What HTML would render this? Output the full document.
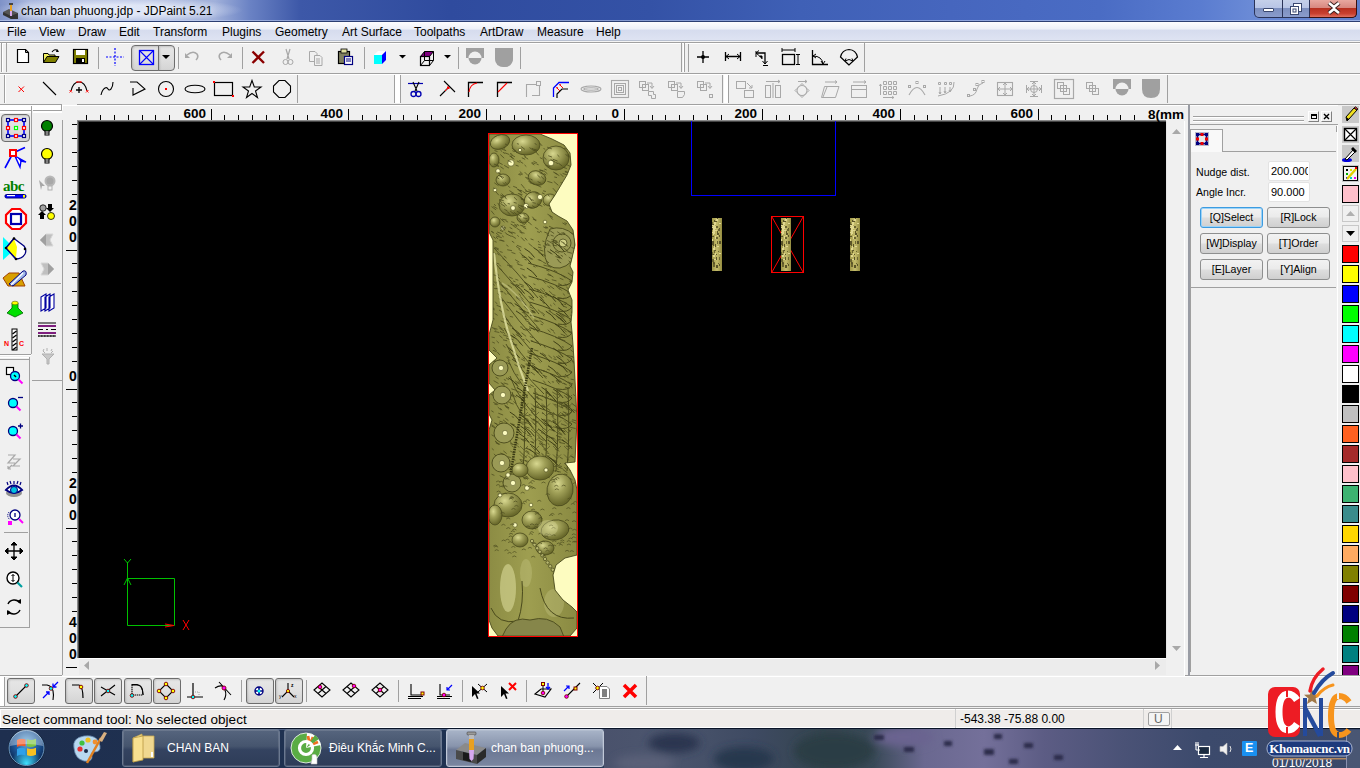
<!DOCTYPE html><html><head><meta charset="utf-8"><style>
*{margin:0;padding:0;box-sizing:border-box}
html,body{width:1360px;height:768px;overflow:hidden;background:#f0f0f0;font-family:"Liberation Sans",sans-serif;font-size:12px;color:#000;position:relative}
.a{position:absolute}
.t{white-space:nowrap;line-height:1}
svg{overflow:visible}
.pb{border:1px solid #8e8f8f;border-radius:3px;background:linear-gradient(#f2f2f2 0%,#ebebeb 45%,#dddddd 55%,#cfcfcf 100%)}
.pr{border:1px solid #6d6d6d;border-radius:3px;background:linear-gradient(#e6e6e6,#e0e0e0 50%,#d4d4d4 100%);box-shadow:inset 1px 1px 2px rgba(0,0,0,.15)}
</style></head><body>
<div class="a" style="left:0px;top:0px;width:1360px;height:21px;background:linear-gradient(90deg,#7f92c8 0px,#aab8de 30px,#b4c0e2 150px,#a0b0da 215px,#6a82c4 250px,#3d58a8 300px,#2f4b9e 450px,#3452a6 650px,#3f60b6 800px,#4666be 950px,#4a6cc4 1100px,#5a7cd0 1200px,#6a8ad6 1250px,#5e7ecc 1360px)"></div>
<div class="a" style="left:0px;top:0px;width:270px;height:20px;background:radial-gradient(ellipse 125px 13px at 118px 10px,rgba(230,236,250,.85) 40%,rgba(225,232,248,0) 100%)"></div>
<div class="a" style="left:0px;top:20px;width:1360px;height:1px;background:rgba(200,215,245,.55)"></div>
<div class="a" style="left:0px;top:21px;width:1360px;height:1px;background:#2c3f72"></div>
<svg class="a" style="left:1px;top:2px" width="18" height="18" viewBox="0 0 18 18"><path d="M2 10 L8 7 L17 11 L17 17 L10 17 Z" fill="#555"/><path d="M2 10 L10 14 L17 11 L17 17 L10 17 L2 13Z" fill="#333"/><rect x="8" y="1" width="4" height="2" fill="#444"/><rect x="9" y="3" width="2" height="6" fill="#e8a020"/><rect x="9" y="9" width="2" height="5" fill="#d8a8e8"/></svg>
<div class="a t" style="left:21px;top:5px;font-size:12px;color:#000;text-shadow:0 0 6px #fff">chan ban phuong.jdp - JDPaint 5.21</div>
<div class="a" style="left:1254px;top:0px;width:103px;height:18px;border:1px solid #2a3358;border-top:none;border-radius:0 0 5px 5px;background:linear-gradient(#c5d0ea 0%,#b8c5e6 45%,#7d90c0 50%,#8a9ccc 100%)"></div>
<div class="a" style="left:1309px;top:0px;width:48px;height:18px;border:1px solid #3a1010;border-top:none;border-radius:0 0 5px 0;background:linear-gradient(#e8a8a0 0%,#d88880 45%,#b83020 50%,#c84030 80%,#e07060 100%)"></div>
<div class="a" style="left:1282px;top:0px;width:1px;height:17px;background:#2a3358"></div>
<div class="a" style="left:1309px;top:0px;width:1px;height:17px;background:#2a3358"></div>
<div class="a" style="left:1263px;top:8px;width:11px;height:4px;background:#fff;border:1px solid #3a4870;border-radius:1px"></div>
<svg class="a" style="left:1289px;top:2px" width="14" height="13" viewBox="0 0 14 13"><rect x="4.5" y="1.5" width="8" height="8" fill="#fff" stroke="#3a4870"/><rect x="1.5" y="4.5" width="8" height="8" fill="#fff" stroke="#3a4870"/><rect x="4" y="7" width="3" height="3" fill="#fff" stroke="#3a4870" stroke-width="1"/></svg>
<svg class="a" style="left:1327px;top:2px" width="14" height="12" viewBox="0 0 14 12"><path d="M2 1 L7 5 L12 1 M2 11 L7 7 L12 11" stroke="#3a2020" stroke-width="4.5" fill="none"/><path d="M2 1 L7 5 L12 1 M2 11 L7 7 L12 11" stroke="#fff" stroke-width="2.6" fill="none"/></svg>
<div class="a" style="left:0px;top:22px;width:1360px;height:19px;background:linear-gradient(#fdfdfe 0%,#eef1f8 35%,#d6dcee 45%,#dfe4f3 100%)"></div>
<div class="a" style="left:0px;top:40px;width:1360px;height:1px;background:#b8c0d0"></div>
<div class="a" style="left:0px;top:41px;width:1360px;height:1px;background:#f4f4f4"></div>
<div class="a" style="left:0px;top:42px;width:1360px;height:1px;background:#a0a0a0"></div>
<div class="a" style="left:0px;top:43px;width:1360px;height:1px;background:#fff"></div>
<div class="a t" style="left:7px;top:26px;font-size:12px">File</div>
<div class="a t" style="left:39px;top:26px;font-size:12px">View</div>
<div class="a t" style="left:78px;top:26px;font-size:12px">Draw</div>
<div class="a t" style="left:119px;top:26px;font-size:12px">Edit</div>
<div class="a t" style="left:153px;top:26px;font-size:12px">Transform</div>
<div class="a t" style="left:222px;top:26px;font-size:12px">Plugins</div>
<div class="a t" style="left:275px;top:26px;font-size:12px">Geometry</div>
<div class="a t" style="left:342px;top:26px;font-size:12px">Art Surface</div>
<div class="a t" style="left:414px;top:26px;font-size:12px">Toolpaths</div>
<div class="a t" style="left:480px;top:26px;font-size:12px">ArtDraw</div>
<div class="a t" style="left:537px;top:26px;font-size:12px">Measure</div>
<div class="a t" style="left:596px;top:26px;font-size:12px">Help</div>
<div class="a" style="left:0px;top:73px;width:1360px;height:1px;background:#a0a0a0"></div>
<div class="a" style="left:0px;top:74px;width:1360px;height:1px;background:#fff"></div>
<div class="a" style="left:1px;top:43px;width:1px;height:29px;background:#a0a0a0"></div>
<div class="a" style="left:2px;top:43px;width:1px;height:29px;background:#fff"></div>
<div class="a" style="left:6px;top:43px;width:1px;height:29px;background:#a0a0a0"></div>
<div class="a" style="left:681px;top:43px;width:1px;height:29px;background:#a0a0a0"></div>
<div class="a" style="left:683px;top:43px;width:1px;height:29px;background:#fff"></div>
<div class="a" style="left:684px;top:43px;width:1px;height:29px;background:#a0a0a0"></div>
<div class="a" style="left:688px;top:44px;width:1px;height:28px;background:#a0a0a0"></div>
<div class="a" style="left:864px;top:43px;width:1px;height:29px;background:#a0a0a0"></div>
<div class="a" style="left:98px;top:47px;width:1px;height:22px;background:#a0a0a0"></div>
<div class="a" style="left:178px;top:47px;width:1px;height:22px;background:#a0a0a0"></div>
<div class="a" style="left:242px;top:47px;width:1px;height:22px;background:#a0a0a0"></div>
<div class="a" style="left:364px;top:47px;width:1px;height:22px;background:#a0a0a0"></div>
<div class="a" style="left:458px;top:47px;width:1px;height:22px;background:#a0a0a0"></div>
<div class="a" style="left:520px;top:47px;width:1px;height:22px;background:#a0a0a0"></div>
<div class="a" style="left:0px;top:104px;width:1360px;height:1px;background:#a0a0a0"></div>
<div class="a" style="left:0px;top:105px;width:1360px;height:1px;background:#fff"></div>
<div class="a" style="left:4px;top:75px;width:1px;height:28px;background:#a0a0a0"></div>
<div class="a" style="left:5px;top:75px;width:1px;height:28px;background:#fff"></div>
<div class="a" style="left:297px;top:75px;width:1px;height:28px;background:#a0a0a0"></div>
<div class="a" style="left:394px;top:75px;width:1px;height:28px;background:#a0a0a0"></div>
<div class="a" style="left:395px;top:75px;width:5px;height:28px;background:#fff"></div>
<div class="a" style="left:400px;top:75px;width:1px;height:28px;background:#a0a0a0"></div>
<div class="a" style="left:722px;top:75px;width:1px;height:28px;background:#a0a0a0"></div>
<div class="a" style="left:724px;top:75px;width:4px;height:28px;background:#fff"></div>
<div class="a" style="left:728px;top:75px;width:1px;height:28px;background:#a0a0a0"></div>
<div class="a" style="left:1167px;top:75px;width:1px;height:28px;background:#a0a0a0"></div>
<div class="a" style="left:77px;top:120px;width:1089px;height:538px;background:#000;border-left:2px solid;border-top:2px solid;border-color:#8a8a8a #000 #000 #8a8a8a"></div>
<div class="a" style="left:78px;top:121px;width:1088px;height:1px;background:#444"></div>
<div class="a" style="left:78px;top:121px;width:1px;height:537px;background:#444"></div>
<div class="a" style="left:0px;top:706px;width:1360px;height:1px;background:#a0a0a0"></div>
<div class="a" style="left:0px;top:708px;width:1360px;height:1px;background:#a0a0a0"></div>
<div class="a" style="left:0px;top:709px;width:1360px;height:18px;background:#fff"></div>
<div class="a" style="left:1px;top:710px;width:1359px;height:17px;background:#efecea"></div>
<div class="a" style="left:0px;top:728px;width:1360px;height:40px;background:linear-gradient(90deg,#1e2f4f 0px,#203352 560px,#2a3c5a 620px,#3a4a64 700px,#44506c 800px,#5a5c84 880px,#6c6a94 960px,#6a6a90 1040px,#54587e 1120px,#3c4868 1200px,#344262 1360px)"></div>
<div class="a" style="left:0px;top:727px;width:1360px;height:1px;background:#fff"></div>
<div class="a" style="left:0px;top:728px;width:1360px;height:1px;background:#0a1428"></div>
<div class="a" style="left:0px;top:729px;width:1360px;height:1px;background:rgba(140,160,200,.45)"></div>
<div class="a" style="left:62px;top:120px;width:1px;height:555px;background:#a0a0a0"></div>
<div class="a" style="left:62px;top:104px;width:15px;height:1px;background:#f0f0f0"></div>
<svg class="a" style="left:0;top:0" width="1360" height="125" viewBox="0 0 1360 125"><g fill="#000"><rect x="86" y="115" width="1" height="5"/><rect x="100" y="115" width="1" height="5"/><rect x="114" y="115" width="1" height="5"/><rect x="128" y="115" width="1" height="5"/><rect x="142" y="115" width="1" height="5"/><rect x="155" y="115" width="1" height="5"/><rect x="169" y="115" width="1" height="5"/><rect x="211" y="109" width="1" height="11"/><rect x="224" y="115" width="1" height="5"/><rect x="238" y="115" width="1" height="5"/><rect x="252" y="115" width="1" height="5"/><rect x="266" y="115" width="1" height="5"/><rect x="279" y="115" width="1" height="5"/><rect x="293" y="115" width="1" height="5"/><rect x="307" y="115" width="1" height="5"/><rect x="348" y="109" width="1" height="11"/><rect x="362" y="115" width="1" height="5"/><rect x="376" y="115" width="1" height="5"/><rect x="390" y="115" width="1" height="5"/><rect x="403" y="115" width="1" height="5"/><rect x="417" y="115" width="1" height="5"/><rect x="431" y="115" width="1" height="5"/><rect x="445" y="115" width="1" height="5"/><rect x="486" y="109" width="1" height="11"/><rect x="500" y="115" width="1" height="5"/><rect x="514" y="115" width="1" height="5"/><rect x="528" y="115" width="1" height="5"/><rect x="541" y="115" width="1" height="5"/><rect x="555" y="115" width="1" height="5"/><rect x="569" y="115" width="1" height="5"/><rect x="583" y="115" width="1" height="5"/><rect x="596" y="115" width="1" height="5"/><rect x="624" y="109" width="1" height="11"/><rect x="638" y="115" width="1" height="5"/><rect x="652" y="115" width="1" height="5"/><rect x="665" y="115" width="1" height="5"/><rect x="679" y="115" width="1" height="5"/><rect x="693" y="115" width="1" height="5"/><rect x="707" y="115" width="1" height="5"/><rect x="721" y="115" width="1" height="5"/><rect x="762" y="109" width="1" height="11"/><rect x="776" y="115" width="1" height="5"/><rect x="789" y="115" width="1" height="5"/><rect x="803" y="115" width="1" height="5"/><rect x="817" y="115" width="1" height="5"/><rect x="831" y="115" width="1" height="5"/><rect x="845" y="115" width="1" height="5"/><rect x="858" y="115" width="1" height="5"/><rect x="900" y="109" width="1" height="11"/><rect x="914" y="115" width="1" height="5"/><rect x="927" y="115" width="1" height="5"/><rect x="941" y="115" width="1" height="5"/><rect x="955" y="115" width="1" height="5"/><rect x="969" y="115" width="1" height="5"/><rect x="982" y="115" width="1" height="5"/><rect x="996" y="115" width="1" height="5"/><rect x="1038" y="109" width="1" height="11"/><rect x="1051" y="115" width="1" height="5"/><rect x="1065" y="115" width="1" height="5"/><rect x="1079" y="115" width="1" height="5"/><rect x="1093" y="115" width="1" height="5"/><rect x="1107" y="115" width="1" height="5"/><rect x="1120" y="115" width="1" height="5"/><rect x="1134" y="115" width="1" height="5"/></g></svg>
<div class="a t" style="left:150px;top:107px;width:56px;text-align:right;font-size:13.5px;font-weight:bold">600</div>
<div class="a t" style="left:287px;top:107px;width:56px;text-align:right;font-size:13.5px;font-weight:bold">400</div>
<div class="a t" style="left:425px;top:107px;width:56px;text-align:right;font-size:13.5px;font-weight:bold">200</div>
<div class="a t" style="left:563px;top:107px;width:56px;text-align:right;font-size:13.5px;font-weight:bold">0</div>
<div class="a t" style="left:701px;top:107px;width:56px;text-align:right;font-size:13.5px;font-weight:bold">200</div>
<div class="a t" style="left:839px;top:107px;width:56px;text-align:right;font-size:13.5px;font-weight:bold">400</div>
<div class="a t" style="left:977px;top:107px;width:56px;text-align:right;font-size:13.5px;font-weight:bold">600</div>
<div class="a t" style="left:1148px;top:108px;font-size:13.5px;font-weight:bold;letter-spacing:0px">8(mm</div>
<svg class="a" style="left:0;top:0" width="80" height="680" viewBox="0 0 80 680"><g fill="#000"><rect x="72" y="124" width="5" height="1"/><rect x="72" y="138" width="5" height="1"/><rect x="72" y="152" width="5" height="1"/><rect x="72" y="166" width="5" height="1"/><rect x="72" y="180" width="5" height="1"/><rect x="72" y="194" width="5" height="1"/><rect x="66" y="250" width="11" height="1"/><rect x="72" y="263" width="5" height="1"/><rect x="72" y="277" width="5" height="1"/><rect x="72" y="291" width="5" height="1"/><rect x="72" y="305" width="5" height="1"/><rect x="72" y="319" width="5" height="1"/><rect x="72" y="333" width="5" height="1"/><rect x="72" y="347" width="5" height="1"/><rect x="72" y="361" width="5" height="1"/><rect x="66" y="389" width="11" height="1"/><rect x="72" y="402" width="5" height="1"/><rect x="72" y="416" width="5" height="1"/><rect x="72" y="430" width="5" height="1"/><rect x="72" y="444" width="5" height="1"/><rect x="72" y="458" width="5" height="1"/><rect x="72" y="472" width="5" height="1"/><rect x="66" y="528" width="11" height="1"/><rect x="72" y="541" width="5" height="1"/><rect x="72" y="555" width="5" height="1"/><rect x="72" y="569" width="5" height="1"/><rect x="72" y="583" width="5" height="1"/><rect x="72" y="597" width="5" height="1"/><rect x="72" y="611" width="5" height="1"/><rect x="66" y="667" width="11" height="1"/></g></svg>
<div class="a t" style="left:69px;top:230px;font-size:14px;font-weight:bold">0</div>
<div class="a t" style="left:69px;top:214px;font-size:14px;font-weight:bold">0</div>
<div class="a t" style="left:69px;top:198px;font-size:14px;font-weight:bold">2</div>
<div class="a t" style="left:69px;top:369px;font-size:14px;font-weight:bold">0</div>
<div class="a t" style="left:69px;top:508px;font-size:14px;font-weight:bold">0</div>
<div class="a t" style="left:69px;top:492px;font-size:14px;font-weight:bold">0</div>
<div class="a t" style="left:69px;top:476px;font-size:14px;font-weight:bold">2</div>
<div class="a t" style="left:69px;top:647px;font-size:14px;font-weight:bold">0</div>
<div class="a t" style="left:69px;top:631px;font-size:14px;font-weight:bold">0</div>
<div class="a t" style="left:69px;top:615px;font-size:14px;font-weight:bold">4</div>
<div class="a" style="left:1166px;top:121px;width:20px;height:537px;background:#f0f0f0"></div>
<div class="a" style="left:1166px;top:121px;width:1px;height:537px;background:#e6e6e6"></div>
<svg class="a" style="left:1172px;top:129px" width="9" height="5" viewBox="0 0 9 5"><path d="M0 5 L4.5 0 L9 5Z" fill="#a8a8a8"/></svg>
<svg class="a" style="left:1172px;top:646px" width="9" height="5" viewBox="0 0 9 5"><path d="M0 0 L4.5 5 L9 0Z" fill="#a8a8a8"/></svg>
<div class="a" style="left:79px;top:658px;width:1087px;height:17px;background:#ececec;border-top:1px solid #fff"></div>
<svg class="a" style="left:84px;top:661px" width="5" height="9" viewBox="0 0 5 9"><path d="M5 0 L0 4.5 L5 9Z" fill="#a8a8a8"/></svg>
<svg class="a" style="left:1155px;top:661px" width="5" height="9" viewBox="0 0 5 9"><path d="M0 0 L5 4.5 L0 9Z" fill="#a8a8a8"/></svg>
<div class="a" style="left:1166px;top:658px;width:20px;height:17px;background:#f0f0f0"></div>
<div class="a" style="left:0px;top:675px;width:62px;height:1px;background:#a0a0a0"></div>
<div class="a" style="left:1185px;top:675px;width:175px;height:1px;background:#a0a0a0"></div>
<div class="a" style="left:0px;top:676px;width:1360px;height:1px;background:#fff"></div>
<div class="a" style="left:0px;top:105px;width:63px;height:5px;background:#fff"></div>
<div class="a" style="left:0px;top:110px;width:31px;height:1px;background:#a0a0a0"></div>
<div class="a" style="left:31px;top:106px;width:1px;height:248px;background:#a0a0a0"></div>
<div class="a" style="left:0px;top:111px;width:31px;height:2px;background:#fff"></div>
<div class="a" style="left:33px;top:110px;width:29px;height:1px;background:#a0a0a0"></div>
<div class="a" style="left:33px;top:111px;width:29px;height:2px;background:#fff"></div>
<div class="a" style="left:61px;top:105px;width:1px;height:6px;background:#a0a0a0"></div>
<div class="a" style="left:0px;top:354px;width:31px;height:1px;background:#a0a0a0"></div>
<div class="a" style="left:0px;top:355px;width:31px;height:1px;background:#fff"></div>
<div class="a" style="left:0px;top:357px;width:29px;height:1px;background:#fff"></div>
<div class="a" style="left:0px;top:359px;width:29px;height:1px;background:#a0a0a0"></div>
<div class="a" style="left:29px;top:357px;width:1px;height:271px;background:#a0a0a0"></div>
<div class="a" style="left:32px;top:380px;width:31px;height:1px;background:#a0a0a0"></div>
<div class="a" style="left:0px;top:627px;width:30px;height:1px;background:#a0a0a0"></div>
<div class="a" style="left:36px;top:283px;width:25px;height:1px;background:#a0a0a0"></div>
<div class="a" style="left:4px;top:532px;width:24px;height:1px;background:#a0a0a0"></div>
<div class="a" style="left:1184px;top:121px;width:1px;height:555px;background:#fff"></div>
<div class="a" style="left:1188px;top:105px;width:2px;height:571px;background:#999ca4"></div>
<div class="a" style="left:1193px;top:116px;width:111px;height:1px;background:#a0a0a0"></div>
<div class="a" style="left:1193px;top:117px;width:111px;height:1px;background:#fff"></div>
<div class="a" style="left:1193px;top:120px;width:111px;height:1px;background:#a0a0a0"></div>
<div class="a" style="left:1193px;top:121px;width:111px;height:1px;background:#fff"></div>
<div class="a" style="left:1308px;top:111px;width:11px;height:11px;border:1px solid;border-color:#fff #808080 #808080 #fff"></div>
<div class="a" style="left:1311px;top:114px;width:6px;height:5px;border:1px solid #000;border-top-width:2px"></div>
<div class="a" style="left:1321px;top:111px;width:11px;height:11px;border:1px solid;border-color:#fff #808080 #808080 #fff"></div>
<svg class="a" style="left:1323px;top:113px" width="7" height="7" viewBox="0 0 7 7"><path d="M1 1 L6 6 M6 1 L1 6" stroke="#000" stroke-width="1.4"/></svg>
<div class="a" style="left:1190px;top:124px;width:148px;height:1px;background:#a0a0a0"></div>
<div class="a" style="left:1337px;top:125px;width:1px;height:550px;background:#fff"></div>
<div class="a" style="left:1336px;top:126px;width:1px;height:6px;background:#a0a0a0"></div>
<div class="a" style="left:1190px;top:129px;width:33px;height:23px;background:#f9f9f9;border:1px solid #a0a0a0;border-bottom:none"></div>
<div class="a" style="left:1223px;top:151px;width:113px;height:1px;background:#a0a0a0"></div>
<div class="a" style="left:1190px;top:152px;width:1px;height:520px;background:#a0a0a0"></div>
<svg class="a" style="left:1195px;top:132px" width="14" height="14" viewBox="0 0 14 14"><rect x="0" y="0" width="14" height="14" fill="#b8b8c8"/><rect x="2.5" y="2.5" width="9" height="9" fill="#e8e8e8" stroke="#000080" stroke-width="1.6"/><rect x="1" y="1" width="3" height="3" fill="#000080"/><rect x="10" y="1" width="3" height="3" fill="#000080"/><rect x="1" y="10" width="3" height="3" fill="#000080"/><rect x="10" y="10" width="3" height="3" fill="#000080"/><rect x="5.5" y="1" width="3" height="3" fill="#e00"/><rect x="5.5" y="10" width="3" height="3" fill="#e00"/><rect x="1" y="5.5" width="3" height="3" fill="#e00"/><rect x="10" y="5.5" width="3" height="3" fill="#e00"/></svg>
<div class="a t" style="left:1196px;top:167px;font-size:10.6px">Nudge dist.</div>
<div class="a t" style="left:1196px;top:187px;font-size:10.6px">Angle Incr.</div>
<div class="a" style="left:1268px;top:161px;width:42px;height:20px;background:#fff;border:1px solid #e3e3e3;border-radius:2px"></div>
<div class="a" style="left:1268px;top:182px;width:42px;height:20px;background:#fff;border:1px solid #e3e3e3;border-radius:2px"></div>
<div class="a t" style="left:1271px;top:166px;width:37px;overflow:hidden;font-size:11px">200.000</div>
<div class="a t" style="left:1271px;top:187px;font-size:11px">90.000</div>
<div class="a pb" style="left:1200px;top:207px;width:63px;height:21px;border-color:#3c9be0;box-shadow:inset 0 0 0 1px #9bd3f8"></div>
<div class="a t" style="left:1200px;top:212px;width:63px;text-align:center;font-size:10.6px">[Q]Select</div>
<div class="a pb" style="left:1267px;top:207px;width:63px;height:21px;"></div>
<div class="a t" style="left:1267px;top:212px;width:63px;text-align:center;font-size:10.6px">[R]Lock</div>
<div class="a pb" style="left:1200px;top:233px;width:63px;height:21px;"></div>
<div class="a t" style="left:1200px;top:238px;width:63px;text-align:center;font-size:10.6px">[W]Display</div>
<div class="a pb" style="left:1267px;top:233px;width:63px;height:21px;"></div>
<div class="a t" style="left:1267px;top:238px;width:63px;text-align:center;font-size:10.6px">[T]Order</div>
<div class="a pb" style="left:1200px;top:259px;width:63px;height:21px;"></div>
<div class="a t" style="left:1200px;top:264px;width:63px;text-align:center;font-size:10.6px">[E]Layer</div>
<div class="a pb" style="left:1267px;top:259px;width:63px;height:21px;"></div>
<div class="a t" style="left:1267px;top:264px;width:63px;text-align:center;font-size:10.6px">[Y]Align</div>
<div class="a" style="left:1191px;top:287px;width:145px;height:1px;background:#a0a0a0"></div>
<div class="a" style="left:1338px;top:105px;width:22px;height:570px;background:#f0f0f0"></div>
<div class="a" style="left:1342px;top:106px;width:17px;height:17px;background:#c8c8c8"></div>
<svg class="a" style="left:1343px;top:106px" width="16" height="16" viewBox="0 0 16 16"><path d="M4 15 L3 11 L11 2 L14 4 L6 13Z" fill="#f0e020" stroke="#000" stroke-width="1"/><path d="M11 2 L12.5 0.8 L15 3 L14 4Z" fill="#e04040" stroke="#000" stroke-width=".8"/><path d="M3 11 L4 15 L6 13" fill="#000"/></svg>
<div class="a" style="left:1342px;top:126px;width:17px;height:17px;background:#c8c8c8"></div>
<svg class="a" style="left:1343px;top:127px" width="15" height="15" viewBox="0 0 15 15"><rect x="1.5" y="1.5" width="12" height="12" fill="#fff" stroke="#000" stroke-width="1.4"/><path d="M1.5 1.5 L13.5 13.5 M13.5 1.5 L1.5 13.5" stroke="#000" stroke-width="1.2"/></svg>
<div class="a" style="left:1342px;top:145px;width:17px;height:17px;background:#c8c8c8"></div>
<svg class="a" style="left:1342px;top:145px" width="17" height="17" viewBox="0 0 17 17"><ellipse cx="5" cy="15" rx="5" ry="2" fill="#0000e0"/><path d="M3 14 L11 5 L13 7 L5 15Z" fill="#fff" stroke="#000" stroke-width="1"/><path d="M11 2 L15 6 L13 8 L9 4Z" fill="#000"/></svg>
<div class="a" style="left:1342px;top:165px;width:17px;height:17px;background:#c8c8c8"></div>
<svg class="a" style="left:1343px;top:166px" width="15" height="15" viewBox="0 0 15 15"><rect x="0.5" y="0.5" width="14" height="14" fill="#f4f4f4" stroke="#000"/><rect x="3" y="3" width="2" height="2" fill="#000"/><rect x="7" y="3" width="2" height="2" fill="#e0e000"/><rect x="3" y="7" width="2" height="2" fill="#0a0"/><rect x="3" y="11" width="2" height="2" fill="#00e"/><rect x="7" y="11" width="2" height="2" fill="#0cc"/><rect x="11" y="11" width="2" height="2" fill="#e0e"/><path d="M4 13 L13 3" stroke="#e0d000" stroke-width="2.4"/><rect x="12" y="1" width="2" height="2" fill="#e00"/></svg>
<div class="a" style="left:1342px;top:185px;width:17px;height:18px;background:#ffc0cb;border:1px solid #000"></div>
<div class="a" style="left:1342px;top:205px;width:17px;height:17px;background:#f0f0f0;border:1px solid #c8c8c8"></div>
<svg class="a" style="left:1346px;top:211px" width="9" height="5" viewBox="0 0 9 5"><path d="M0 5 L4.5 0 L9 5Z" fill="#b0b0b0"/></svg>
<div class="a" style="left:1342px;top:225px;width:17px;height:17px;background:#f0f0f0;border:1px solid #c8c8c8"></div>
<svg class="a" style="left:1346px;top:231px" width="9" height="5" viewBox="0 0 9 5"><path d="M0 0 L4.5 5 L9 0Z" fill="#000"/></svg>
<div class="a" style="left:1342px;top:245px;width:17px;height:18px;background:#ff0000;border:1px solid #000;"></div>
<div class="a" style="left:1342px;top:265px;width:17px;height:18px;background:#ffff00;border:1px solid #000;"></div>
<div class="a" style="left:1342px;top:285px;width:17px;height:18px;background:#0000ff;border:1px solid #000;"></div>
<div class="a" style="left:1342px;top:305px;width:17px;height:18px;background:#00ff00;border:1px solid #000;"></div>
<div class="a" style="left:1342px;top:325px;width:17px;height:18px;background:#00ffff;border:1px solid #000;"></div>
<div class="a" style="left:1342px;top:345px;width:17px;height:18px;background:#ff00ff;border:1px solid #000;"></div>
<div class="a" style="left:1342px;top:365px;width:17px;height:18px;background:#ffffff;border:1px solid #000;"></div>
<div class="a" style="left:1342px;top:385px;width:17px;height:18px;background:#000000;border:1px solid #000;"></div>
<div class="a" style="left:1342px;top:405px;width:17px;height:18px;background:#c0c0c0;border:1px solid #000;"></div>
<div class="a" style="left:1342px;top:425px;width:17px;height:18px;background:#ff6020;border:1px solid #000;"></div>
<div class="a" style="left:1342px;top:445px;width:17px;height:18px;background:#a52a2a;border:1px solid #000;"></div>
<div class="a" style="left:1342px;top:465px;width:17px;height:18px;background:#ffc0cb;border:1px solid #000;"></div>
<div class="a" style="left:1342px;top:485px;width:17px;height:18px;background:#3cb371;border:1px solid #000;"></div>
<div class="a" style="left:1342px;top:505px;width:17px;height:18px;background:#3a8c8c;border:1px solid #000;"></div>
<div class="a" style="left:1342px;top:525px;width:17px;height:18px;background:#ffd700;border:1px solid #000;"></div>
<div class="a" style="left:1342px;top:545px;width:17px;height:18px;background:#ffaa60;border:1px solid #000;"></div>
<div class="a" style="left:1342px;top:565px;width:17px;height:18px;background:#808000;border:1px solid #000;"></div>
<div class="a" style="left:1342px;top:585px;width:17px;height:18px;background:#800000;border:1px solid #000;"></div>
<div class="a" style="left:1342px;top:605px;width:17px;height:18px;background:#000080;border:1px solid #000;"></div>
<div class="a" style="left:1342px;top:625px;width:17px;height:18px;background:#008000;border:1px solid #000;"></div>
<div class="a" style="left:1342px;top:645px;width:17px;height:18px;background:#008080;border:1px solid #000;"></div>
<div class="a" style="left:1342px;top:665px;width:17px;height:10px;background:#800080;border:1px solid #000;border-bottom:none"></div>
<div class="a" style="left:0px;top:677px;width:4px;height:29px;background:#fff"></div>
<div class="a" style="left:4px;top:677px;width:1px;height:29px;background:#a0a0a0"></div>
<div class="a" style="left:241px;top:680px;width:1px;height:22px;background:#a0a0a0"></div>
<div class="a" style="left:306px;top:680px;width:1px;height:22px;background:#a0a0a0"></div>
<div class="a" style="left:398px;top:680px;width:1px;height:22px;background:#a0a0a0"></div>
<div class="a" style="left:462px;top:680px;width:1px;height:22px;background:#a0a0a0"></div>
<div class="a" style="left:526px;top:680px;width:1px;height:22px;background:#a0a0a0"></div>
<div class="a" style="left:646px;top:676px;width:1px;height:29px;background:#a0a0a0"></div>
<div class="a pr" style="left:7px;top:678px;width:28px;height:26px"></div>
<div class="a pr" style="left:65px;top:678px;width:28px;height:26px"></div>
<div class="a pr" style="left:94px;top:678px;width:28px;height:26px"></div>
<div class="a pr" style="left:124px;top:678px;width:28px;height:26px"></div>
<div class="a pr" style="left:153px;top:678px;width:28px;height:26px"></div>
<div class="a pr" style="left:246px;top:678px;width:28px;height:26px"></div>
<div class="a pr" style="left:275px;top:678px;width:28px;height:26px"></div>
<div class="a t" style="left:2px;top:713px;font-size:13.5px">Select command tool: No selected object</div>
<div class="a" style="left:955px;top:709px;width:1px;height:19px;background:#d0d0d0"></div>
<div class="a t" style="left:960px;top:713px;font-size:12px">-543.38 -75.88 0.00</div>
<div class="a" style="left:1143px;top:709px;width:1px;height:19px;background:#d0d0d0"></div>
<div class="a" style="left:1171px;top:709px;width:1px;height:19px;background:#d0d0d0"></div>
<div class="a" style="left:1148px;top:712px;width:22px;height:14px;border:1px solid #a0a0a0;border-radius:2px;background:#f4f4f4"></div>
<div class="a t" style="left:1154px;top:713px;font-size:12px;color:#666">U</div>
<svg class="a" style="left:13px;top:47px" width="20" height="20" viewBox="0 0 20 20"><path d="M4.5 2.5 H12.5 L15.5 5.5 V15.5 H4.5Z" fill="#fff" stroke="#000" stroke-width="1.2"/><path d="M12.5 2.5 V5.5 H15.5" fill="none" stroke="#000"/></svg>
<svg class="a" style="left:42px;top:47px" width="20" height="20" viewBox="0 0 20 20"><path d="M1.5 6.5 H6 L7 8 H13 V15.5 H1.5Z" fill="#f0f060" stroke="#000"/><path d="M1.5 15.5 L5 9.5 H17 L13.5 15.5Z" fill="#808000" stroke="#000"/><path d="M10 5 Q13 1 16 4" fill="none" stroke="#000" stroke-width="1.1"/><path d="M15 2 L17 5 L14 5Z" fill="#000"/></svg>
<svg class="a" style="left:71px;top:47px" width="20" height="20" viewBox="0 0 20 20"><rect x="2.5" y="2.5" width="14" height="14" fill="#808000" stroke="#000" stroke-width="1.2"/><rect x="5" y="3" width="9" height="5" fill="#fff"/><rect x="5" y="11" width="9" height="5" fill="#000"/><rect x="11" y="12" width="2" height="3" fill="#fff"/></svg>
<svg class="a" style="left:105px;top:47px" width="20" height="20" viewBox="0 0 20 20"><path d="M10 1 V19 M1 10 H19" stroke="#0000ff" stroke-width="1.2" stroke-dasharray="2 1.5"/></svg>
<div class="a pr" style="left:131px;top:45px;width:28px;height:26px;border-radius:4px 0 0 4px"></div>
<div class="a pr" style="left:158px;top:45px;width:17px;height:26px;border-radius:0 4px 4px 0"></div>
<svg class="a" style="left:137px;top:48px" width="20" height="20" viewBox="0 0 20 20"><rect x="2.5" y="2.5" width="14" height="14" fill="none" stroke="#0000ff" stroke-width="1.3"/><path d="M2.5 2.5 L16.5 16.5 M16.5 2.5 L2.5 16.5" stroke="#0000ff" stroke-width="1.1"/></svg>
<svg class="a" style="left:157px;top:47px" width="20" height="20" viewBox="0 0 20 20"><path d="M5 8 H13 L9 12Z" fill="#000"/></svg>
<svg class="a" style="left:183px;top:47px" width="20" height="20" viewBox="0 0 20 20"><path d="M4 8 Q10 3 14 7 Q16 10 13 13" fill="none" stroke="#a8a8a8" stroke-width="1.6"/><path d="M2 6 L7 11 L2 11Z" fill="#a8a8a8"/></svg>
<svg class="a" style="left:214px;top:47px" width="20" height="20" viewBox="0 0 20 20"><path d="M16 8 Q10 3 6 7 Q4 10 7 13" fill="none" stroke="#a8a8a8" stroke-width="1.6"/><path d="M18 6 L13 11 L18 11Z" fill="#a8a8a8"/></svg>
<svg class="a" style="left:249px;top:48px" width="20" height="20" viewBox="0 0 20 20"><path d="M3.5 3.5 L15 15 M15 3.5 L3.5 15" stroke="#8b0000" stroke-width="2.4"/></svg>
<svg class="a" style="left:278px;top:47px" width="20" height="20" viewBox="0 0 20 20"><path d="M8 2 L11 12 M12 2 L9 12" stroke="#a8a8a8" stroke-width="1.2"/><circle cx="7.5" cy="15" r="2.5" fill="none" stroke="#a8a8a8"/><circle cx="12.5" cy="15" r="2.5" fill="none" stroke="#a8a8a8"/></svg>
<svg class="a" style="left:306px;top:48px" width="20" height="20" viewBox="0 0 20 20"><path d="M3.5 3.5 H9 L11 5.5 V13.5 H3.5Z" fill="#f0f0f0" stroke="#a8a8a8"/><path d="M8.5 7.5 H14 L16 9.5 V17.5 H8.5Z" fill="#f0f0f0" stroke="#a8a8a8"/><path d="M10 11 H14 M10 13 H14 M10 15 H14" stroke="#a8a8a8"/></svg>
<svg class="a" style="left:336px;top:47px" width="20" height="20" viewBox="0 0 20 20"><rect x="2.5" y="4.5" width="11" height="12" fill="#808060" stroke="#000" stroke-width="1.2"/><rect x="5" y="2" width="6" height="4" fill="#e0e0a0" stroke="#000" stroke-width=".8"/><rect x="8.5" y="9.5" width="8" height="8" fill="#fff" stroke="#000080" stroke-width="1.2"/><path d="M10 12 H15 M10 14 H15" stroke="#000080"/></svg>
<svg class="a" style="left:371px;top:48px" width="20" height="20" viewBox="0 0 20 20"><path d="M3 7 L7 3 H15 L11 7Z" fill="#fff"/><rect x="3" y="7" width="8" height="9" fill="#00ffff"/><path d="M11 7 L15 3 V12 L11 16Z" fill="#0000ff"/></svg>
<svg class="a" style="left:393px;top:47px" width="20" height="20" viewBox="0 0 20 20"><path d="M6 8 H13 L9.5 11.5Z" fill="#000"/></svg>
<svg class="a" style="left:417px;top:48px" width="20" height="20" viewBox="0 0 20 20"><path d="M3.5 8.5 L7.5 3.5 H16.5 L12.5 8.5Z" fill="#800080" stroke="#000"/><rect x="3.5" y="8.5" width="9" height="9" fill="none" stroke="#000" stroke-width="1.2"/><path d="M12.5 17.5 L16.5 12.5 V3.5 M3.5 17.5 L7.5 12.5 H16.5 M7.5 3.5 V12.5" fill="none" stroke="#000"/></svg>
<svg class="a" style="left:438px;top:47px" width="20" height="20" viewBox="0 0 20 20"><path d="M6 8 H13 L9.5 11.5Z" fill="#000"/></svg>
<svg class="a" style="left:465px;top:47px" width="20" height="22" viewBox="0 0 20 22"><path d="M1 1 H19 V11 H1Z M1 11" fill="#a0a0a0"/><circle cx="10" cy="11" r="6.5" fill="#a0a0a0"/><path d="M3.5 11 A6.5 6.5 0 0 1 16.5 11Z" fill="#f0f0f0"/></svg>
<svg class="a" style="left:494px;top:47px" width="20" height="22" viewBox="0 0 20 22"><path d="M1 1 H19 V11 A9 9 0 0 1 1 11Z" fill="#a0a0a0"/><path d="M1 1 H19 V11 Q19 20 10 20 Q1 20 1 11Z" fill="#a0a0a0"/></svg>
<svg class="a" style="left:693px;top:47px" width="20" height="20" viewBox="0 0 20 20"><path d="M10 4 V16 M4 10 H16" stroke="#000" stroke-width="1.3"/><circle cx="10" cy="10" r="2" fill="#000"/></svg>
<svg class="a" style="left:723px;top:47px" width="20" height="20" viewBox="0 0 20 20"><path d="M2.5 5 V14 M17.5 5 V14 M3 9.5 H17" stroke="#000" stroke-width="1.3"/><path d="M3 9.5 L6 7 M3 9.5 L6 12 M17 9.5 L14 7 M17 9.5 L14 12" stroke="#000"/></svg>
<svg class="a" style="left:753px;top:49px" width="20" height="20" viewBox="0 0 20 20"><path d="M3 4 H12 V15" fill="none" stroke="#000" stroke-width="1.3"/><path d="M3 4 L6 1.5 M3 4 L6 6.5 M12 15 L9.5 12 M12 15 L14.5 12" stroke="#000"/><path d="M3 2 V8 M6 7 H9 V10 M10 16.5 H15" stroke="#000"/></svg>
<svg class="a" style="left:780px;top:48px" width="22" height="20" viewBox="0 0 22 20"><rect x="2.5" y="6.5" width="12" height="10" fill="none" stroke="#000" stroke-width="1.3"/><path d="M2 2 H15 M2 0 V4 M15 0 V4 M18 6.5 V16.5 M16 6.5 H20 M16 16.5 H20" stroke="#000"/></svg>
<svg class="a" style="left:809px;top:48px" width="22" height="20" viewBox="0 0 22 20"><path d="M3.5 2 V16.5 H19" fill="none" stroke="#000" stroke-width="1.3"/><path d="M4 8 Q13 8 14 16" fill="none" stroke="#000"/><path d="M14 16 L12 13 M14 16 L16 13 M4 8 L7 6 M4 8 L7 10" stroke="#000"/></svg>
<svg class="a" style="left:839px;top:48px" width="20" height="20" viewBox="0 0 20 20"><path d="M10 17 L1.5 9 Q3 2 10 1.5 Q17 2 18.5 9Z" fill="none" stroke="#000" stroke-width="1.2"/><path d="M6 13 Q10 10 14 13 M6 13 L7 10.5 M14 13 L13 10.5" fill="none" stroke="#000"/></svg>
<svg class="a" style="left:11px;top:79px" width="20" height="20" viewBox="0 0 20 20"><path d="M7.5 7.5 L13 13 M13 7.5 L7.5 13" stroke="#ff0000" stroke-width="1"/></svg>
<svg class="a" style="left:40px;top:79px" width="20" height="20" viewBox="0 0 20 20"><path d="M3 3 L16 16" stroke="#000" stroke-width="1.1"/></svg>
<svg class="a" style="left:69px;top:79px" width="20" height="20" viewBox="0 0 20 20"><path d="M2 12 Q4 3 10 3 Q16 3 18 12" fill="none" stroke="#000" stroke-width="1.1"/><path d="M10 8 V14 M7 11 H13" stroke="#000" stroke-width="1.3"/><path d="M0.5 11 L3 13.5 M3 11 L0.5 13.5 M17 11 L19.5 13.5 M19.5 11 L17 13.5 M7.5 2 L9.5 4 M9.5 2 L7.5 4 M10.5 2 L12.5 4 M12.5 2 L10.5 4" stroke="#ff0000" stroke-width=".9"/></svg>
<svg class="a" style="left:97px;top:79px" width="20" height="20" viewBox="0 0 20 20"><path d="M4 16 Q5 11 8 9 Q10 8 11 10 Q12 12 14 10 Q16 7 16 3" fill="none" stroke="#000" stroke-width="1.1"/></svg>
<svg class="a" style="left:127px;top:79px" width="20" height="20" viewBox="0 0 20 20"><path d="M3 3 H10 L18 10 L6 16 V9" fill="none" stroke="#000" stroke-width="1.1"/></svg>
<svg class="a" style="left:156px;top:79px" width="20" height="20" viewBox="0 0 20 20"><circle cx="10" cy="10" r="7.5" fill="none" stroke="#000" stroke-width="1.1"/><path d="M9 9 L11 11 M11 9 L9 11" stroke="#ff0000"/></svg>
<svg class="a" style="left:184px;top:79px" width="22" height="20" viewBox="0 0 22 20"><ellipse cx="11" cy="10" rx="10" ry="3.8" fill="none" stroke="#000" stroke-width="1.1"/></svg>
<svg class="a" style="left:213px;top:79px" width="22" height="20" viewBox="0 0 22 20"><rect x="1.5" y="3.5" width="18" height="13" fill="none" stroke="#000" stroke-width="1.2"/><path d="M0 2 L2 4 M2 2 L0 4 M19 16 L21 18 M21 16 L19 18" stroke="#ff0000"/></svg>
<svg class="a" style="left:242px;top:79px" width="20" height="20" viewBox="0 0 20 20"><path d="M10 1.5 L12.3 8 L19 8 L13.5 12 L15.5 18.5 L10 14.5 L4.5 18.5 L6.5 12 L1 8 L7.7 8Z" fill="none" stroke="#000" stroke-width="1.1"/></svg>
<svg class="a" style="left:272px;top:79px" width="20" height="20" viewBox="0 0 20 20"><path d="M7 1.5 H13 L18.5 7 V13 L13 18.5 H7 L1.5 13 V7Z" fill="none" stroke="#000" stroke-width="1.1"/></svg>
<svg class="a" style="left:406px;top:79px" width="20" height="20" viewBox="0 0 20 20"><path d="M2 4.5 H17" stroke="#0000b0" stroke-width="1.2"/><path d="M7 3 L11 12 M13 3 L9 12" stroke="#000" stroke-width="1.1"/><circle cx="7.5" cy="15" r="2.5" fill="none" stroke="#0000b0" stroke-width="1.3"/><circle cx="12.5" cy="15" r="2.5" fill="none" stroke="#0000b0" stroke-width="1.3"/></svg>
<svg class="a" style="left:437px;top:79px" width="20" height="20" viewBox="0 0 20 20"><path d="M3 17 L12 8" stroke="#000" stroke-width="1.1"/><path d="M7 2 L18 13" stroke="#000" stroke-width="1.1"/><path d="M12 8 L10 8 L12 10Z M11.5 8.5 L8 12" stroke="#ff0000" fill="#ff0000"/></svg>
<svg class="a" style="left:465px;top:79px" width="20" height="20" viewBox="0 0 20 20"><path d="M3.5 18 V3.5 H18" fill="none" stroke="#000" stroke-width="1.3"/><path d="M4 13 Q5 5 12 4" fill="none" stroke="#ff0000" stroke-width="1.1"/></svg>
<svg class="a" style="left:494px;top:79px" width="20" height="20" viewBox="0 0 20 20"><path d="M3.5 18 V3.5 H18" fill="none" stroke="#000" stroke-width="1.3"/><path d="M4 13 L13 4" stroke="#ff0000" stroke-width="1.1"/></svg>
<svg class="a" style="left:523px;top:79px" width="20" height="20" viewBox="0 0 20 20"><path d="M3.5 18 V5.5 H14 M9 16.5 H16.5 V7" fill="none" stroke="#a8a8a8" stroke-width="1.1"/><rect x="13.5" y="2.5" width="4" height="4" fill="none" stroke="#a8a8a8"/></svg>
<svg class="a" style="left:551px;top:79px" width="20" height="20" viewBox="0 0 20 20"><path d="M2.5 18 V9 L8 3.5 H18" fill="none" stroke="#0000ff" stroke-width="1.3"/><path d="M6 19 V15 L11 10 H17" fill="none" stroke="#000" stroke-width="1.2"/><path d="M6 9 L9 12 M9 6 L12 9" stroke="#ff0000"/><path d="M5 8 L7 8 L6 10Z M8 5 L10 5 L9 7Z" fill="#ff0000"/></svg>
<svg class="a" style="left:580px;top:79px" width="22" height="20" viewBox="0 0 22 20"><ellipse cx="11" cy="10" rx="10" ry="3" fill="none" stroke="#a8a8a8" stroke-width="1.1"/><ellipse cx="11" cy="10" rx="7.5" ry="1.2" fill="none" stroke="#a8a8a8"/></svg>
<svg class="a" style="left:610px;top:79px" width="20" height="20" viewBox="0 0 20 20"><rect x="1.5" y="1.5" width="17" height="17" fill="none" stroke="#a8a8a8" stroke-width="1.1"/><rect x="4.5" y="4.5" width="11" height="11" fill="none" stroke="#a8a8a8"/><rect x="6.5" y="6.5" width="7" height="7" fill="none" stroke="#a8a8a8"/><rect x="8.5" y="8.5" width="3" height="3" fill="none" stroke="#a8a8a8"/></svg>
<svg class="a" style="left:638px;top:79px" width="20" height="20" viewBox="0 0 20 20"><rect x="1.5" y="2.5" width="6" height="6" fill="none" stroke="#a8a8a8"/><rect x="4.5" y="5.5" width="6" height="6" fill="none" stroke="#a8a8a8"/><path d="M9 4 H14 V9 M12 7 L14 9.5 L16 7" fill="none" stroke="#a8a8a8"/><path d="M10.5 12.5 H15.5 V15.5 H17.5 V19.5 H13.5 V16.5 H10.5Z" fill="none" stroke="#a8a8a8"/></svg>
<svg class="a" style="left:667px;top:79px" width="20" height="20" viewBox="0 0 20 20"><rect x="1.5" y="2.5" width="6" height="6" fill="none" stroke="#a8a8a8"/><rect x="4.5" y="5.5" width="6" height="6" fill="none" stroke="#a8a8a8"/><path d="M9 4 H14 V9 M12 7 L14 9.5 L16 7" fill="none" stroke="#a8a8a8"/><path d="M10.5 12.5 H17.5 V15.5 L15.5 18.5 H10.5Z" fill="none" stroke="#a8a8a8"/></svg>
<svg class="a" style="left:696px;top:79px" width="20" height="20" viewBox="0 0 20 20"><rect x="1.5" y="2.5" width="6" height="6" fill="none" stroke="#a8a8a8"/><rect x="4.5" y="5.5" width="6" height="6" fill="none" stroke="#a8a8a8"/><path d="M9 4 H14 V9 M12 7 L14 9.5 L16 7" fill="none" stroke="#a8a8a8"/><rect x="13.5" y="15.5" width="3" height="3" fill="none" stroke="#a8a8a8"/></svg>
<svg class="a" style="left:735px;top:79px" width="20" height="20" viewBox="0 0 20 20"><rect x="1.5" y="2.5" width="9" height="7" stroke="#a8a8a8" fill="none"/><rect x="9.5" y="11.5" width="9" height="7" stroke="#a8a8a8" fill="none"/><path d="M12 4 L17 9 M17 6 V9 H14" stroke="#a8a8a8" fill="none"/></svg>
<svg class="a" style="left:763px;top:79px" width="20" height="20" viewBox="0 0 20 20"><rect x="2.5" y="6.5" width="5" height="12" stroke="#a8a8a8" fill="none"/><rect x="12.5" y="6.5" width="5" height="12" stroke="#a8a8a8" fill="none"/><path d="M10 4 V19 M3 2.5 H17 M15 1 L17 2.5 L15 4" stroke="#a8a8a8" fill="none"/></svg>
<svg class="a" style="left:792px;top:79px" width="20" height="20" viewBox="0 0 20 20"><path d="M6 2.5 H15 M13 1 L15 2.5 L13 4" stroke="#a8a8a8" fill="none"/><circle cx="10" cy="11.5" r="5" stroke="#a8a8a8" fill="none" stroke-width="1.1"/><path d="M8 6.5 L10 4.5 L12 6.5 M8 16.5 L10 18.5 L12 16.5 M5 9.5 L3 11.5 L5 13.5 M15 9.5 L17 11.5 L15 13.5" stroke="#a8a8a8" fill="none"/></svg>
<svg class="a" style="left:820px;top:79px" width="20" height="20" viewBox="0 0 20 20"><path d="M4.5 7.5 H19 L15.5 18.5 H1.5Z M7 8 L3 18" stroke="#a8a8a8" fill="none"/><path d="M5 3 H17 M15 1.5 L17 3 L15 4.5" stroke="#a8a8a8" fill="none"/></svg>
<svg class="a" style="left:849px;top:79px" width="20" height="20" viewBox="0 0 20 20"><rect x="2.5" y="6.5" width="15" height="12" stroke="#a8a8a8" fill="none"/><path d="M2.5 10.5 H17.5 M4 3 H17 M15 1.5 L17 3 L15 4.5" stroke="#a8a8a8" fill="none"/></svg>
<svg class="a" style="left:878px;top:79px" width="20" height="20" viewBox="0 0 20 20"><path d="M5.5 2.5 h3 v3 h-3z M10.5 2.5 h3 v3 h-3z M15.5 2.5 h3 v3 h-3z M5.5 7.5 h3 v3 h-3z M10.5 7.5 h3 v3 h-3z M15.5 7.5 h3 v3 h-3z M5.5 12.5 h3 v3 h-3z M10.5 12.5 h3 v3 h-3z M15.5 12.5 h3 v3 h-3z M2.5 5 V16 M1.5 7 L2.5 5 L3.5 7 M5 18.5 H16 M14 17.5 L16 18.5 L14 19.5" stroke="#a8a8a8" fill="none"/></svg>
<svg class="a" style="left:907px;top:79px" width="20" height="20" viewBox="0 0 20 20"><path d="M2 16 Q10 1 18 16" stroke="#a8a8a8" fill="none" stroke-width="1.1"/><rect x="1.5" y="6.5" width="2" height="2" stroke="#a8a8a8" fill="none"/><rect x="9" y="2.5" width="2" height="2" stroke="#a8a8a8" fill="none"/><rect x="16.5" y="6.5" width="2" height="2" stroke="#a8a8a8" fill="none"/></svg>
<svg class="a" style="left:936px;top:79px" width="20" height="20" viewBox="0 0 20 20"><path d="M2.5 3.5 h2 v2 h-2z M8.5 3.5 h2 v2 h-2z M13.5 3.5 h2 v2 h-2z M4 8 V15 M3 13 L4 15 L5 13 M9 8 V14 M8 12 L9 14 L10 12 M14 8 V13 M13 11 L14 13 L15 11 M18 3 Q19 14 2 17" stroke="#a8a8a8" fill="none"/></svg>
<svg class="a" style="left:966px;top:79px" width="20" height="20" viewBox="0 0 20 20"><path d="M4 17 Q10 16 11 10 Q12 5 17 4" stroke="#a8a8a8" fill="none"/><rect x="1.5" y="15.5" width="2" height="2" stroke="#a8a8a8" fill="none"/><rect x="7.5" y="9.5" width="2" height="2" stroke="#a8a8a8" fill="none"/><rect x="10" y="4.5" width="2" height="2" stroke="#a8a8a8" fill="none"/><rect x="16" y="1.5" width="2" height="2" stroke="#a8a8a8" fill="none"/></svg>
<svg class="a" style="left:995px;top:79px" width="20" height="20" viewBox="0 0 20 20"><rect x="2.5" y="3.5" width="15" height="13" stroke="#a8a8a8" fill="none" stroke-width="1.1"/><path d="M10 4 V16 M3 10 H17 M8 6 L10 4 L12 6 M8 14 L10 16 L12 14 M5 8 L3 10 L5 12 M15 8 L17 10 L15 12" stroke="#a8a8a8" fill="none"/></svg>
<svg class="a" style="left:1024px;top:79px" width="20" height="20" viewBox="0 0 20 20"><path d="M10 2 V18 M2 10 H18 M6 2.5 H14 M6 17.5 H14 M2.5 6 V14 M17.5 6 V14 M8 5 L10 3 L12 5 M8 15 L10 17 L12 15 M5 8 L3 10 L5 12 M15 8 L17 10 L15 12" stroke="#a8a8a8" fill="none"/><circle cx="10" cy="10" r="3.5" stroke="#a8a8a8" fill="none"/></svg>
<svg class="a" style="left:1054px;top:79px" width="20" height="20" viewBox="0 0 20 20"><rect x="0.5" y="0.5" width="19" height="19" stroke="#a8a8a8" fill="none" stroke-width="1.2"/><rect x="3.5" y="3.5" width="6" height="6" stroke="#a8a8a8" fill="none"/><rect x="6.5" y="6.5" width="6" height="6" stroke="#a8a8a8" fill="none"/><rect x="9.5" y="9.5" width="6" height="6" stroke="#a8a8a8" fill="none"/></svg>
<svg class="a" style="left:1083px;top:79px" width="20" height="20" viewBox="0 0 20 20"><rect x="3.5" y="3.5" width="6" height="6" stroke="#a8a8a8" fill="none"/><rect x="6.5" y="6.5" width="6" height="6" stroke="#a8a8a8" fill="none"/><rect x="9.5" y="9.5" width="6" height="6" stroke="#a8a8a8" fill="none"/></svg>
<svg class="a" style="left:1112px;top:78px" width="20" height="22" viewBox="0 0 20 22"><path d="M1 1 H19 V11 H1Z" fill="#a0a0a0"/><circle cx="10" cy="11" r="6.5" fill="#a0a0a0"/><path d="M3.5 11 A6.5 6.5 0 0 1 16.5 11Z" fill="#f0f0f0"/></svg>
<svg class="a" style="left:1141px;top:78px" width="20" height="22" viewBox="0 0 20 22"><path d="M1 1 H19 V11 Q19 20 10 20 Q1 20 1 11Z" fill="#a0a0a0"/></svg>
<div class="a pr" style="left:1px;top:114px;width:29px;height:28px;border-radius:4px"></div>
<svg class="a" style="left:5px;top:117px" width="22" height="22" viewBox="0 0 22 22"><rect x="3" y="3" width="16" height="16" fill="none" stroke="#0000ff" stroke-width="1.6"/><g fill="#fff" stroke-width="1.2"><rect x="1.5" y="1.5" width="3" height="3" stroke="#000080"/><rect x="17.5" y="1.5" width="3" height="3" stroke="#000080"/><rect x="1.5" y="17.5" width="3" height="3" stroke="#000080"/><rect x="17.5" y="17.5" width="3" height="3" stroke="#000080"/><rect x="9.5" y="1.5" width="3" height="3" stroke="#ff0000"/><rect x="9.5" y="17.5" width="3" height="3" stroke="#ff0000"/><rect x="1.5" y="9.5" width="3" height="3" stroke="#ff0000"/><rect x="17.5" y="9.5" width="3" height="3" stroke="#ff0000"/><rect x="9.5" y="9.5" width="3" height="3" stroke="#00ff00"/></g></svg>
<svg class="a" style="left:3px;top:146px" width="24" height="24" viewBox="0 0 24 24"><path d="M10 7 L22 1.5 M10 7 L2 22" stroke="#0000ff" stroke-width="1.6"/><path d="M12 10 L23 16 L18 15 L17 21Z" fill="#fff" stroke="#0000ff" stroke-width="1.4"/><path d="M14 11 L23 16 L18 16Z" fill="#0000ff"/><rect x="7" y="4" width="6" height="6" fill="#fff" stroke="#ff0000" stroke-width="2"/></svg>
<div class="a t" style="left:3px;top:179px;font-size:15px;font-weight:bold;font-family:'Liberation Serif',serif;color:#008000;letter-spacing:-0.5px">abc</div>
<svg class="a" style="left:4px;top:193px" width="23" height="6" viewBox="0 0 23 6"><rect x="1" y="1.5" width="21" height="3.5" rx="1.5" fill="#0000ff" stroke="#000080"/><rect x="3" y="2" width="8" height="1.2" fill="#fff"/><rect x="19" y="2" width="2" height="2.5" fill="#ff0"/></svg>
<svg class="a" style="left:4px;top:207px" width="24" height="24" viewBox="0 0 24 24"><path d="M8 2 H16 L22 8 V16 L16 22 H8 L2 16 V8Z" fill="#fff" stroke="#ff0000" stroke-width="2.2"/><rect x="7" y="7" width="10" height="10" fill="#fff" stroke="#0000b0" stroke-width="2.2"/></svg>
<svg class="a" style="left:3px;top:237px" width="24" height="24" viewBox="0 0 24 24"><path d="M0 0 L12 12 L0 23Z" fill="#00ffff"/><path d="M11 1.5 L21 9 Q24 13 22 17 Q19 22 13 22 L3 11Z" fill="#fff" stroke="#000080" stroke-width="1.3"/><path d="M11 2 L3 11 L13 21 L14 10Z" fill="#ffff00"/><path d="M11 1.5 L3 11 L13 22" fill="none" stroke="#000080" stroke-width="1.3"/><circle cx="11" cy="1.5" r="1.3" fill="#000"/><circle cx="3" cy="11" r="1.3" fill="#000"/><circle cx="13" cy="22" r="1.3" fill="#000"/><circle cx="22" cy="12" r="1.3" fill="#000"/></svg>
<svg class="a" style="left:3px;top:268px" width="24" height="20" viewBox="0 0 24 20"><path d="M0 10 L6 5 H16 L22 18 H5Z" fill="#d8a000" stroke="#a04000"/><path d="M6 16 L20 3 Q24 2 23 7 L10 18Z" fill="#a0b8e8" stroke="#000080"/><path d="M8 17 L20 5" stroke="#fff" stroke-width="1.2"/></svg>
<svg class="a" style="left:6px;top:300px" width="18" height="18" viewBox="0 0 18 18"><path d="M1 13 L6 8 V3 H12 V8 L17 13 L9 17Z" fill="#00e000" stroke="#006000" stroke-width=".8"/><ellipse cx="9" cy="3" rx="3.2" ry="1.8" fill="#ffff00" stroke="#606000" stroke-width=".6"/></svg>
<svg class="a" style="left:3px;top:328px" width="22" height="24" viewBox="0 0 22 24"><rect x="9" y="1" width="5" height="21" fill="#fff" stroke="#000"/><path d="M9.5 6 L13.5 3 M9.5 10 L13.5 7 M9.5 14 L13.5 11 M9.5 18 L13.5 15 M9.5 22 L13.5 19" stroke="#000" stroke-width="1.4"/><text x="1" y="18" font-size="7" font-weight="bold" fill="#ff0000" font-family="Liberation Sans">N</text><text x="16" y="18" font-size="7" font-weight="bold" fill="#ff0000" font-family="Liberation Sans">C</text></svg>
<svg class="a" style="left:4px;top:366px" width="22" height="20" viewBox="0 0 22 20"><rect x="2.5" y="1.5" width="7" height="7" fill="#fff" stroke="#000" stroke-width="1.2"/><circle cx="11" cy="10" r="4.5" fill="#00ffff" stroke="#000080" stroke-width="1.3"/><path d="M14.5 13.5 L18.5 17.5" stroke="#ff00ff" stroke-width="2"/><path d="M10 9 L12 11" stroke="#000" stroke-width="1.5"/></svg>
<svg class="a" style="left:4px;top:394px" width="22" height="20" viewBox="0 0 22 20"><circle cx="9" cy="9" r="4.5" fill="#00ffff" stroke="#000080" stroke-width="1.3"/><path d="M12.5 12.5 L16.5 16.5" stroke="#ff00ff" stroke-width="2"/><path d="M14 3.5 H19" stroke="#000080" stroke-width="1.3"/></svg>
<svg class="a" style="left:4px;top:422px" width="22" height="20" viewBox="0 0 22 20"><circle cx="9" cy="9" r="4.5" fill="#00ffff" stroke="#000080" stroke-width="1.3"/><path d="M12.5 12.5 L16.5 16.5" stroke="#ff00ff" stroke-width="2"/><path d="M14 4 H19 M16.5 1.5 V6.5" stroke="#000080" stroke-width="1.3"/></svg>
<svg class="a" style="left:4px;top:451px" width="22" height="20" viewBox="0 0 22 20"><path d="M4 4 H11 L4 12 H11 M9 8 H16 L9 15 H16 M4 18 L8 14 M4 18 V15 M4 18 H7" fill="none" stroke="#a8a8a8" stroke-width="1.2"/></svg>
<svg class="a" style="left:4px;top:479px" width="22" height="20" viewBox="0 0 22 20"><ellipse cx="10" cy="14" rx="8" ry="4" fill="#909090"/><path d="M2 11 Q10 2 18 11 Q10 17 2 11Z" fill="#fff" stroke="#000080" stroke-width="2"/><circle cx="10" cy="11" r="3.5" fill="#00c0e0" stroke="#000080"/><path d="M4 6 L3 3 M7 5 L6 2 M10 5 V2 M13 5 L14 2 M16 6 L17 3" stroke="#000080" stroke-width="1.2"/></svg>
<svg class="a" style="left:4px;top:507px" width="22" height="20" viewBox="0 0 22 20"><circle cx="11" cy="8" r="5" fill="#fff" stroke="#000080" stroke-width="1.3"/><path d="M11 6 V10" stroke="#000080" stroke-width="1.3"/><path d="M15 12 L19 16" stroke="#ff00ff" stroke-width="2"/><rect x="4" y="14" width="4" height="4" fill="#ff00ff"/><path d="M5 5 Q2 9 6 13" fill="none" stroke="#000080" stroke-dasharray="1.2 1"/></svg>
<svg class="a" style="left:4px;top:541px" width="22" height="20" viewBox="0 0 22 20"><path d="M10 1 V19 M1 10 H19" stroke="#000" stroke-width="1.3"/><path d="M7 4 L10 1 L13 4Z M7 16 L10 19 L13 16Z M4 7 L1 10 L4 13Z M16 7 L19 10 L16 13Z" fill="#000" stroke="#000"/></svg>
<svg class="a" style="left:4px;top:569px" width="22" height="20" viewBox="0 0 22 20"><circle cx="9" cy="9" r="6" fill="#fff" stroke="#000" stroke-width="1.4"/><path d="M9 5.5 V12.5 M7.5 7 L9 5.5 L10.5 7 M7.5 11 L9 12.5 L10.5 11" fill="none" stroke="#000"/><path d="M13.5 13.5 L18 18" stroke="#00a0a0" stroke-width="2.2"/></svg>
<svg class="a" style="left:4px;top:597px" width="22" height="20" viewBox="0 0 22 20"><path d="M4 7 A7 7 0 0 1 16 6 M16 13 A7 7 0 0 1 4 14" fill="none" stroke="#000" stroke-width="1.5"/><path d="M13 4 L17 7 L17 2Z M7 16 L3 13 L3 18Z" fill="#000"/></svg>
<svg class="a" style="left:39px;top:119px" width="16" height="17" viewBox="0 0 16 17"><circle cx="8" cy="7" r="5.5" fill="#008000" stroke="#000" stroke-width="1.2"/><rect x="6" y="12" width="4" height="4" fill="#fff" stroke="#000"/><path d="M6 14 H10" stroke="#000"/></svg>
<svg class="a" style="left:39px;top:147px" width="16" height="17" viewBox="0 0 16 17"><circle cx="8" cy="7" r="5.5" fill="#ffff00" stroke="#000" stroke-width="1.2"/><rect x="6" y="12" width="4" height="4" fill="#fff" stroke="#000"/><path d="M6 14 H10" stroke="#000"/></svg>
<svg class="a" style="left:38px;top:175px" width="20" height="17" viewBox="0 0 20 17"><circle cx="12" cy="6" r="4.5" fill="#a8a8a8" stroke="#b8b8b8" stroke-width="2"/><rect x="10" y="11" width="4" height="4" fill="#f0f0f0" stroke="#b0b0b0"/><path d="M1 5 L7 11 L4 11 L3 15Z" fill="#a8a8a8"/></svg>
<svg class="a" style="left:38px;top:203px" width="18" height="18" viewBox="0 0 18 18"><circle cx="5" cy="5" r="3.2" fill="#a0a0a0" stroke="#000" stroke-width=".8"/><path d="M10 1 H14 V5 H16 L12 9 L8 5 H10Z" fill="#000"/><path d="M2 16 V12 H0 L4 8 L8 12 H6 V16Z" fill="#000"/><circle cx="13" cy="13" r="3.5" fill="#ffff00" stroke="#000" stroke-width=".8"/></svg>
<svg class="a" style="left:39px;top:233px" width="16" height="14" viewBox="0 0 16 14"><path d="M1 7 L7 1 H14 L11 7 L14 13 H7Z" fill="#c0c0c0" stroke="#d8d8d8"/><path d="M1 7 L7 1 V13Z" fill="#a0a0a0"/></svg>
<svg class="a" style="left:39px;top:262px" width="16" height="14" viewBox="0 0 16 14"><path d="M15 7 L9 1 H2 L5 7 L2 13 H9Z" fill="#c0c0c0" stroke="#d8d8d8"/><path d="M15 7 L9 1 V13Z" fill="#a0a0a0"/></svg>
<svg class="a" style="left:39px;top:293px" width="18" height="20" viewBox="0 0 18 20"><path d="M2 4 L7 1 V15 L2 18Z M6 4 L11 1 V15 L6 18Z M10 4 L15 1 V15 L10 18Z" fill="#fff" stroke="#0000a0" stroke-width="1.1"/></svg>
<svg class="a" style="left:37px;top:322px" width="20" height="16" viewBox="0 0 20 16"><path d="M1 1 H19 M1 4 H19 M1 7.5 H6 M9 7.5 H11 M14 7.5 H19 M1 11 H19 M1 14 H19" stroke="#000" stroke-width="1.2" stroke-dasharray=""/><path d="M1 4 H19 M1 11 H19" stroke="#800080" stroke-width="1.3"/><path d="M1 14 H19" stroke="#000" stroke-dasharray="1.5 1.5"/></svg>
<svg class="a" style="left:39px;top:348px" width="18" height="17" viewBox="0 0 18 17"><path d="M3 6 H15 L10 11 V16 H8 V11Z" fill="#c8c8c8" stroke="#b0b0b0"/><path d="M4 3 L5 1 M8 3 V0 M12 3 L13 1 M6 5 L4 3 M12 5 L14 3" stroke="#b0b0b0"/></svg>
<svg class="a" style="left:11px;top:681px" width="20" height="20" viewBox="0 0 20 20"><path d="M5 15 L15 5" stroke="#000" stroke-width="1.1"/><circle cx="4.5" cy="15.5" r="1.8" fill="#00ffff" stroke="#800000" stroke-width=".9"/><circle cx="15.5" cy="4.5" r="1.8" fill="#00ffff" stroke="#800000" stroke-width=".9"/></svg>
<svg class="a" style="left:40px;top:681px" width="20" height="20" viewBox="0 0 20 20"><path d="M2 4 H7 Q12 5 13 10 Q14 14 13 19" fill="none" stroke="#000" stroke-width="1.1"/><path d="M3 17 L9 11 M6 11 H9 V14" fill="none" stroke="#0000ff" stroke-width="1.3"/><path d="M18 1 L13 6 M13 2.5 V6 H16.5" fill="none" stroke="#0000ff" stroke-width="1.3"/><circle cx="11" cy="7.5" r="1.8" fill="#00ffff" stroke="#800000" stroke-width=".9"/></svg>
<svg class="a" style="left:69px;top:681px" width="20" height="20" viewBox="0 0 20 20"><path d="M3 4 H10 Q14 6 14 17" fill="none" stroke="#000" stroke-width="1.2"/><circle cx="12" cy="6" r="1.8" fill="#ffff00" stroke="#800000" stroke-width=".9"/></svg>
<svg class="a" style="left:98px;top:681px" width="20" height="20" viewBox="0 0 20 20"><path d="M3 15 L17 4 M3 6 L17 14" stroke="#000" stroke-width="1.1"/><circle cx="10" cy="10" r="1.8" fill="#00ffff" stroke="#800000" stroke-width=".9"/></svg>
<svg class="a" style="left:127px;top:681px" width="20" height="20" viewBox="0 0 20 20"><path d="M5 14 V3.5 H10 Q16 4 16 14 M5 14 H16" fill="none" stroke="#000" stroke-width="1.1"/><path d="M5 14 H16 M5 5 V14" stroke="#fff" stroke-dasharray="1 1"/><path d="M5 4 H10 Q16 4 16 14" fill="none" stroke="#000" stroke-width="1.1"/><circle cx="5" cy="14.5" r="1.8" fill="#00ffff" stroke="#800000" stroke-width=".9"/></svg>
<svg class="a" style="left:156px;top:681px" width="20" height="20" viewBox="0 0 20 20"><path d="M10 3 L17 10 L10 17 L3 10Z" fill="none" stroke="#000" stroke-width="1.1"/><circle cx="10" cy="3" r="1.8" fill="#ffff00" stroke="#800000" stroke-width=".9"/><circle cx="17" cy="10" r="1.8" fill="#ffff00" stroke="#800000" stroke-width=".9"/><circle cx="10" cy="17" r="1.8" fill="#ffff00" stroke="#800000" stroke-width=".9"/><circle cx="3" cy="10" r="1.8" fill="#ffff00" stroke="#800000" stroke-width=".9"/></svg>
<svg class="a" style="left:184px;top:681px" width="20" height="20" viewBox="0 0 20 20"><path d="M9 2 V16 M3 16 H19" stroke="#000" stroke-width="1.2"/><path d="M11 11 H15 V15" fill="none" stroke="#a0a0a0" stroke-dasharray="1 1"/><circle cx="9" cy="16" r="1.8" fill="#00ffff" stroke="#800000" stroke-width=".9"/></svg>
<svg class="a" style="left:213px;top:681px" width="20" height="20" viewBox="0 0 20 20"><path d="M2 7 Q10 2 12 9 Q14 14 11 19 M6 1 L18 14" fill="none" stroke="#000" stroke-width="1.1"/><circle cx="11" cy="7" r="2" fill="#ff00ff" stroke="#800000" stroke-width=".9"/></svg>
<svg class="a" style="left:249px;top:681px" width="20" height="20" viewBox="0 0 20 20"><circle cx="10" cy="10" r="4" fill="#fff" stroke="#000080" stroke-width="1.4"/><path d="M6 10 H14 M10 6 V14" stroke="#000080" stroke-width="1.6"/><circle cx="10" cy="10" r="1.5" fill="#00ffff"/></svg>
<svg class="a" style="left:278px;top:681px" width="20" height="20" viewBox="0 0 20 20"><path d="M10 2 V10 L4 16 M10 10 L16 16" fill="none" stroke="#000" stroke-width="1.1"/><circle cx="10" cy="10" r="1.6" fill="#ffff00" stroke="#800000" stroke-width=".9"/><text x="13" y="6" font-size="5" font-family="Liberation Sans" font-weight="bold">z</text><text x="1" y="17" font-size="5" font-family="Liberation Sans">y</text><text x="16" y="17" font-size="5" font-family="Liberation Sans">x</text></svg>
<svg class="a" style="left:312px;top:681px" width="20" height="20" viewBox="0 0 20 20"><path d="M2 9 L10 2 L18 9 L10 16Z M6 5.5 L14 12.5 M14 5.5 L6 12.5" fill="none" stroke="#000" stroke-width="1.1"/><circle cx="8" cy="6" r="1.8" fill="#ff00ff" stroke="#800000" stroke-width=".9"/></svg>
<svg class="a" style="left:341px;top:681px" width="20" height="20" viewBox="0 0 20 20"><path d="M2 9 L10 2 L18 9 L10 16Z M6 5.5 L14 12.5 M14 5.5 L6 12.5" fill="none" stroke="#000" stroke-width="1.1"/><circle cx="13" cy="5" r="1.8" fill="#ff00ff" stroke="#800000" stroke-width=".9"/></svg>
<svg class="a" style="left:370px;top:681px" width="20" height="20" viewBox="0 0 20 20"><path d="M2 9 L10 2 L18 9 L10 16Z M6 5.5 L14 12.5 M14 5.5 L6 12.5" fill="none" stroke="#000" stroke-width="1.1"/><circle cx="10" cy="9" r="1.8" fill="#ff00ff" stroke="#800000" stroke-width=".9"/></svg>
<svg class="a" style="left:406px;top:681px" width="20" height="20" viewBox="0 0 20 20"><path d="M5 3 V14 H16 M2 15.5 H17 M2 17.5 H15" fill="none" stroke="#000" stroke-width="1.1"/><rect x="15" y="11" width="3" height="3" fill="#ffff00" stroke="#800000"/></svg>
<svg class="a" style="left:435px;top:681px" width="20" height="20" viewBox="0 0 20 20"><path d="M5 3 V14 H15 M2 15.5 H17 M2 17.5 H15" fill="none" stroke="#000" stroke-width="1.1"/><path d="M17 4 L12 9 M12 6 V9 H15" fill="none" stroke="#0000ff" stroke-width="1.2"/><circle cx="9" cy="14" r="1.8" fill="#ff00ff" stroke="#800000" stroke-width=".9"/></svg>
<svg class="a" style="left:469px;top:681px" width="20" height="20" viewBox="0 0 20 20"><path d="M3 5 L3 16 L6 13 L8 18 L9.5 17.5 L7.5 12.5 L11 12.5Z" fill="#000"/><path d="M9 3 L18 11 M18 3 L9 11" stroke="#000" stroke-width="1"/><circle cx="13.5" cy="7" r="1.8" fill="#ffff00" stroke="#800000" stroke-width=".9"/></svg>
<svg class="a" style="left:498px;top:681px" width="20" height="20" viewBox="0 0 20 20"><path d="M3 5 L3 16 L6 13 L8 18 L9.5 17.5 L7.5 12.5 L11 12.5Z" fill="#000"/><path d="M11 2 L18 9 M18 2 L11 9" stroke="#ff0000" stroke-width="2"/></svg>
<svg class="a" style="left:533px;top:681px" width="20" height="20" viewBox="0 0 20 20"><path d="M2 13 L8 8 H18 L12 16Z" fill="none" stroke="#000" stroke-width="1.1"/><path d="M10 3 V12" stroke="#000"/><path d="M15 2 V8 M13 6 L15 8 L17 6" fill="none" stroke="#0000ff" stroke-width="1.3"/><rect x="8.5" y="1.5" width="3" height="3" fill="#ffff00" stroke="#800000"/><circle cx="10" cy="12" r="1.8" fill="#ff00ff" stroke="#800000" stroke-width=".9"/></svg>
<svg class="a" style="left:562px;top:681px" width="20" height="20" viewBox="0 0 20 20"><path d="M4 16 L18 2" stroke="#000" stroke-width="1.1"/><path d="M2 10 L7 5 M4 5 H7 V8" fill="none" stroke="#0000ff" stroke-width="1.2"/><circle cx="4.5" cy="15.5" r="1.8" fill="#ff00ff" stroke="#800000" stroke-width=".9"/><rect x="12" y="6" width="3" height="3" fill="#ffff00" stroke="#800000"/></svg>
<svg class="a" style="left:591px;top:681px" width="20" height="20" viewBox="0 0 20 20"><path d="M2 2 L12 12 M12 2 L2 12" stroke="#000" stroke-width="1"/><path d="M8.5 5.5 H16 L18.5 8 V17.5 H8.5Z" fill="#fff" stroke="#808080"/><path d="M11 9 H16 M11 11 H16 M11 13 H16 M11 15 H16" stroke="#000"/><circle cx="6.5" cy="7" r="1.8" fill="#ffff00" stroke="#800000" stroke-width=".9"/></svg>
<svg class="a" style="left:620px;top:681px" width="20" height="20" viewBox="0 0 20 20"><path d="M4 4 L16 16 M16 4 L4 16" stroke="#ff0000" stroke-width="3.5"/></svg>
<div class="a" style="left:604px;top:729px;width:756px;height:39px;background:linear-gradient(90deg,#4a526c 0px,#4c566e 60px,#3e4a62 150px,#34444e 220px,#3a4a58 270px,#6a6890 320px,#74709a 380px,#5c5c84 440px,#4a5276 520px,#3c4a6c 600px,#3a4868 756px)"></div>
<svg class="a" style="left:604px;top:729px;overflow:hidden" width="756" height="39" viewBox="0 0 756 39"><defs><filter id="bl" x="-20%" y="-50%" width="140%" height="200%"><feGaussianBlur stdDeviation="4"/></filter><filter id="bl2"><feGaussianBlur stdDeviation="1.5"/></filter></defs><g filter="url(#bl)"><ellipse cx="70" cy="14" rx="26" ry="10" fill="#2a3650"/><ellipse cx="140" cy="30" rx="30" ry="12" fill="#28384e"/><ellipse cx="230" cy="22" rx="40" ry="18" fill="#2a3c44"/><ellipse cx="300" cy="8" rx="30" ry="10" fill="#6a6490"/><ellipse cx="40" cy="34" rx="30" ry="8" fill="#5a6078"/></g><g fill="#2c2c48" filter="url(#bl2)"><rect x="270" y="6" width="10" height="5"/><rect x="300" y="18" width="10" height="5"/><rect x="340" y="12" width="8" height="5"/><rect x="380" y="20" width="10" height="6"/><rect x="390" y="5" width="8" height="5"/><rect x="420" y="14" width="9" height="5"/><rect x="450" y="26" width="9" height="5"/><rect x="405" y="30" width="9" height="5"/></g></svg>
<svg class="a" style="left:7px;top:729px" width="40" height="40" viewBox="0 0 40 40"><defs><radialGradient id="orb" cx="50%" cy="35%" r="60%"><stop offset="0" stop-color="#6ab0e0"/><stop offset=".55" stop-color="#1e5a9c"/><stop offset="1" stop-color="#0c2a58"/></radialGradient><radialGradient id="orb2" cx="50%" cy="95%" r="45%"><stop offset="0" stop-color="#40e0ff"/><stop offset="1" stop-color="#40e0ff" stop-opacity="0"/></radialGradient></defs><circle cx="19.5" cy="19" r="18.5" fill="#0a1a30"/><circle cx="19.5" cy="19" r="17.5" fill="url(#orb)" stroke="#8ab8e0" stroke-width=".8"/><circle cx="19.5" cy="19" r="17" fill="url(#orb2)"/><g transform="translate(10,9) skewY(-4)"><path d="M0 2 Q4 0 8.5 2 V9 Q4 7 0 9Z" fill="#f05a28"/><path d="M10 2 Q14 4 19 2 V9 Q14 11 10 9Z" fill="#7cc440"/><path d="M0 11 Q4 9 8.5 11 V18 Q4 16 0 18Z" fill="#30a0e8"/><path d="M10 11 Q14 13 19 11 V18 Q14 20 10 18Z" fill="#f8c020"/></g><path d="M3 17 A16.5 16.5 0 0 1 36 17 Q19.5 13 3 17Z" fill="#fff" opacity=".35"/></svg>
<svg class="a" style="left:70px;top:730px" width="38" height="36" viewBox="0 0 38 36"><path d="M4 18 Q2 8 14 6 Q28 4 30 16 Q31 22 24 22 Q20 22 22 27 Q22 32 14 31 Q5 29 4 18Z" fill="#b8d8f0" stroke="#6a8ab0" stroke-width=".8"/><circle cx="10" cy="19" r="2.6" fill="#e83030"/><circle cx="12" cy="13" r="2.6" fill="#40c040"/><circle cx="18" cy="10" r="2.6" fill="#f0c020"/><circle cx="25" cy="12" r="2.4" fill="#f09030"/><circle cx="16" cy="21" r="2" fill="#1a2a48"/><path d="M17 33 L31 8" stroke="#e08020" stroke-width="2.5"/><path d="M29 10 L34 2 L37 3 L32 12Z" fill="#d8b080"/></svg>
<div class="a" style="left:122px;top:729px;width:158px;height:38px;border:1px solid #6a7890;border-radius:3px;background:linear-gradient(#56657e 0%,#46556e 45%,#344360 55%,#2e3c58 100%);box-shadow:inset 0 0 0 1px rgba(255,255,255,.12)"></div>
<div class="a" style="left:284px;top:729px;width:158px;height:38px;border:1px solid #6a7890;border-radius:3px;background:linear-gradient(#56657e 0%,#46556e 45%,#344360 55%,#2e3c58 100%);box-shadow:inset 0 0 0 1px rgba(255,255,255,.12)"></div>
<div class="a" style="left:446px;top:729px;width:158px;height:38px;border:1px solid #c0c8d8;border-radius:3px;background:linear-gradient(#a8b4c8 0%,#8894ac 45%,#6c7894 55%,#7a86a0 100%);box-shadow:inset 0 0 0 1px rgba(255,255,255,.12)"></div>
<svg class="a" style="left:130px;top:732px" width="28" height="32" viewBox="0 0 28 32"><path d="M3 6 L12 2 V26 L3 30Z" fill="#f8e8a0" stroke="#c8a850" stroke-width=".8"/><path d="M10 4 H24 V26 H10Z" fill="#f0d890" stroke="#c8a850" stroke-width=".8"/><path d="M3 6 L13 4 V28 L3 30Z" fill="#f8e090" stroke="#b89840" stroke-width=".8"/><rect x="21" y="20" width="2" height="5" fill="#fff"/></svg>
<div class="a t" style="left:167px;top:742px;font-size:12px;color:#fff">CHAN BAN</div>
<svg class="a" style="left:291px;top:731px" width="34" height="34" viewBox="0 0 34 34"><circle cx="15" cy="17" r="15" fill="#5aac44" stroke="#fff" stroke-width=".8"/><path d="M15 17 L16 2 Q27 3 30 14Z" fill="#fff"/><path d="M17 5 L18 10 M22 6 L20 11 M27 11 L22 13" stroke="#f07020" stroke-width="2.8"/><path d="M15 17 L24 4 L28 8Z" fill="#5aac44"/><circle cx="15" cy="17" r="6.5" fill="none" stroke="#fff" stroke-width="3.2"/><path d="M21 24 Q25 22 26 26 L26 33 H20 L21 28Z" fill="#fff" stroke="#c0c0c0" stroke-width=".6"/></svg>
<div class="a t" style="left:329px;top:742px;font-size:12px;color:#fff">Điêu Khắc Minh C...</div>
<svg class="a" style="left:455px;top:731px" width="32" height="34" viewBox="0 0 32 34"><path d="M1 19 L10 12 L31 17 L22 24Z" fill="#8a8a8a"/><path d="M1 19 L22 24 V33 L1 28Z" fill="#4a4a4a"/><path d="M22 24 L31 17 V26 L22 33Z" fill="#2a2a2a"/><path d="M8 21 L16 23 V31 L8 29Z" fill="#1a1a1a"/><rect x="12" y="1" width="9" height="3" rx="1" fill="#9a9a9a" stroke="#444" stroke-width=".6"/><rect x="14" y="4" width="5" height="4" fill="#bbb"/><rect x="14" y="8" width="5" height="11" fill="#e8a020"/><path d="M14 19 H19 L18.5 28 L16.5 30 L14.5 28Z" fill="#d8a8f0"/></svg>
<div class="a t" style="left:491px;top:742px;font-size:12px;color:#fff">chan ban phuong...</div>
<svg class="a" style="left:1173px;top:744px" width="9" height="6" viewBox="0 0 9 6"><path d="M0 6 L4.5 1 L9 6Z" fill="#fff"/></svg>
<svg class="a" style="left:1194px;top:741px" width="17" height="17" viewBox="0 0 17 17"><rect x="4.5" y="5.5" width="11" height="8" fill="#1a2a40" stroke="#fff" stroke-width="1.2"/><path d="M10 14 V16 M6 16.5 H14" stroke="#fff" stroke-width="1.2"/><path d="M2 1 V9 M4 1 V5 M1 4 H5 M2 9 H6" stroke="#fff" stroke-width="1.1"/></svg>
<svg class="a" style="left:1219px;top:741px" width="16" height="16" viewBox="0 0 16 16"><path d="M1 5.5 H4 L8 2 V14 L4 10.5 H1Z" fill="#f0f0f0" stroke="#c0c0c0" stroke-width=".6"/><path d="M11 5 Q13 8 11 11" fill="none" stroke="#e0e0e0"/></svg>
<div class="a" style="left:1242px;top:741px;width:15px;height:15px;background:#1a90f0;border-radius:1px"></div>
<div class="a t" style="left:1245px;top:742px;font-size:12.5px;font-weight:bold;color:#fff">E</div>
<div class="a t" style="left:1272px;top:744px;font-size:12px;color:#fff">7:30 CH</div>
<div class="a t" style="left:1272px;top:757px;font-size:12px;color:#fff">01/10/2018</div>
<div class="a" style="left:1346px;top:730px;width:14px;height:38px;border-left:1px solid #8a90b0;background:rgba(255,255,255,.08)"></div>
<svg class="a" style="left:488px;top:133px" width="90" height="504" viewBox="0 0 90 504"><defs><linearGradient id="rg" x1="0" y1="0" x2="1" y2="0"><stop offset="0" stop-color="#8c8c44"/><stop offset=".45" stop-color="#9e9e50"/><stop offset="1" stop-color="#8a8a42"/></linearGradient><radialGradient id="hl" cx="38%" cy="32%" r="65%"><stop offset="0" stop-color="#d8d890"/><stop offset=".45" stop-color="#a0a058"/><stop offset="1" stop-color="#6a6a2c"/></radialGradient></defs><rect x="0" y="0" width="90" height="504" fill="#fdfcc0"/><clipPath id="silc"><path d="M1,1 L52,1 L64,6 L76,12 L82,20 L83,32 L79,42 L73,52 L67,62 L61,71 L64,79 L70,83 L79,88 L85,97 L87,112 L84,125 L82,133 L85,139 L84,149 L80,157 L84,167 L84,179 L83,189 L84,199 L85,212 L86,227 L87,247 L88,267 L89,287 L88,307 L87,329 L77,330 L82,337 L87,347 L89,357 L89,422 L77,425 L68,432 L65,442 L67,457 L75,467 L84,474 L89,479 L89,495 L82,503 L10,503 L4,495 L1,487 L1,387 L1,337 L1,297 L4,287 L1,281 L1,262 L7,257 L1,250 L1,232 L9,225 L1,217 L1,202 L5,187 L5,107 L1,99 L1,1Z"/></clipPath><path d="M1,1 L52,1 L64,6 L76,12 L82,20 L83,32 L79,42 L73,52 L67,62 L61,71 L64,79 L70,83 L79,88 L85,97 L87,112 L84,125 L82,133 L85,139 L84,149 L80,157 L84,167 L84,179 L83,189 L84,199 L85,212 L86,227 L87,247 L88,267 L89,287 L88,307 L87,329 L77,330 L82,337 L87,347 L89,357 L89,422 L77,425 L68,432 L65,442 L67,457 L75,467 L84,474 L89,479 L89,495 L82,503 L10,503 L4,495 L1,487 L1,387 L1,337 L1,297 L4,287 L1,281 L1,262 L7,257 L1,250 L1,232 L9,225 L1,217 L1,202 L5,187 L5,107 L1,99 L1,1Z" fill="url(#rg)"/><g clip-path="url(#silc)"><ellipse cx="38" cy="12" rx="14" ry="10" transform="rotate(0 38 12)" fill="url(#hl)" stroke="#4a4a1c" stroke-width=".8" opacity="1"/><ellipse cx="68" cy="25" rx="13" ry="12" transform="rotate(0 68 25)" fill="url(#hl)" stroke="#4a4a1c" stroke-width=".8" opacity="1"/><ellipse cx="12" cy="9" rx="10" ry="7" transform="rotate(-20 12 9)" fill="url(#hl)" stroke="#4a4a1c" stroke-width=".8" opacity="1"/><ellipse cx="49" cy="45" rx="9" ry="7" transform="rotate(20 49 45)" fill="url(#hl)" stroke="#4a4a1c" stroke-width=".8" opacity="1"/><ellipse cx="24" cy="72" rx="13" ry="11" transform="rotate(0 24 72)" fill="url(#hl)" stroke="#4a4a1c" stroke-width=".8" opacity="1"/><ellipse cx="45" cy="67" rx="9" ry="8" transform="rotate(-30 45 67)" fill="url(#hl)" stroke="#4a4a1c" stroke-width=".8" opacity="1"/><ellipse cx="15" cy="47" rx="7" ry="6" transform="rotate(0 15 47)" fill="url(#hl)" stroke="#4a4a1c" stroke-width=".8" opacity="1"/><ellipse cx="7" cy="89" rx="5" ry="5" transform="rotate(0 7 89)" fill="url(#hl)" stroke="#4a4a1c" stroke-width=".8" opacity="1"/><ellipse cx="62" cy="67" rx="7" ry="6" transform="rotate(0 62 67)" fill="url(#hl)" stroke="#4a4a1c" stroke-width=".8" opacity="1"/><ellipse cx="35" cy="85" rx="6" ry="5" transform="rotate(10 35 85)" fill="url(#hl)" stroke="#4a4a1c" stroke-width=".8" opacity="1"/><ellipse cx="6" cy="27" rx="5" ry="7" transform="rotate(0 6 27)" fill="url(#hl)" stroke="#4a4a1c" stroke-width=".8" opacity="1"/><circle cx="23" cy="30" r="3.2" fill="#fdfcc0" stroke="#4a4a1c" stroke-width=".6"/><circle cx="63" cy="30" r="2.8" fill="#fdfcc0" stroke="#4a4a1c" stroke-width=".6"/><circle cx="52" cy="64" r="2.6" fill="#fdfcc0" stroke="#4a4a1c" stroke-width=".6"/><circle cx="38" cy="73" r="2.6" fill="#fdfcc0" stroke="#4a4a1c" stroke-width=".6"/><circle cx="25" cy="75" r="2.4" fill="#fdfcc0" stroke="#4a4a1c" stroke-width=".6"/><circle cx="10" cy="38" r="2.2" fill="#fdfcc0" stroke="#4a4a1c" stroke-width=".6"/><circle cx="32" cy="17" r="1.6" fill="#fdfcc0" stroke="#4a4a1c" stroke-width=".6"/><circle cx="57" cy="89" r="1.8" fill="#fdfcc0" stroke="#4a4a1c" stroke-width=".6"/><circle cx="15" cy="95" r="2" fill="#fdfcc0" stroke="#4a4a1c" stroke-width=".6"/><circle cx="7" cy="57" r="1.8" fill="#fdfcc0" stroke="#4a4a1c" stroke-width=".6"/><path d="M62,96 Q75,92 86,102 Q89,115 84,128 Q72,140 60,132 Q52,118 62,96Z" fill="#9a9a56" stroke="#4a4a1c" stroke-width=".9"/><circle cx="74" cy="110" r="9" fill="none" stroke="#4a4a1c" stroke-width=".9"/><circle cx="75" cy="110" r="4" fill="#d0d088" stroke="#4a4a1c" stroke-width=".8"/><path d="M40.0,130 Q70,138 84,148 Q80,154 70,152" fill="none" stroke="#4a4a1c" stroke-width="1"/><path d="M40.5,143 Q70,151 84,161 Q80,167 70,165" fill="none" stroke="#4a4a1c" stroke-width="1"/><path d="M41.0,156 Q70,164 84,174 Q80,180 70,178" fill="none" stroke="#4a4a1c" stroke-width="1"/><path d="M41.5,169 Q70,177 84,187 Q80,193 70,191" fill="none" stroke="#4a4a1c" stroke-width="1"/><path d="M42.0,182 Q70,190 84,200 Q80,206 70,204" fill="none" stroke="#4a4a1c" stroke-width="1"/><path d="M42.5,195 Q70,203 84,213 Q80,219 70,217" fill="none" stroke="#4a4a1c" stroke-width="1"/><path d="M43.0,208 Q70,216 84,226 Q80,232 70,230" fill="none" stroke="#4a4a1c" stroke-width="1"/><path d="M43.5,221 Q70,229 84,239 Q80,245 70,243" fill="none" stroke="#4a4a1c" stroke-width="1"/><path d="M44.0,234 Q70,242 84,252 Q80,258 70,256" fill="none" stroke="#4a4a1c" stroke-width="1"/><path d="M44.5,247 Q70,255 84,265 Q80,271 70,269" fill="none" stroke="#4a4a1c" stroke-width="1"/><path d="M45.0,260 Q70,268 84,278 Q80,284 70,282" fill="none" stroke="#4a4a1c" stroke-width="1"/><path d="M45.5,273 Q70,281 84,291 Q80,297 70,295" fill="none" stroke="#4a4a1c" stroke-width="1"/><path d="M6,115 Q30,140 50,165" fill="none" stroke="#4a4a1c" stroke-width=".9"/><path d="M8,131 Q30,156 51,181" fill="none" stroke="#4a4a1c" stroke-width=".9"/><path d="M10,147 Q30,172 52,197" fill="none" stroke="#4a4a1c" stroke-width=".9"/><path d="M12,163 Q30,188 53,213" fill="none" stroke="#4a4a1c" stroke-width=".9"/><path d="M14,179 Q30,204 54,229" fill="none" stroke="#4a4a1c" stroke-width=".9"/><path d="M16,195 Q30,220 55,245" fill="none" stroke="#4a4a1c" stroke-width=".9"/><path d="M18,211 Q30,236 56,261" fill="none" stroke="#4a4a1c" stroke-width=".9"/><path d="M20,227 Q30,252 57,277" fill="none" stroke="#4a4a1c" stroke-width=".9"/><path d="M22,243 Q30,268 58,293" fill="none" stroke="#4a4a1c" stroke-width=".9"/><path d="M24,259 Q30,284 59,309" fill="none" stroke="#4a4a1c" stroke-width=".9"/><path d="M29.9,60.5 l4.5,1.1" stroke="#4e4e20" stroke-width=".8"/><path d="M47.5,132.5 l1.9,1.2" stroke="#4e4e20" stroke-width=".8"/><path d="M6.1,155.3 l2.2,0.6" stroke="#4e4e20" stroke-width=".8"/><path d="M38.2,287.0 l2.3,0.9" stroke="#4e4e20" stroke-width=".8"/><path d="M55.1,327.5 l3.8,2.0" stroke="#4e4e20" stroke-width=".8"/><path d="M84.0,25.6 l5.0,2.1" stroke="#4e4e20" stroke-width=".8"/><path d="M15.0,49.5 l2.3,2.3" stroke="#4e4e20" stroke-width=".8"/><path d="M18.0,204.8 l4.1,2.0" stroke="#4e4e20" stroke-width=".8"/><path d="M48.5,31.0 l2.1,0.8" stroke="#4e4e20" stroke-width=".8"/><path d="M59.5,153.2 l2.7,1.9" stroke="#4e4e20" stroke-width=".8"/><path d="M40.6,110.4 l4.0,3.3" stroke="#4e4e20" stroke-width=".8"/><path d="M23.3,202.4 l2.8,3.0" stroke="#4e4e20" stroke-width=".8"/><path d="M63.5,106.5 l5.7,1.7" stroke="#4e4e20" stroke-width=".8"/><path d="M37.7,263.6 l2.2,1.3" stroke="#4e4e20" stroke-width=".8"/><path d="M6.3,233.9 l4.2,2.9" stroke="#4e4e20" stroke-width=".8"/><path d="M75.7,115.1 l3.9,2.8" stroke="#4e4e20" stroke-width=".8"/><path d="M51.1,162.8 l3.5,4.1" stroke="#4e4e20" stroke-width=".8"/><path d="M42.4,232.5 l1.7,1.4" stroke="#4e4e20" stroke-width=".8"/><path d="M56.7,342.7 l4.9,2.1" stroke="#4e4e20" stroke-width=".8"/><path d="M35.0,234.0 l1.8,1.0" stroke="#4e4e20" stroke-width=".8"/><path d="M16.9,49.2 l1.7,1.5" stroke="#4e4e20" stroke-width=".8"/><path d="M13.7,93.0 l2.5,2.6" stroke="#4e4e20" stroke-width=".8"/><path d="M9.7,160.5 l2.9,3.1" stroke="#4e4e20" stroke-width=".8"/><path d="M71.0,299.4 l2.7,1.5" stroke="#4e4e20" stroke-width=".8"/><path d="M32.8,306.2 l5.6,1.8" stroke="#4e4e20" stroke-width=".8"/><path d="M17.6,87.7 l2.5,1.5" stroke="#4e4e20" stroke-width=".8"/><path d="M51.9,98.0 l1.8,1.0" stroke="#4e4e20" stroke-width=".8"/><path d="M33.6,199.7 l4.5,3.7" stroke="#4e4e20" stroke-width=".8"/><path d="M45.8,216.9 l4.6,1.1" stroke="#4e4e20" stroke-width=".8"/><path d="M77.7,271.3 l4.0,3.8" stroke="#4e4e20" stroke-width=".8"/><path d="M35.6,143.7 l1.9,1.4" stroke="#4e4e20" stroke-width=".8"/><path d="M8.2,32.6 l2.7,0.9" stroke="#4e4e20" stroke-width=".8"/><path d="M31.2,27.6 l1.9,0.6" stroke="#4e4e20" stroke-width=".8"/><path d="M11.4,131.8 l1.4,1.5" stroke="#4e4e20" stroke-width=".8"/><path d="M54.0,59.8 l2.7,1.3" stroke="#4e4e20" stroke-width=".8"/><path d="M33.2,51.2 l3.4,4.2" stroke="#4e4e20" stroke-width=".8"/><path d="M41.7,172.1 l2.3,0.6" stroke="#4e4e20" stroke-width=".8"/><path d="M31.4,98.7 l5.1,1.6" stroke="#4e4e20" stroke-width=".8"/><path d="M4.9,328.6 l3.9,1.2" stroke="#4e4e20" stroke-width=".8"/><path d="M48.1,19.1 l2.6,3.2" stroke="#4e4e20" stroke-width=".8"/><path d="M74.7,243.2 l2.7,1.3" stroke="#4e4e20" stroke-width=".8"/><path d="M16.9,268.6 l3.0,2.8" stroke="#4e4e20" stroke-width=".8"/><path d="M30.4,84.7 l3.3,4.1" stroke="#4e4e20" stroke-width=".8"/><path d="M73.8,280.0 l4.0,3.5" stroke="#4e4e20" stroke-width=".8"/><path d="M21.8,183.4 l3.3,0.7" stroke="#4e4e20" stroke-width=".8"/><path d="M5.3,103.6 l2.4,1.9" stroke="#4e4e20" stroke-width=".8"/><path d="M82.4,159.8 l3.6,4.5" stroke="#4e4e20" stroke-width=".8"/><path d="M82.3,132.2 l2.7,1.0" stroke="#4e4e20" stroke-width=".8"/><path d="M19.3,78.5 l3.0,3.3" stroke="#4e4e20" stroke-width=".8"/><path d="M72.8,170.6 l3.3,3.2" stroke="#4e4e20" stroke-width=".8"/><path d="M10.0,231.3 l4.1,3.8" stroke="#4e4e20" stroke-width=".8"/><path d="M65.3,170.1 l2.0,1.9" stroke="#4e4e20" stroke-width=".8"/><path d="M30.6,278.3 l5.2,2.7" stroke="#4e4e20" stroke-width=".8"/><path d="M36.3,327.2 l4.7,1.5" stroke="#4e4e20" stroke-width=".8"/><path d="M13.5,60.6 l4.1,3.9" stroke="#4e4e20" stroke-width=".8"/><path d="M15.1,286.9 l4.7,3.6" stroke="#4e4e20" stroke-width=".8"/><path d="M32.1,193.8 l2.5,0.5" stroke="#4e4e20" stroke-width=".8"/><path d="M83.6,227.6 l2.7,3.1" stroke="#4e4e20" stroke-width=".8"/><path d="M39.0,302.0 l5.0,1.8" stroke="#4e4e20" stroke-width=".8"/><path d="M23.9,108.1 l2.4,1.7" stroke="#4e4e20" stroke-width=".8"/><path d="M24.5,150.4 l1.7,1.9" stroke="#4e4e20" stroke-width=".8"/><path d="M32.4,163.5 l2.9,3.2" stroke="#4e4e20" stroke-width=".8"/><path d="M37.9,317.4 l3.4,2.2" stroke="#4e4e20" stroke-width=".8"/><path d="M46.5,16.3 l3.6,1.2" stroke="#4e4e20" stroke-width=".8"/><path d="M3.3,277.7 l2.3,1.4" stroke="#4e4e20" stroke-width=".8"/><path d="M63.2,196.4 l2.8,1.8" stroke="#4e4e20" stroke-width=".8"/><path d="M49.1,272.7 l2.0,1.4" stroke="#4e4e20" stroke-width=".8"/><path d="M23.6,102.8 l4.3,2.7" stroke="#4e4e20" stroke-width=".8"/><path d="M49.6,264.6 l4.9,2.8" stroke="#4e4e20" stroke-width=".8"/><path d="M53.8,179.4 l3.1,2.6" stroke="#4e4e20" stroke-width=".8"/><path d="M40.5,188.7 l2.6,3.0" stroke="#4e4e20" stroke-width=".8"/><path d="M61.0,303.6 l5.4,2.1" stroke="#4e4e20" stroke-width=".8"/><path d="M49.4,326.0 l5.1,1.6" stroke="#4e4e20" stroke-width=".8"/><path d="M13.1,158.1 l2.1,0.8" stroke="#4e4e20" stroke-width=".8"/><path d="M9.1,234.3 l3.5,3.8" stroke="#4e4e20" stroke-width=".8"/><path d="M15.8,249.9 l4.4,1.4" stroke="#4e4e20" stroke-width=".8"/><path d="M76.3,334.1 l1.9,2.2" stroke="#4e4e20" stroke-width=".8"/><path d="M36.1,173.2 l4.2,4.2" stroke="#4e4e20" stroke-width=".8"/><path d="M16.4,154.6 l3.7,1.7" stroke="#4e4e20" stroke-width=".8"/><path d="M19.2,116.7 l4.8,1.0" stroke="#4e4e20" stroke-width=".8"/><path d="M49.0,157.6 l1.9,0.9" stroke="#4e4e20" stroke-width=".8"/><path d="M54.8,181.6 l1.4,1.8" stroke="#4e4e20" stroke-width=".8"/><path d="M68.4,335.5 l2.2,0.9" stroke="#4e4e20" stroke-width=".8"/><path d="M6.3,271.0 l3.0,0.9" stroke="#4e4e20" stroke-width=".8"/><path d="M38.0,315.3 l4.9,2.0" stroke="#4e4e20" stroke-width=".8"/><path d="M15.4,317.9 l3.3,2.7" stroke="#4e4e20" stroke-width=".8"/><path d="M10.4,29.3 l4.2,2.3" stroke="#4e4e20" stroke-width=".8"/><path d="M9.0,324.3 l3.3,3.1" stroke="#4e4e20" stroke-width=".8"/><path d="M10.0,296.8 l1.6,1.6" stroke="#4e4e20" stroke-width=".8"/><path d="M40.7,123.6 l2.8,3.2" stroke="#4e4e20" stroke-width=".8"/><path d="M25.2,53.3 l3.8,1.5" stroke="#4e4e20" stroke-width=".8"/><path d="M12.1,64.1 l2.1,0.7" stroke="#4e4e20" stroke-width=".8"/><path d="M28.9,112.2 l4.6,2.0" stroke="#4e4e20" stroke-width=".8"/><path d="M44.5,69.6 l3.3,0.7" stroke="#4e4e20" stroke-width=".8"/><path d="M23.8,15.1 l4.1,2.7" stroke="#4e4e20" stroke-width=".8"/><path d="M18.7,169.0 l5.5,1.6" stroke="#4e4e20" stroke-width=".8"/><path d="M71.0,154.8 l2.8,2.8" stroke="#4e4e20" stroke-width=".8"/><path d="M35.6,179.7 l3.0,3.7" stroke="#4e4e20" stroke-width=".8"/><path d="M31.4,288.8 l3.9,2.9" stroke="#4e4e20" stroke-width=".8"/><path d="M36.6,126.4 l2.1,0.6" stroke="#4e4e20" stroke-width=".8"/><path d="M8.9,258.2 l2.9,0.9" stroke="#4e4e20" stroke-width=".8"/><path d="M10.0,291.8 l4.3,3.4" stroke="#4e4e20" stroke-width=".8"/><path d="M26.4,91.1 l2.8,1.6" stroke="#4e4e20" stroke-width=".8"/><path d="M16.1,159.4 l2.0,2.3" stroke="#4e4e20" stroke-width=".8"/><path d="M83.7,193.3 l1.9,2.3" stroke="#4e4e20" stroke-width=".8"/><path d="M28.7,129.5 l1.8,0.9" stroke="#4e4e20" stroke-width=".8"/><path d="M42.4,178.4 l2.4,1.5" stroke="#4e4e20" stroke-width=".8"/><path d="M3.4,98.5 l2.1,1.1" stroke="#4e4e20" stroke-width=".8"/><path d="M6.5,17.5 l3.0,1.1" stroke="#4e4e20" stroke-width=".8"/><path d="M51.6,187.3 l4.0,3.1" stroke="#4e4e20" stroke-width=".8"/><path d="M62.4,304.5 l3.2,1.5" stroke="#4e4e20" stroke-width=".8"/><path d="M84.7,60.1 l3.9,3.0" stroke="#4e4e20" stroke-width=".8"/><path d="M6.6,289.8 l4.5,3.3" stroke="#4e4e20" stroke-width=".8"/><path d="M63.9,282.1 l2.2,1.4" stroke="#4e4e20" stroke-width=".8"/><path d="M44.9,289.7 l3.7,3.7" stroke="#4e4e20" stroke-width=".8"/><path d="M51.5,309.1 l3.7,3.0" stroke="#4e4e20" stroke-width=".8"/><path d="M22.1,20.4 l2.3,1.1" stroke="#4e4e20" stroke-width=".8"/><path d="M11.7,290.0 l3.4,2.5" stroke="#4e4e20" stroke-width=".8"/><path d="M55.0,238.0 l3.9,0.8" stroke="#4e4e20" stroke-width=".8"/><path d="M69.2,260.7 l3.4,2.2" stroke="#4e4e20" stroke-width=".8"/><path d="M57.7,32.1 l4.6,1.8" stroke="#4e4e20" stroke-width=".8"/><path d="M9.2,99.0 l4.6,1.7" stroke="#4e4e20" stroke-width=".8"/><path d="M64.4,336.9 l3.5,1.8" stroke="#4e4e20" stroke-width=".8"/><path d="M42.8,239.0 l4.1,3.0" stroke="#4e4e20" stroke-width=".8"/><path d="M56.3,36.0 l2.4,1.0" stroke="#4e4e20" stroke-width=".8"/><path d="M64.7,112.0 l4.2,0.9" stroke="#4e4e20" stroke-width=".8"/><path d="M8.0,100.0 l3.6,3.0" stroke="#4e4e20" stroke-width=".8"/><path d="M59.1,107.4 l3.5,2.0" stroke="#4e4e20" stroke-width=".8"/><path d="M41.7,49.7 l5.3,1.9" stroke="#4e4e20" stroke-width=".8"/><path d="M84.2,323.6 l1.8,1.0" stroke="#4e4e20" stroke-width=".8"/><path d="M71.1,334.3 l3.5,1.4" stroke="#4e4e20" stroke-width=".8"/><path d="M20.4,326.8 l2.3,1.6" stroke="#4e4e20" stroke-width=".8"/><path d="M14.8,185.6 l5.6,1.7" stroke="#4e4e20" stroke-width=".8"/><path d="M71.1,180.4 l4.3,3.5" stroke="#4e4e20" stroke-width=".8"/><path d="M22.2,310.7 l3.9,0.9" stroke="#4e4e20" stroke-width=".8"/><path d="M3.3,174.7 l3.5,1.5" stroke="#4e4e20" stroke-width=".8"/><path d="M14.7,125.2 l2.3,2.3" stroke="#4e4e20" stroke-width=".8"/><path d="M3.1,261.5 l5.1,1.5" stroke="#4e4e20" stroke-width=".8"/><path d="M79.9,248.9 l5.2,2.2" stroke="#4e4e20" stroke-width=".8"/><path d="M33.9,141.6 l4.9,3.4" stroke="#4e4e20" stroke-width=".8"/><path d="M32.9,153.4 l3.0,0.7" stroke="#4e4e20" stroke-width=".8"/><path d="M11.4,289.6 l2.1,2.4" stroke="#4e4e20" stroke-width=".8"/><path d="M23.7,99.0 l3.8,1.3" stroke="#4e4e20" stroke-width=".8"/><path d="M34.0,330.3 l4.0,3.8" stroke="#4e4e20" stroke-width=".8"/><path d="M55.4,316.0 l4.8,3.2" stroke="#4e4e20" stroke-width=".8"/><path d="M62.7,26.6 l4.3,2.4" stroke="#4e4e20" stroke-width=".8"/><path d="M65.5,225.9 l3.1,0.7" stroke="#4e4e20" stroke-width=".8"/><path d="M79.9,52.6 l3.5,1.7" stroke="#4e4e20" stroke-width=".8"/><path d="M27.7,257.6 l5.5,2.2" stroke="#4e4e20" stroke-width=".8"/><path d="M57.4,110.8 l3.8,1.9" stroke="#4e4e20" stroke-width=".8"/><path d="M16.9,64.2 l1.9,2.1" stroke="#4e4e20" stroke-width=".8"/><path d="M44.3,83.7 l3.5,4.4" stroke="#4e4e20" stroke-width=".8"/><path d="M40.3,56.8 l2.7,0.7" stroke="#4e4e20" stroke-width=".8"/><path d="M31.4,40.5 l2.7,1.1" stroke="#4e4e20" stroke-width=".8"/><path d="M50.3,307.2 l4.4,2.3" stroke="#4e4e20" stroke-width=".8"/><path d="M37.4,185.6 l3.2,1.5" stroke="#4e4e20" stroke-width=".8"/><path d="M8.2,103.0 l5.6,1.7" stroke="#4e4e20" stroke-width=".8"/><path d="M44.8,220.9 l5.1,1.9" stroke="#4e4e20" stroke-width=".8"/><path d="M25.5,93.2 l3.1,1.8" stroke="#4e4e20" stroke-width=".8"/><path d="M82.2,294.3 l5.4,1.2" stroke="#4e4e20" stroke-width=".8"/><path d="M5.7,247.7 l4.8,2.8" stroke="#4e4e20" stroke-width=".8"/><path d="M51.7,10.1 l2.4,2.7" stroke="#4e4e20" stroke-width=".8"/><path d="M71.5,296.6 l5.5,2.2" stroke="#4e4e20" stroke-width=".8"/><path d="M12.1,61.7 l3.2,2.6" stroke="#4e4e20" stroke-width=".8"/><path d="M81.1,251.8 l3.4,3.1" stroke="#4e4e20" stroke-width=".8"/><path d="M41.0,194.8 l1.6,1.5" stroke="#4e4e20" stroke-width=".8"/><path d="M22.3,318.2 l4.2,1.8" stroke="#4e4e20" stroke-width=".8"/><path d="M13.6,94.4 l3.5,2.9" stroke="#4e4e20" stroke-width=".8"/><path d="M12.3,33.6 l3.4,2.3" stroke="#4e4e20" stroke-width=".8"/><path d="M35.2,84.9 l4.3,0.9" stroke="#4e4e20" stroke-width=".8"/><path d="M28.0,164.3 l4.6,3.5" stroke="#4e4e20" stroke-width=".8"/><path d="M76.4,169.2 l2.7,1.1" stroke="#4e4e20" stroke-width=".8"/><path d="M82.7,246.1 l3.2,0.7" stroke="#4e4e20" stroke-width=".8"/><path d="M44.4,235.9 l3.4,1.4" stroke="#4e4e20" stroke-width=".8"/><path d="M58.4,319.9 l2.8,0.6" stroke="#4e4e20" stroke-width=".8"/><path d="M31.1,150.9 l4.5,1.6" stroke="#4e4e20" stroke-width=".8"/><path d="M69.2,257.6 l3.8,1.4" stroke="#4e4e20" stroke-width=".8"/><path d="M83.5,114.4 l4.9,1.9" stroke="#4e4e20" stroke-width=".8"/><path d="M21.4,264.8 l2.1,2.4" stroke="#4e4e20" stroke-width=".8"/><path d="M44.1,72.7 l2.6,1.4" stroke="#4e4e20" stroke-width=".8"/><path d="M58.2,327.8 l2.3,1.2" stroke="#4e4e20" stroke-width=".8"/><path d="M20.7,336.3 l2.5,0.6" stroke="#4e4e20" stroke-width=".8"/><path d="M8.0,141.8 l3.8,4.1" stroke="#4e4e20" stroke-width=".8"/><path d="M63.8,344.2 l5.2,2.4" stroke="#4e4e20" stroke-width=".8"/><path d="M18.4,323.5 l4.9,1.1" stroke="#4e4e20" stroke-width=".8"/><path d="M58.1,136.8 l3.2,1.5" stroke="#4e4e20" stroke-width=".8"/><path d="M17.0,11.0 l2.8,1.3" stroke="#4e4e20" stroke-width=".8"/><path d="M82.3,51.4 l5.5,2.0" stroke="#4e4e20" stroke-width=".8"/><path d="M32.6,285.2 l4.6,2.5" stroke="#4e4e20" stroke-width=".8"/><path d="M7.1,168.6 l2.3,2.6" stroke="#4e4e20" stroke-width=".8"/><path d="M19.0,132.0 l5.5,1.2" stroke="#4e4e20" stroke-width=".8"/><path d="M37.1,282.0 l4.9,1.1" stroke="#4e4e20" stroke-width=".8"/><path d="M5.9,31.0 l5.3,2.1" stroke="#4e4e20" stroke-width=".8"/><path d="M65.0,311.0 l3.1,1.3" stroke="#4e4e20" stroke-width=".8"/><path d="M82.5,216.7 l2.3,2.0" stroke="#4e4e20" stroke-width=".8"/><path d="M29.3,102.3 l1.5,1.3" stroke="#4e4e20" stroke-width=".8"/><path d="M79.1,222.4 l5.6,1.2" stroke="#4e4e20" stroke-width=".8"/><path d="M22.4,169.2 l3.8,4.4" stroke="#4e4e20" stroke-width=".8"/><path d="M35.1,94.1 l3.2,1.9" stroke="#4e4e20" stroke-width=".8"/><path d="M80.0,71.3 l3.9,3.4" stroke="#4e4e20" stroke-width=".8"/><path d="M71.3,268.9 l4.0,1.8" stroke="#4e4e20" stroke-width=".8"/><path d="M29.5,131.2 l5.0,1.3" stroke="#4e4e20" stroke-width=".8"/><path d="M19.4,262.2 l2.9,0.7" stroke="#4e4e20" stroke-width=".8"/><path d="M5.8,195.1 l2.1,2.6" stroke="#4e4e20" stroke-width=".8"/><path d="M76.3,340.9 l3.0,0.8" stroke="#4e4e20" stroke-width=".8"/><path d="M11.0,177.0 l4.2,2.4" stroke="#4e4e20" stroke-width=".8"/><path d="M22.4,149.6 l3.5,2.8" stroke="#4e4e20" stroke-width=".8"/><path d="M65.1,293.7 l4.5,1.3" stroke="#4e4e20" stroke-width=".8"/><path d="M72.8,108.4 l3.8,1.9" stroke="#4e4e20" stroke-width=".8"/><path d="M64.3,76.7 l2.8,1.1" stroke="#4e4e20" stroke-width=".8"/><path d="M15.7,306.2 l3.9,1.8" stroke="#4e4e20" stroke-width=".8"/><path d="M35.9,342.5 l3.8,1.4" stroke="#4e4e20" stroke-width=".8"/><path d="M70.1,228.9 l5.7,1.6" stroke="#4e4e20" stroke-width=".8"/><path d="M42.4,284.4 l3.6,4.0" stroke="#4e4e20" stroke-width=".8"/><path d="M6.4,108.4 l2.3,0.8" stroke="#4e4e20" stroke-width=".8"/><path d="M83.8,205.4 l5.1,2.5" stroke="#4e4e20" stroke-width=".8"/><path d="M74.9,160.5 l2.2,2.1" stroke="#4e4e20" stroke-width=".8"/><path d="M81.5,45.4 l3.5,2.6" stroke="#4e4e20" stroke-width=".8"/><path d="M21.1,133.5 l2.4,0.9" stroke="#4e4e20" stroke-width=".8"/><path d="M24.2,210.8 l4.3,1.5" stroke="#4e4e20" stroke-width=".8"/><path d="M3.9,119.6 l4.5,1.5" stroke="#4e4e20" stroke-width=".8"/><path d="M28.9,78.1 l4.3,2.9" stroke="#4e4e20" stroke-width=".8"/><path d="M8.3,44.0 l3.0,2.0" stroke="#4e4e20" stroke-width=".8"/><path d="M56.1,40.5 l2.1,1.7" stroke="#4e4e20" stroke-width=".8"/><path d="M37.0,104.9 l2.1,2.5" stroke="#4e4e20" stroke-width=".8"/><path d="M28.9,199.8 l3.0,1.6" stroke="#4e4e20" stroke-width=".8"/><path d="M74.7,343.9 l3.3,1.1" stroke="#4e4e20" stroke-width=".8"/><path d="M63.4,78.2 l1.4,1.5" stroke="#4e4e20" stroke-width=".8"/><path d="M38.2,284.8 l2.5,2.6" stroke="#4e4e20" stroke-width=".8"/><path d="M41.3,64.5 l1.7,1.1" stroke="#4e4e20" stroke-width=".8"/><path d="M56.2,314.8 l1.9,1.4" stroke="#4e4e20" stroke-width=".8"/><path d="M33.8,179.0 l2.4,1.0" stroke="#4e4e20" stroke-width=".8"/><path d="M46.3,320.0 l2.1,1.3" stroke="#4e4e20" stroke-width=".8"/><path d="M69.8,333.9 l2.7,0.8" stroke="#4e4e20" stroke-width=".8"/><path d="M81.3,336.8 l3.8,0.9" stroke="#4e4e20" stroke-width=".8"/><path d="M79.9,139.9 l4.5,3.3" stroke="#4e4e20" stroke-width=".8"/><path d="M71.4,63.7 l4.8,1.8" stroke="#4e4e20" stroke-width=".8"/><path d="M36.6,293.5 l5.0,1.7" stroke="#4e4e20" stroke-width=".8"/><path d="M21.1,143.9 l3.6,1.8" stroke="#4e4e20" stroke-width=".8"/><path d="M13.2,92.8 l3.3,3.6" stroke="#4e4e20" stroke-width=".8"/><path d="M6.4,198.4 l4.9,1.1" stroke="#4e4e20" stroke-width=".8"/><path d="M72.6,49.4 l3.7,2.4" stroke="#4e4e20" stroke-width=".8"/><path d="M55.0,112.6 l3.0,2.1" stroke="#4e4e20" stroke-width=".8"/><path d="M38.3,230.7 l3.3,1.8" stroke="#4e4e20" stroke-width=".8"/><path d="M4.9,217.3 l3.7,1.4" stroke="#4e4e20" stroke-width=".8"/><path d="M66.4,271.3 l3.6,1.2" stroke="#4e4e20" stroke-width=".8"/><path d="M42.3,45.9 l2.2,1.2" stroke="#4e4e20" stroke-width=".8"/><path d="M10.6,158.1 l3.9,0.9" stroke="#4e4e20" stroke-width=".8"/><path d="M55.8,37.6 l3.6,3.3" stroke="#4e4e20" stroke-width=".8"/><path d="M45.5,28.2 l3.6,1.8" stroke="#4e4e20" stroke-width=".8"/><path d="M81.9,55.6 l3.4,4.2" stroke="#4e4e20" stroke-width=".8"/><path d="M63.8,283.0 l1.8,2.2" stroke="#4e4e20" stroke-width=".8"/><path d="M43.8,330.5 l5.4,1.8" stroke="#4e4e20" stroke-width=".8"/><path d="M68.4,321.7 l2.0,1.0" stroke="#4e4e20" stroke-width=".8"/><path d="M65.8,63.2 l5.2,2.1" stroke="#4e4e20" stroke-width=".8"/><path d="M70.7,58.1 l2.7,3.0" stroke="#4e4e20" stroke-width=".8"/><path d="M20.3,98.1 l3.7,1.7" stroke="#4e4e20" stroke-width=".8"/><path d="M6.1,71.0 l1.7,2.0" stroke="#4e4e20" stroke-width=".8"/><path d="M59.4,310.0 l2.0,1.8" stroke="#4e4e20" stroke-width=".8"/><path d="M12.6,187.8 l4.1,2.0" stroke="#4e4e20" stroke-width=".8"/><path d="M75.5,196.0 l3.0,3.2" stroke="#4e4e20" stroke-width=".8"/><path d="M11.7,342.6 l4.0,2.1" stroke="#4e4e20" stroke-width=".8"/><path d="M69.2,98.7 l4.9,3.4" stroke="#4e4e20" stroke-width=".8"/><path d="M32.9,266.2 l3.6,1.2" stroke="#4e4e20" stroke-width=".8"/><path d="M64.7,26.2 l4.9,1.9" stroke="#4e4e20" stroke-width=".8"/><path d="M56.1,339.7 l3.4,2.7" stroke="#4e4e20" stroke-width=".8"/><path d="M28.9,10.6 l2.0,0.6" stroke="#4e4e20" stroke-width=".8"/><path d="M54.1,154.8 l2.7,3.0" stroke="#4e4e20" stroke-width=".8"/><path d="M14.0,86.1 l4.5,1.0" stroke="#4e4e20" stroke-width=".8"/><path d="M3.2,128.9 l2.2,1.1" stroke="#4e4e20" stroke-width=".8"/><path d="M21.6,205.5 l4.1,1.5" stroke="#4e4e20" stroke-width=".8"/><path d="M54.8,169.1 l1.7,1.9" stroke="#4e4e20" stroke-width=".8"/><path d="M23.2,60.0 l1.9,1.4" stroke="#4e4e20" stroke-width=".8"/><path d="M75.3,272.0 l3.3,1.4" stroke="#4e4e20" stroke-width=".8"/><path d="M4.0,226.1 l3.8,1.8" stroke="#4e4e20" stroke-width=".8"/><path d="M56.6,158.7 l4.3,3.8" stroke="#4e4e20" stroke-width=".8"/><path d="M23.6,312.7 l1.8,1.2" stroke="#4e4e20" stroke-width=".8"/><path d="M36.7,89.6 l1.6,1.5" stroke="#4e4e20" stroke-width=".8"/><path d="M4.0,194.6 l5.5,1.7" stroke="#4e4e20" stroke-width=".8"/><path d="M19.6,213.7 l3.2,2.4" stroke="#4e4e20" stroke-width=".8"/><path d="M70.5,68.5 l3.0,1.3" stroke="#4e4e20" stroke-width=".8"/><path d="M7.0,307.9 l3.9,3.3" stroke="#4e4e20" stroke-width=".8"/><path d="M3.5,292.9 l4.3,2.5" stroke="#4e4e20" stroke-width=".8"/><path d="M64.6,161.6 l2.8,0.8" stroke="#4e4e20" stroke-width=".8"/><path d="M22.3,23.0 l2.5,2.2" stroke="#4e4e20" stroke-width=".8"/><path d="M60.7,293.2 l4.5,1.8" stroke="#4e4e20" stroke-width=".8"/><path d="M49.0,156.1 l4.3,2.8" stroke="#4e4e20" stroke-width=".8"/><path d="M25.0,225.1 l5.5,2.0" stroke="#4e4e20" stroke-width=".8"/><path d="M76.0,15.1 l2.8,1.1" stroke="#4e4e20" stroke-width=".8"/><path d="M64.7,326.5 l4.5,2.1" stroke="#4e4e20" stroke-width=".8"/><path d="M76.1,120.1 l2.0,2.2" stroke="#4e4e20" stroke-width=".8"/><path d="M55.3,242.1 l3.0,3.6" stroke="#4e4e20" stroke-width=".8"/><path d="M42.0,291.3 l3.3,3.4" stroke="#4e4e20" stroke-width=".8"/><path d="M39.3,252.7 l3.9,1.7" stroke="#4e4e20" stroke-width=".8"/><path d="M20.6,218.6 l1.5,1.7" stroke="#4e4e20" stroke-width=".8"/><path d="M15.0,19.0 l1.6,1.8" stroke="#4e4e20" stroke-width=".8"/><path d="M31.6,57.5 l2.1,0.5" stroke="#4e4e20" stroke-width=".8"/><path d="M60.5,222.3 l3.6,3.1" stroke="#4e4e20" stroke-width=".8"/><path d="M8.5,207.8 l2.5,2.4" stroke="#4e4e20" stroke-width=".8"/><path d="M71.0,308.6 l1.6,1.6" stroke="#4e4e20" stroke-width=".8"/><path d="M78.9,326.3 l2.3,0.8" stroke="#4e4e20" stroke-width=".8"/><path d="M12.3,21.5 l3.9,3.7" stroke="#4e4e20" stroke-width=".8"/><path d="M55.6,286.4 l4.2,1.8" stroke="#4e4e20" stroke-width=".8"/><path d="M11.3,42.8 l4.7,1.7" stroke="#4e4e20" stroke-width=".8"/><path d="M29.5,152.0 l1.9,0.8" stroke="#4e4e20" stroke-width=".8"/><path d="M26.5,249.8 l3.2,1.4" stroke="#4e4e20" stroke-width=".8"/><path d="M83.0,178.8 l4.4,3.2" stroke="#4e4e20" stroke-width=".8"/><path d="M5.6,148.3 l2.8,2.5" stroke="#4e4e20" stroke-width=".8"/><path d="M31.8,246.1 l3.9,1.4" stroke="#4e4e20" stroke-width=".8"/><path d="M74.6,40.4 l5.0,1.7" stroke="#4e4e20" stroke-width=".8"/><path d="M3.1,77.7 l3.2,3.9" stroke="#4e4e20" stroke-width=".8"/><path d="M3.4,174.4 l2.9,2.7" stroke="#4e4e20" stroke-width=".8"/><path d="M18.3,175.7 l2.4,2.4" stroke="#4e4e20" stroke-width=".8"/><path d="M24.6,326.2 l2.9,1.1" stroke="#4e4e20" stroke-width=".8"/><path d="M61.1,176.9 l1.9,1.5" stroke="#4e4e20" stroke-width=".8"/><path d="M9.7,274.0 l3.5,3.3" stroke="#4e4e20" stroke-width=".8"/><path d="M55.1,129.1 l3.2,1.7" stroke="#4e4e20" stroke-width=".8"/><path d="M76.9,38.9 l5.4,1.2" stroke="#4e4e20" stroke-width=".8"/><path d="M20.1,98.2 l4.8,2.9" stroke="#4e4e20" stroke-width=".8"/><path d="M34.5,306.1 l2.5,1.5" stroke="#4e4e20" stroke-width=".8"/><path d="M47.1,262.7 l4.0,3.0" stroke="#4e4e20" stroke-width=".8"/><path d="M31.9,119.4 l1.8,1.9" stroke="#4e4e20" stroke-width=".8"/><path d="M58.0,258.6 l2.3,1.3" stroke="#4e4e20" stroke-width=".8"/><path d="M67.2,204.0 l2.2,1.3" stroke="#4e4e20" stroke-width=".8"/><path d="M76.5,89.7 l2.5,1.1" stroke="#4e4e20" stroke-width=".8"/><path d="M61.4,292.6 l2.5,0.8" stroke="#4e4e20" stroke-width=".8"/><path d="M23.5,119.4 l3.9,1.3" stroke="#4e4e20" stroke-width=".8"/><path d="M30.2,73.4 l4.5,3.8" stroke="#4e4e20" stroke-width=".8"/><path d="M11.4,332.4 l2.1,1.1" stroke="#4e4e20" stroke-width=".8"/><path d="M84.7,276.3 l4.3,2.4" stroke="#4e4e20" stroke-width=".8"/><path d="M19.3,223.7 l2.3,0.8" stroke="#4e4e20" stroke-width=".8"/><path d="M35.2,21.4 l2.6,2.5" stroke="#4e4e20" stroke-width=".8"/><path d="M60.6,177.7 l3.9,2.3" stroke="#4e4e20" stroke-width=".8"/><path d="M14.8,212.2 l2.7,2.4" stroke="#4e4e20" stroke-width=".8"/><path d="M78.4,154.1 l3.2,2.8" stroke="#4e4e20" stroke-width=".8"/><path d="M38.0,86.6 l3.3,3.6" stroke="#4e4e20" stroke-width=".8"/><path d="M67.2,244.5 l4.2,3.4" stroke="#4e4e20" stroke-width=".8"/><path d="M56.2,162.1 l2.6,1.9" stroke="#4e4e20" stroke-width=".8"/><path d="M11.1,150.6 l3.9,3.3" stroke="#4e4e20" stroke-width=".8"/><path d="M55.3,93.8 l3.2,1.8" stroke="#4e4e20" stroke-width=".8"/><path d="M54.6,147.1 l3.1,3.5" stroke="#4e4e20" stroke-width=".8"/><path d="M18.2,229.3 l4.6,2.3" stroke="#4e4e20" stroke-width=".8"/><path d="M43.7,336.5 l1.8,1.2" stroke="#4e4e20" stroke-width=".8"/><path d="M16.3,271.9 l4.9,3.1" stroke="#4e4e20" stroke-width=".8"/><path d="M11.4,202.5 l3.2,2.7" stroke="#4e4e20" stroke-width=".8"/><path d="M45.5,224.2 l4.5,2.8" stroke="#4e4e20" stroke-width=".8"/><path d="M37.1,327.6 l2.2,1.8" stroke="#4e4e20" stroke-width=".8"/><path d="M35.6,265.5 l1.6,1.9" stroke="#4e4e20" stroke-width=".8"/><path d="M32.5,29.0 l2.7,1.4" stroke="#4e4e20" stroke-width=".8"/><path d="M4.1,150.2 l2.8,2.3" stroke="#4e4e20" stroke-width=".8"/><path d="M32.2,98.8 l2.2,1.9" stroke="#4e4e20" stroke-width=".8"/><path d="M81.0,186.6 l2.1,2.0" stroke="#4e4e20" stroke-width=".8"/><path d="M35.5,81.0 l1.9,1.7" stroke="#4e4e20" stroke-width=".8"/><path d="M70.2,222.5 l3.2,2.2" stroke="#4e4e20" stroke-width=".8"/><path d="M21.8,332.9 l2.7,2.1" stroke="#4e4e20" stroke-width=".8"/><path d="M71.0,283.4 l3.6,1.5" stroke="#4e4e20" stroke-width=".8"/><path d="M48.5,51.9 l4.8,2.3" stroke="#4e4e20" stroke-width=".8"/><path d="M73.6,99.6 l3.3,1.3" stroke="#4e4e20" stroke-width=".8"/><path d="M38.4,72.3 l1.5,1.3" stroke="#4e4e20" stroke-width=".8"/><path d="M26.3,92.1 l2.8,1.6" stroke="#4e4e20" stroke-width=".8"/><path d="M38.6,223.5 l4.2,2.0" stroke="#4e4e20" stroke-width=".8"/><path d="M80.1,296.2 l1.6,1.6" stroke="#4e4e20" stroke-width=".8"/><path d="M78.2,272.7 l1.8,1.8" stroke="#4e4e20" stroke-width=".8"/><path d="M55.6,15.0 l1.3,1.6" stroke="#4e4e20" stroke-width=".8"/><path d="M57.4,93.8 l2.3,0.7" stroke="#4e4e20" stroke-width=".8"/><path d="M22.4,270.1 l3.2,1.0" stroke="#4e4e20" stroke-width=".8"/><path d="M78.0,275.2 l1.8,2.0" stroke="#4e4e20" stroke-width=".8"/><path d="M53.5,271.7 l3.2,3.4" stroke="#4e4e20" stroke-width=".8"/><path d="M68.4,291.0 l2.2,1.8" stroke="#4e4e20" stroke-width=".8"/><path d="M47.1,258.5 l2.6,2.7" stroke="#4e4e20" stroke-width=".8"/><path d="M49.1,98.6 l2.8,0.9" stroke="#4e4e20" stroke-width=".8"/><path d="M43.9,29.6 l3.7,1.1" stroke="#4e4e20" stroke-width=".8"/><path d="M43.8,176.9 l2.9,3.0" stroke="#4e4e20" stroke-width=".8"/><path d="M3.5,291.7 l3.2,2.2" stroke="#4e4e20" stroke-width=".8"/><path d="M58.2,291.6 l3.1,1.7" stroke="#4e4e20" stroke-width=".8"/><path d="M82.7,35.3 l3.6,2.7" stroke="#4e4e20" stroke-width=".8"/><path d="M5.4,214.2 l3.1,3.6" stroke="#4e4e20" stroke-width=".8"/><path d="M30.4,338.9 l3.5,2.1" stroke="#4e4e20" stroke-width=".8"/><path d="M77.5,21.4 l3.9,2.9" stroke="#4e4e20" stroke-width=".8"/><path d="M31.1,298.7 l3.0,1.8" stroke="#4e4e20" stroke-width=".8"/><path d="M46.6,268.1 l2.5,1.4" stroke="#4e4e20" stroke-width=".8"/><path d="M38.1,195.6 l4.9,2.1" stroke="#4e4e20" stroke-width=".8"/><path d="M71.7,145.2 l3.7,1.5" stroke="#4e4e20" stroke-width=".8"/><path d="M45.0,336.6 l3.4,3.2" stroke="#4e4e20" stroke-width=".8"/><path d="M30.5,116.2 l2.6,1.8" stroke="#4e4e20" stroke-width=".8"/><path d="M55.7,272.7 l1.6,1.4" stroke="#4e4e20" stroke-width=".8"/><path d="M76.5,192.7 l2.0,0.9" stroke="#4e4e20" stroke-width=".8"/><path d="M3.5,73.6 l4.6,3.3" stroke="#4e4e20" stroke-width=".8"/><path d="M57.6,274.3 l4.6,3.3" stroke="#4e4e20" stroke-width=".8"/><path d="M54.2,220.0 l3.9,2.8" stroke="#4e4e20" stroke-width=".8"/><path d="M59.5,81.2 l4.0,2.3" stroke="#4e4e20" stroke-width=".8"/><path d="M66.3,44.0 l2.7,0.6" stroke="#4e4e20" stroke-width=".8"/><path d="M67.3,316.2 l4.1,2.0" stroke="#4e4e20" stroke-width=".8"/><path d="M71.3,273.5 l3.9,1.6" stroke="#4e4e20" stroke-width=".8"/><path d="M28.1,151.3 l2.9,1.6" stroke="#4e4e20" stroke-width=".8"/><path d="M56.3,322.8 l1.8,1.2" stroke="#4e4e20" stroke-width=".8"/><path d="M6.3,49.8 l4.3,3.0" stroke="#4e4e20" stroke-width=".8"/><path d="M79.2,159.6 l1.8,0.9" stroke="#4e4e20" stroke-width=".8"/><path d="M52.1,324.1 l5.1,3.0" stroke="#4e4e20" stroke-width=".8"/><path d="M37.2,44.2 l4.3,1.6" stroke="#4e4e20" stroke-width=".8"/><path d="M15.6,15.2 l1.6,1.3" stroke="#4e4e20" stroke-width=".8"/><path d="M13.1,333.7 l1.6,1.7" stroke="#4e4e20" stroke-width=".8"/><path d="M13.7,16.0 l4.5,1.8" stroke="#4e4e20" stroke-width=".8"/><path d="M63.9,72.8 l1.6,1.5" stroke="#4e4e20" stroke-width=".8"/><path d="M62.2,296.6 l4.8,1.3" stroke="#4e4e20" stroke-width=".8"/><path d="M55.2,247.6 l2.5,2.9" stroke="#4e4e20" stroke-width=".8"/><path d="M24.1,333.0 l4.8,1.0" stroke="#4e4e20" stroke-width=".8"/><path d="M4.2,228.0 l5.1,1.3" stroke="#4e4e20" stroke-width=".8"/><path d="M28.8,254.4 l1.9,1.9" stroke="#4e4e20" stroke-width=".8"/><path d="M43.4,30.0 l2.9,2.0" stroke="#4e4e20" stroke-width=".8"/><path d="M39.4,236.8 l1.9,1.8" stroke="#4e4e20" stroke-width=".8"/><path d="M33.2,226.0 l4.0,2.1" stroke="#4e4e20" stroke-width=".8"/><path d="M35.0,273.4 l4.2,3.9" stroke="#4e4e20" stroke-width=".8"/><path d="M50.0,108.0 l1.4,1.7" stroke="#4e4e20" stroke-width=".8"/><path d="M61.4,287.2 l2.7,1.9" stroke="#4e4e20" stroke-width=".8"/><path d="M84.1,288.5 l4.0,1.8" stroke="#4e4e20" stroke-width=".8"/><path d="M38.6,307.5 l2.7,2.2" stroke="#4e4e20" stroke-width=".8"/><path d="M52.9,310.2 l4.8,2.0" stroke="#4e4e20" stroke-width=".8"/><path d="M3.1,98.1 l3.0,2.1" stroke="#4e4e20" stroke-width=".8"/><path d="M70.7,307.3 l1.5,1.5" stroke="#4e4e20" stroke-width=".8"/><path d="M70.4,300.5 l4.0,1.6" stroke="#4e4e20" stroke-width=".8"/><path d="M73.6,280.4 l3.2,3.5" stroke="#4e4e20" stroke-width=".8"/><path d="M31.8,38.5 l3.1,2.9" stroke="#4e4e20" stroke-width=".8"/><path d="M19.6,261.3 l5.4,2.0" stroke="#4e4e20" stroke-width=".8"/><path d="M53.4,237.0 l3.6,1.3" stroke="#4e4e20" stroke-width=".8"/><path d="M24.1,261.6 l4.5,2.6" stroke="#4e4e20" stroke-width=".8"/><path d="M10.3,280.2 l4.8,1.8" stroke="#4e4e20" stroke-width=".8"/><path d="M51.1,310.5 l4.7,3.0" stroke="#4e4e20" stroke-width=".8"/><path d="M42.6,207.4 l2.6,0.9" stroke="#4e4e20" stroke-width=".8"/><path d="M18.0,244.9 l2.9,1.9" stroke="#4e4e20" stroke-width=".8"/><path d="M36.4,183.3 l2.5,0.6" stroke="#4e4e20" stroke-width=".8"/><path d="M85.8,135.3 l1.9,1.5" stroke="#4e4e20" stroke-width=".8"/><path d="M68.3,62.3 l4.0,1.9" stroke="#4e4e20" stroke-width=".8"/><path d="M46.1,16.9 l1.3,1.7" stroke="#4e4e20" stroke-width=".8"/><path d="M74.9,172.9 l4.0,1.6" stroke="#4e4e20" stroke-width=".8"/><path d="M67.7,152.7 l4.3,3.9" stroke="#4e4e20" stroke-width=".8"/><path d="M71.0,332.8 l2.9,0.7" stroke="#4e4e20" stroke-width=".8"/><path d="M19.7,70.5 l2.3,0.5" stroke="#4e4e20" stroke-width=".8"/><path d="M49.3,301.7 l2.5,2.9" stroke="#4e4e20" stroke-width=".8"/><path d="M78.5,31.5 l3.9,2.0" stroke="#4e4e20" stroke-width=".8"/><path d="M13.0,331.4 l2.5,1.7" stroke="#4e4e20" stroke-width=".8"/><path d="M56.2,330.4 l4.2,2.1" stroke="#4e4e20" stroke-width=".8"/><path d="M40.2,63.5 l3.7,4.6" stroke="#4e4e20" stroke-width=".8"/><path d="M21.4,22.9 l2.7,1.3" stroke="#4e4e20" stroke-width=".8"/><path d="M77.9,313.0 l5.2,1.2" stroke="#4e4e20" stroke-width=".8"/><path d="M68.3,247.7 l2.9,3.6" stroke="#4e4e20" stroke-width=".8"/><path d="M7.6,58.5 l3.3,3.8" stroke="#4e4e20" stroke-width=".8"/><path d="M59.2,110.1 l3.3,2.9" stroke="#4e4e20" stroke-width=".8"/><path d="M11.7,118.5 l2.9,0.9" stroke="#4e4e20" stroke-width=".8"/><path d="M42.9,66.5 l2.8,0.9" stroke="#4e4e20" stroke-width=".8"/><path d="M59.2,14.2 l4.6,1.6" stroke="#4e4e20" stroke-width=".8"/><path d="M6.0,320.8 l1.9,2.2" stroke="#4e4e20" stroke-width=".8"/><path d="M74.9,307.7 l2.2,1.3" stroke="#4e4e20" stroke-width=".8"/><path d="M11.0,321.1 l4.3,3.2" stroke="#4e4e20" stroke-width=".8"/><path d="M40.5,123.8 l4.6,2.7" stroke="#4e4e20" stroke-width=".8"/><path d="M55.1,57.8 l2.8,0.7" stroke="#4e4e20" stroke-width=".8"/><path d="M62.2,195.4 l1.8,1.9" stroke="#4e4e20" stroke-width=".8"/><path d="M25.1,147.9 l2.4,1.0" stroke="#4e4e20" stroke-width=".8"/><path d="M72.7,122.1 l2.3,1.4" stroke="#4e4e20" stroke-width=".8"/><path d="M29.4,312.6 l1.6,1.9" stroke="#4e4e20" stroke-width=".8"/><path d="M7.7,309.8 l4.4,1.6" stroke="#4e4e20" stroke-width=".8"/><path d="M42.6,105.9 l2.9,1.0" stroke="#4e4e20" stroke-width=".8"/><path d="M33.2,342.0 l4.0,4.5" stroke="#4e4e20" stroke-width=".8"/><path d="M11.1,107.0 l5.4,1.3" stroke="#4e4e20" stroke-width=".8"/><path d="M63.3,108.3 l5.8,1.2" stroke="#4e4e20" stroke-width=".8"/><path d="M70.0,124.2 l2.5,0.5" stroke="#4e4e20" stroke-width=".8"/><path d="M72.1,186.4 l2.4,1.3" stroke="#4e4e20" stroke-width=".8"/><path d="M78.7,83.1 l4.1,1.3" stroke="#4e4e20" stroke-width=".8"/><path d="M18.0,268.1 l4.6,1.6" stroke="#4e4e20" stroke-width=".8"/><path d="M9.6,39.3 l3.8,2.3" stroke="#4e4e20" stroke-width=".8"/><path d="M25.7,79.0 l3.4,2.9" stroke="#4e4e20" stroke-width=".8"/><path d="M70.4,205.3 l2.7,0.7" stroke="#4e4e20" stroke-width=".8"/><path d="M63.8,146.7 l4.7,1.2" stroke="#4e4e20" stroke-width=".8"/><path d="M70.3,122.3 l3.7,3.9" stroke="#4e4e20" stroke-width=".8"/><path d="M43.9,15.2 l4.9,2.9" stroke="#4e4e20" stroke-width=".8"/><path d="M75.4,99.2 l1.9,1.9" stroke="#4e4e20" stroke-width=".8"/><path d="M33.5,64.8 l2.8,2.0" stroke="#4e4e20" stroke-width=".8"/><path d="M3.4,184.1 l3.2,2.0" stroke="#4e4e20" stroke-width=".8"/><path d="M13.0,249.4 l3.6,3.8" stroke="#4e4e20" stroke-width=".8"/><path d="M29.6,248.2 l2.6,2.3" stroke="#4e4e20" stroke-width=".8"/><path d="M8.1,302.4 l5.0,3.0" stroke="#4e4e20" stroke-width=".8"/><path d="M45.6,187.7 l4.1,0.9" stroke="#4e4e20" stroke-width=".8"/><path d="M83.3,84.9 l2.6,0.7" stroke="#4e4e20" stroke-width=".8"/><path d="M23.8,283.7 l2.0,0.6" stroke="#4e4e20" stroke-width=".8"/><path d="M61.0,75.4 l1.7,1.2" stroke="#4e4e20" stroke-width=".8"/><path d="M50.8,185.2 l4.6,1.3" stroke="#4e4e20" stroke-width=".8"/><path d="M75.2,250.2 l2.1,0.6" stroke="#4e4e20" stroke-width=".8"/><path d="M44.0,177.8 l3.0,0.9" stroke="#4e4e20" stroke-width=".8"/><path d="M36.7,55.9 l3.0,3.1" stroke="#4e4e20" stroke-width=".8"/><path d="M15.2,201.9 l4.7,1.5" stroke="#4e4e20" stroke-width=".8"/><path d="M71.6,324.1 l3.1,1.7" stroke="#4e4e20" stroke-width=".8"/><path d="M72.7,186.1 l2.3,2.7" stroke="#4e4e20" stroke-width=".8"/><path d="M67.5,123.4 l2.7,1.2" stroke="#4e4e20" stroke-width=".8"/><path d="M39.2,338.7 l3.5,3.9" stroke="#4e4e20" stroke-width=".8"/><path d="M70.6,294.0 l1.9,1.2" stroke="#4e4e20" stroke-width=".8"/><path d="M82.5,323.0 l2.6,1.4" stroke="#4e4e20" stroke-width=".8"/><path d="M55.5,132.1 l4.0,1.0" stroke="#4e4e20" stroke-width=".8"/><path d="M38.9,179.1 l2.0,0.6" stroke="#4e4e20" stroke-width=".8"/><path d="M83.5,270.2 l4.6,3.4" stroke="#4e4e20" stroke-width=".8"/><path d="M70.2,306.3 l5.4,1.2" stroke="#4e4e20" stroke-width=".8"/><path d="M56.3,99.0 l4.4,1.8" stroke="#4e4e20" stroke-width=".8"/><path d="M48.0,319.7 l4.2,1.6" stroke="#4e4e20" stroke-width=".8"/><path d="M46.2,155.3 l5.3,2.3" stroke="#4e4e20" stroke-width=".8"/><path d="M28.3,226.9 l2.0,1.4" stroke="#4e4e20" stroke-width=".8"/><path d="M82.4,182.1 l2.7,1.5" stroke="#4e4e20" stroke-width=".8"/><path d="M47.3,59.7 l2.4,0.7" stroke="#4e4e20" stroke-width=".8"/><path d="M27.4,146.2 l2.9,1.1" stroke="#4e4e20" stroke-width=".8"/><path d="M10.3,193.0 l4.3,3.1" stroke="#4e4e20" stroke-width=".8"/><path d="M50.3,227.9 l2.2,1.8" stroke="#4e4e20" stroke-width=".8"/><path d="M41.3,193.6 l3.8,2.2" stroke="#4e4e20" stroke-width=".8"/><path d="M28.8,91.2 l2.4,1.5" stroke="#4e4e20" stroke-width=".8"/><path d="M34.8,206.2 l1.8,0.9" stroke="#4e4e20" stroke-width=".8"/><path d="M74.5,89.9 l3.6,2.2" stroke="#4e4e20" stroke-width=".8"/><path d="M26.6,340.8 l2.3,2.1" stroke="#4e4e20" stroke-width=".8"/><path d="M16.2,32.4 l4.8,2.7" stroke="#4e4e20" stroke-width=".8"/><path d="M8.1,139.9 l2.8,2.5" stroke="#4e4e20" stroke-width=".8"/><path d="M12.1,85.4 l4.4,3.8" stroke="#4e4e20" stroke-width=".8"/><path d="M15.8,122.9 l2.7,2.1" stroke="#4e4e20" stroke-width=".8"/><path d="M54.2,294.7 l4.5,2.8" stroke="#4e4e20" stroke-width=".8"/><path d="M64.3,259.0 l4.3,2.6" stroke="#4e4e20" stroke-width=".8"/><path d="M68.2,247.4 l5.4,1.6" stroke="#4e4e20" stroke-width=".8"/><path d="M75.3,11.4 l4.1,2.9" stroke="#4e4e20" stroke-width=".8"/><path d="M44.3,332.5 l3.8,2.0" stroke="#4e4e20" stroke-width=".8"/><path d="M68.0,302.4 l4.0,2.0" stroke="#4e4e20" stroke-width=".8"/><path d="M40.5,163.4 l4.5,1.9" stroke="#4e4e20" stroke-width=".8"/><path d="M35.4,196.0 l3.2,1.5" stroke="#4e4e20" stroke-width=".8"/><path d="M68.3,294.6 l3.5,2.0" stroke="#4e4e20" stroke-width=".8"/><path d="M18.3,111.9 l2.1,1.5" stroke="#4e4e20" stroke-width=".8"/><path d="M51.3,39.5 l5.2,2.4" stroke="#4e4e20" stroke-width=".8"/><path d="M73.0,290.8 l5.5,2.0" stroke="#4e4e20" stroke-width=".8"/><path d="M38.4,315.0 l2.0,0.5" stroke="#4e4e20" stroke-width=".8"/><path d="M49.9,176.6 l4.2,3.8" stroke="#4e4e20" stroke-width=".8"/><path d="M47.7,344.4 l3.4,2.2" stroke="#4e4e20" stroke-width=".8"/><path d="M59.9,140.5 l2.8,2.0" stroke="#4e4e20" stroke-width=".8"/><path d="M32.1,327.5 l4.0,2.5" stroke="#4e4e20" stroke-width=".8"/><path d="M11.2,135.4 l3.0,2.0" stroke="#4e4e20" stroke-width=".8"/><path d="M50.6,304.7 l5.0,3.0" stroke="#4e4e20" stroke-width=".8"/><path d="M39.5,219.2 l5.4,2.6" stroke="#4e4e20" stroke-width=".8"/><path d="M47.0,283.3 l2.4,1.1" stroke="#4e4e20" stroke-width=".8"/><path d="M84.2,286.7 l3.9,1.1" stroke="#4e4e20" stroke-width=".8"/><path d="M77.2,241.1 l3.3,4.1" stroke="#4e4e20" stroke-width=".8"/><path d="M76.7,151.0 l2.4,1.0" stroke="#4e4e20" stroke-width=".8"/><path d="M45.5,179.1 l2.6,0.9" stroke="#4e4e20" stroke-width=".8"/><path d="M55.3,212.0 l2.1,2.7" stroke="#4e4e20" stroke-width=".8"/><path d="M55.8,24.2 l2.7,2.5" stroke="#4e4e20" stroke-width=".8"/><path d="M28.5,241.4 l1.8,0.8" stroke="#4e4e20" stroke-width=".8"/><path d="M72.9,206.4 l4.4,1.5" stroke="#4e4e20" stroke-width=".8"/><path d="M44.3,195.3 l2.4,1.9" stroke="#4e4e20" stroke-width=".8"/><path d="M47.1,344.0 l3.8,2.0" stroke="#4e4e20" stroke-width=".8"/><path d="M13.1,62.5 l4.8,1.4" stroke="#4e4e20" stroke-width=".8"/><path d="M11.3,67.1 l2.9,2.9" stroke="#4e4e20" stroke-width=".8"/><path d="M53.9,280.2 l2.2,0.5" stroke="#4e4e20" stroke-width=".8"/><path d="M67.0,118.1 l4.4,2.1" stroke="#4e4e20" stroke-width=".8"/><path d="M17.1,99.3 l1.6,1.8" stroke="#4e4e20" stroke-width=".8"/><path d="M51.3,126.9 l3.4,1.7" stroke="#4e4e20" stroke-width=".8"/><path d="M7.5,308.3 l2.8,3.3" stroke="#4e4e20" stroke-width=".8"/><path d="M39.5,217.8 l2.9,0.7" stroke="#4e4e20" stroke-width=".8"/><path d="M80.3,296.3 l2.2,2.4" stroke="#4e4e20" stroke-width=".8"/><path d="M70.7,111.7 l2.8,3.4" stroke="#4e4e20" stroke-width=".8"/><path d="M44.1,328.2 l2.6,1.4" stroke="#4e4e20" stroke-width=".8"/><path d="M62.6,84.2 l2.2,2.4" stroke="#4e4e20" stroke-width=".8"/><path d="M43.2,275.6 l2.8,0.9" stroke="#4e4e20" stroke-width=".8"/><path d="M32.7,72.5 l5.4,2.3" stroke="#4e4e20" stroke-width=".8"/><path d="M49.6,48.5 l3.7,1.9" stroke="#4e4e20" stroke-width=".8"/><path d="M36.5,31.9 l1.8,1.7" stroke="#4e4e20" stroke-width=".8"/><path d="M32.2,92.1 l2.5,1.1" stroke="#4e4e20" stroke-width=".8"/><path d="M22.7,21.7 l4.2,2.0" stroke="#4e4e20" stroke-width=".8"/><path d="M15.9,246.5 l2.2,0.9" stroke="#4e4e20" stroke-width=".8"/><path d="M72.3,52.8 l2.7,2.7" stroke="#4e4e20" stroke-width=".8"/><path d="M69.8,63.3 l2.6,2.2" stroke="#4e4e20" stroke-width=".8"/><path d="M34.3,331.1 l1.8,2.2" stroke="#4e4e20" stroke-width=".8"/><path d="M44.9,86.1 l3.6,1.1" stroke="#4e4e20" stroke-width=".8"/><path d="M61.6,97.4 l4.6,3.2" stroke="#4e4e20" stroke-width=".8"/><path d="M33.5,92.5 l4.2,1.5" stroke="#4e4e20" stroke-width=".8"/><path d="M75.4,51.1 l3.4,2.2" stroke="#4e4e20" stroke-width=".8"/><path d="M25.4,268.5 l2.8,2.2" stroke="#4e4e20" stroke-width=".8"/><path d="M50.1,114.1 l3.4,0.9" stroke="#4e4e20" stroke-width=".8"/><path d="M17.7,295.1 l2.6,2.0" stroke="#4e4e20" stroke-width=".8"/><path d="M12.0,198.3 l2.9,1.8" stroke="#4e4e20" stroke-width=".8"/><path d="M27.6,32.1 l3.0,1.1" stroke="#4e4e20" stroke-width=".8"/><path d="M13.5,250.1 l2.8,1.5" stroke="#4e4e20" stroke-width=".8"/><path d="M78.4,269.6 l3.8,4.0" stroke="#4e4e20" stroke-width=".8"/><path d="M14.0,102.6 l1.7,1.3" stroke="#4e4e20" stroke-width=".8"/><path d="M58.1,127.7 l2.9,2.2" stroke="#4e4e20" stroke-width=".8"/><path d="M61.0,93.2 l4.9,2.3" stroke="#4e4e20" stroke-width=".8"/><path d="M55.2,70.9 l1.6,1.8" stroke="#4e4e20" stroke-width=".8"/><path d="M63.9,248.7 l2.1,0.5" stroke="#4e4e20" stroke-width=".8"/><path d="M16.4,76.4 l2.9,1.4" stroke="#4e4e20" stroke-width=".8"/><path d="M6.3,114.2 l4.3,1.5" stroke="#4e4e20" stroke-width=".8"/><path d="M72.7,201.0 l4.5,1.8" stroke="#4e4e20" stroke-width=".8"/><path d="M39.1,239.2 l3.3,0.7" stroke="#4e4e20" stroke-width=".8"/><path d="M72.2,270.1 l3.1,0.7" stroke="#4e4e20" stroke-width=".8"/><path d="M73.9,213.5 l2.0,0.8" stroke="#4e4e20" stroke-width=".8"/><path d="M12.2,275.1 l1.9,2.1" stroke="#4e4e20" stroke-width=".8"/><path d="M65.2,38.9 l4.2,2.2" stroke="#4e4e20" stroke-width=".8"/><path d="M65.0,287.6 l3.0,0.8" stroke="#4e4e20" stroke-width=".8"/><path d="M81.5,152.0 l4.4,3.6" stroke="#4e4e20" stroke-width=".8"/><path d="M64.3,288.0 l3.9,2.2" stroke="#4e4e20" stroke-width=".8"/><path d="M7.5,243.9 l3.1,2.0" stroke="#4e4e20" stroke-width=".8"/><path d="M80.0,52.8 l4.9,1.2" stroke="#4e4e20" stroke-width=".8"/><path d="M61.3,279.9 l2.5,1.7" stroke="#4e4e20" stroke-width=".8"/><path d="M83.5,223.6 l3.9,1.5" stroke="#4e4e20" stroke-width=".8"/><path d="M7.9,129.9 l3.4,1.2" stroke="#4e4e20" stroke-width=".8"/><path d="M28.8,55.7 l3.8,3.0" stroke="#4e4e20" stroke-width=".8"/><path d="M22.7,91.0 l3.5,2.0" stroke="#4e4e20" stroke-width=".8"/><path d="M80.7,127.7 l2.2,2.3" stroke="#4e4e20" stroke-width=".8"/><path d="M14.8,198.7 l2.4,2.3" stroke="#4e4e20" stroke-width=".8"/><path d="M48.5,264.8 l2.1,1.7" stroke="#4e4e20" stroke-width=".8"/><path d="M52.7,164.5 l3.6,3.6" stroke="#4e4e20" stroke-width=".8"/><path d="M12.5,106.9 l3.2,1.2" stroke="#4e4e20" stroke-width=".8"/><path d="M8.0,104.1 l2.1,1.8" stroke="#4e4e20" stroke-width=".8"/><path d="M40.2,47.9 l2.8,1.7" stroke="#4e4e20" stroke-width=".8"/><path d="M33.1,66.3 l2.2,0.5" stroke="#4e4e20" stroke-width=".8"/><path d="M85.3,261.4 l1.8,1.5" stroke="#4e4e20" stroke-width=".8"/><path d="M84.4,198.8 l2.1,1.3" stroke="#4e4e20" stroke-width=".8"/><path d="M39.0,73.6 l4.1,0.9" stroke="#4e4e20" stroke-width=".8"/><path d="M79.3,225.9 l3.0,3.4" stroke="#4e4e20" stroke-width=".8"/><path d="M57.2,94.2 l2.9,0.9" stroke="#4e4e20" stroke-width=".8"/><path d="M5.3,269.4 l4.9,2.1" stroke="#4e4e20" stroke-width=".8"/><path d="M18.4,223.8 l3.6,4.0" stroke="#4e4e20" stroke-width=".8"/><path d="M17.0,272.8 l4.0,3.5" stroke="#4e4e20" stroke-width=".8"/><path d="M30.1,71.8 l4.8,2.2" stroke="#4e4e20" stroke-width=".8"/><path d="M33.6,194.6 l2.5,2.5" stroke="#4e4e20" stroke-width=".8"/><path d="M22.9,23.8 l3.4,2.5" stroke="#4e4e20" stroke-width=".8"/><path d="M71.0,246.4 l3.7,4.3" stroke="#4e4e20" stroke-width=".8"/><path d="M44.0,177.3 l2.4,1.0" stroke="#4e4e20" stroke-width=".8"/><path d="M51.2,36.9 l4.5,1.5" stroke="#4e4e20" stroke-width=".8"/><path d="M39.8,334.9 l2.3,0.5" stroke="#4e4e20" stroke-width=".8"/><path d="M39.5,73.9 l4.8,1.0" stroke="#4e4e20" stroke-width=".8"/><path d="M72.8,296.5 l4.5,2.5" stroke="#4e4e20" stroke-width=".8"/><path d="M26.5,231.6 l3.6,1.9" stroke="#4e4e20" stroke-width=".8"/><path d="M31.1,157.0 l3.3,3.3" stroke="#4e4e20" stroke-width=".8"/><path d="M78.0,65.1 l2.8,1.6" stroke="#4e4e20" stroke-width=".8"/><path d="M49.8,126.6 l2.7,0.7" stroke="#4e4e20" stroke-width=".8"/><path d="M29.9,164.3 l3.9,4.4" stroke="#4e4e20" stroke-width=".8"/><path d="M74.8,336.4 l4.7,3.5" stroke="#4e4e20" stroke-width=".8"/><path d="M70.3,30.1 l3.8,2.8" stroke="#4e4e20" stroke-width=".8"/><path d="M27.7,201.3 l5.0,3.0" stroke="#4e4e20" stroke-width=".8"/><path d="M56.7,110.3 l2.3,2.5" stroke="#4e4e20" stroke-width=".8"/><path d="M5.3,73.3 l4.1,2.3" stroke="#4e4e20" stroke-width=".8"/><path d="M10.1,231.3 l2.9,2.0" stroke="#4e4e20" stroke-width=".8"/><path d="M37.6,187.5 l3.8,2.0" stroke="#4e4e20" stroke-width=".8"/><path d="M12.5,70.5 l4.6,3.1" stroke="#4e4e20" stroke-width=".8"/><path d="M12.3,298.8 l2.9,0.8" stroke="#4e4e20" stroke-width=".8"/><path d="M47.1,94.3 l3.3,2.2" stroke="#4e4e20" stroke-width=".8"/><path d="M21.8,201.9 l2.1,1.3" stroke="#4e4e20" stroke-width=".8"/><path d="M51.8,36.9 l3.5,0.9" stroke="#4e4e20" stroke-width=".8"/><path d="M39.5,299.3 l3.2,2.7" stroke="#4e4e20" stroke-width=".8"/><path d="M65.8,48.4 l4.5,3.9" stroke="#4e4e20" stroke-width=".8"/><path d="M11.5,288.1 l3.4,1.1" stroke="#4e4e20" stroke-width=".8"/><path d="M82.7,198.6 l4.9,1.5" stroke="#4e4e20" stroke-width=".8"/><path d="M67.4,29.3 l2.6,1.3" stroke="#4e4e20" stroke-width=".8"/><path d="M4.3,209.1 l2.6,1.1" stroke="#4e4e20" stroke-width=".8"/><path d="M61.7,152.7 l4.5,3.3" stroke="#4e4e20" stroke-width=".8"/><path d="M75.4,198.6 l3.9,4.1" stroke="#4e4e20" stroke-width=".8"/><path d="M16.9,259.7 l2.5,2.3" stroke="#4e4e20" stroke-width=".8"/><path d="M59.5,286.6 l2.2,1.1" stroke="#4e4e20" stroke-width=".8"/><path d="M64.2,327.6 l4.8,1.1" stroke="#4e4e20" stroke-width=".8"/><path d="M53.1,43.4 l3.0,2.9" stroke="#4e4e20" stroke-width=".8"/><path d="M12.4,320.0 l4.4,1.7" stroke="#4e4e20" stroke-width=".8"/><path d="M19.0,159.7 l4.4,3.1" stroke="#4e4e20" stroke-width=".8"/><path d="M12.4,17.0 l1.8,1.7" stroke="#4e4e20" stroke-width=".8"/><path d="M18.4,195.7 l2.5,2.0" stroke="#4e4e20" stroke-width=".8"/><path d="M34.6,58.3 l4.6,3.0" stroke="#4e4e20" stroke-width=".8"/><path d="M60.2,280.7 l5.7,1.2" stroke="#4e4e20" stroke-width=".8"/><path d="M31.4,60.6 l2.8,2.9" stroke="#4e4e20" stroke-width=".8"/><path d="M69.4,21.9 l2.0,1.9" stroke="#4e4e20" stroke-width=".8"/><path d="M59.4,141.5 l3.7,1.2" stroke="#4e4e20" stroke-width=".8"/><path d="M73.1,141.8 l4.4,3.2" stroke="#4e4e20" stroke-width=".8"/><path d="M9.3,120.3 l1.9,2.1" stroke="#4e4e20" stroke-width=".8"/><path d="M51.9,24.6 l2.4,1.2" stroke="#4e4e20" stroke-width=".8"/><path d="M41.8,203.3 l3.2,1.5" stroke="#4e4e20" stroke-width=".8"/><path d="M3.5,204.0 l3.3,0.7" stroke="#4e4e20" stroke-width=".8"/><path d="M41.1,340.4 l2.1,0.6" stroke="#4e4e20" stroke-width=".8"/><path d="M58.7,101.3 l2.6,1.6" stroke="#4e4e20" stroke-width=".8"/><path d="M24.8,200.6 l2.7,3.1" stroke="#4e4e20" stroke-width=".8"/><path d="M85.4,21.4 l3.1,2.9" stroke="#4e4e20" stroke-width=".8"/><path d="M75.4,269.4 l3.6,2.7" stroke="#4e4e20" stroke-width=".8"/><path d="M33.1,104.3 l3.6,3.8" stroke="#4e4e20" stroke-width=".8"/><path d="M80.9,238.2 l2.4,2.2" stroke="#4e4e20" stroke-width=".8"/><path d="M64.4,180.5 l4.1,2.0" stroke="#4e4e20" stroke-width=".8"/><path d="M48.7,146.0 l2.0,0.9" stroke="#4e4e20" stroke-width=".8"/><path d="M29.8,341.1 l3.5,1.7" stroke="#4e4e20" stroke-width=".8"/><path d="M23.2,88.7 l3.3,1.0" stroke="#4e4e20" stroke-width=".8"/><path d="M3.6,301.8 l3.3,1.9" stroke="#4e4e20" stroke-width=".8"/><path d="M50.2,111.3 l2.6,0.7" stroke="#4e4e20" stroke-width=".8"/><path d="M28.0,113.3 l4.1,2.7" stroke="#4e4e20" stroke-width=".8"/><path d="M80.8,124.1 l4.7,3.2" stroke="#4e4e20" stroke-width=".8"/><path d="M9.6,69.9 l2.7,3.4" stroke="#4e4e20" stroke-width=".8"/><path d="M32.6,269.4 l2.6,2.7" stroke="#4e4e20" stroke-width=".8"/><path d="M8.6,172.3 l5.2,2.1" stroke="#4e4e20" stroke-width=".8"/><path d="M24.4,17.7 l2.5,1.0" stroke="#4e4e20" stroke-width=".8"/><path d="M61.5,83.1 l3.4,1.2" stroke="#4e4e20" stroke-width=".8"/><path d="M53.0,299.5 l4.3,1.5" stroke="#4e4e20" stroke-width=".8"/><path d="M63.9,332.7 l4.3,1.1" stroke="#4e4e20" stroke-width=".8"/><path d="M70.2,303.3 l3.2,1.0" stroke="#4e4e20" stroke-width=".8"/><path d="M18.6,189.9 l4.4,3.3" stroke="#4e4e20" stroke-width=".8"/><path d="M79.6,81.1 l2.5,2.2" stroke="#4e4e20" stroke-width=".8"/><path d="M56.9,145.8 l4.3,2.0" stroke="#4e4e20" stroke-width=".8"/><path d="M7.8,148.8 l1.8,1.3" stroke="#4e4e20" stroke-width=".8"/><path d="M30.8,175.6 l4.1,1.6" stroke="#4e4e20" stroke-width=".8"/><path d="M41.5,14.6 l4.7,3.2" stroke="#4e4e20" stroke-width=".8"/><path d="M85.0,28.8 l3.4,2.9" stroke="#4e4e20" stroke-width=".8"/><path d="M30.3,41.3 l2.5,0.8" stroke="#4e4e20" stroke-width=".8"/><path d="M66.7,40.1 l4.6,2.5" stroke="#4e4e20" stroke-width=".8"/><path d="M47.7,207.1 l3.3,2.6" stroke="#4e4e20" stroke-width=".8"/><path d="M52.9,120.8 l4.6,1.8" stroke="#4e4e20" stroke-width=".8"/><path d="M62.0,265.7 l4.7,2.1" stroke="#4e4e20" stroke-width=".8"/><path d="M67.1,337.4 l3.5,1.5" stroke="#4e4e20" stroke-width=".8"/><path d="M46.4,325.2 l2.5,0.5" stroke="#4e4e20" stroke-width=".8"/><path d="M42.5,229.5 l4.6,2.2" stroke="#4e4e20" stroke-width=".8"/><path d="M85.1,86.4 l4.9,1.3" stroke="#4e4e20" stroke-width=".8"/><path d="M5.3,54.9 l1.9,1.2" stroke="#4e4e20" stroke-width=".8"/><path d="M49.1,70.9 l5.2,2.5" stroke="#4e4e20" stroke-width=".8"/><path d="M15.4,69.4 l3.3,3.7" stroke="#4e4e20" stroke-width=".8"/><path d="M16.5,19.7 l4.8,1.8" stroke="#4e4e20" stroke-width=".8"/><path d="M84.5,177.1 l4.1,1.9" stroke="#4e4e20" stroke-width=".8"/><path d="M69.4,164.1 l2.2,2.4" stroke="#4e4e20" stroke-width=".8"/><path d="M11.9,255.7 l1.8,1.4" stroke="#4e4e20" stroke-width=".8"/><path d="M36.4,299.5 l1.9,1.3" stroke="#4e4e20" stroke-width=".8"/><path d="M37.0,317.9 l4.6,3.4" stroke="#4e4e20" stroke-width=".8"/><path d="M21.6,94.4 l2.7,1.5" stroke="#4e4e20" stroke-width=".8"/><path d="M22.2,78.1 l4.0,3.0" stroke="#4e4e20" stroke-width=".8"/><path d="M27.8,343.1 l2.4,1.6" stroke="#4e4e20" stroke-width=".8"/><path d="M16.0,299.1 l5.1,2.1" stroke="#4e4e20" stroke-width=".8"/><path d="M65.4,285.6 l2.8,1.3" stroke="#4e4e20" stroke-width=".8"/><path d="M43.3,308.5 l2.1,1.7" stroke="#4e4e20" stroke-width=".8"/><path d="M52.6,161.8 l3.0,3.2" stroke="#4e4e20" stroke-width=".8"/><path d="M20.4,306.0 l2.5,2.3" stroke="#4e4e20" stroke-width=".8"/><path d="M74.7,71.1 l3.4,4.3" stroke="#4e4e20" stroke-width=".8"/><path d="M27.7,18.2 l1.6,1.9" stroke="#4e4e20" stroke-width=".8"/><path d="M3.8,315.4 l2.0,1.7" stroke="#4e4e20" stroke-width=".8"/><path d="M11.1,66.5 l4.6,1.2" stroke="#4e4e20" stroke-width=".8"/><path d="M31.2,317.7 l3.3,3.5" stroke="#4e4e20" stroke-width=".8"/><path d="M84.3,21.0 l2.1,2.0" stroke="#4e4e20" stroke-width=".8"/><path d="M60.2,22.7 l3.8,1.4" stroke="#4e4e20" stroke-width=".8"/><path d="M38.7,45.1 l1.3,1.6" stroke="#4e4e20" stroke-width=".8"/><path d="M29.3,304.3 l2.1,1.3" stroke="#4e4e20" stroke-width=".8"/><path d="M14.3,153.5 l2.1,1.7" stroke="#4e4e20" stroke-width=".8"/><path d="M15.3,257.3 l3.8,1.1" stroke="#4e4e20" stroke-width=".8"/><path d="M32.3,176.2 l5.1,2.4" stroke="#4e4e20" stroke-width=".8"/><path d="M20.9,334.1 l4.2,3.6" stroke="#4e4e20" stroke-width=".8"/><path d="M25.7,69.4 l3.0,0.8" stroke="#4e4e20" stroke-width=".8"/><path d="M6.6,180.4 l3.0,2.0" stroke="#4e4e20" stroke-width=".8"/><path d="M33.1,13.5 l3.8,2.9" stroke="#4e4e20" stroke-width=".8"/><path d="M48.1,193.9 l3.0,3.7" stroke="#4e4e20" stroke-width=".8"/><path d="M75.5,250.4 l3.3,1.5" stroke="#4e4e20" stroke-width=".8"/><path d="M37.8,335.9 l3.2,1.6" stroke="#4e4e20" stroke-width=".8"/><path d="M37.0,57.9 l5.9,1.2" stroke="#4e4e20" stroke-width=".8"/><path d="M53.4,320.3 l2.4,1.8" stroke="#4e4e20" stroke-width=".8"/><path d="M34.3,90.7 l2.7,0.8" stroke="#4e4e20" stroke-width=".8"/><path d="M73.0,272.6 l5.5,1.3" stroke="#4e4e20" stroke-width=".8"/><path d="M60.6,118.7 l3.8,2.5" stroke="#4e4e20" stroke-width=".8"/><path d="M29.2,335.5 l1.5,1.3" stroke="#4e4e20" stroke-width=".8"/><path d="M73.8,180.9 l2.7,3.4" stroke="#4e4e20" stroke-width=".8"/><path d="M22.5,220.9 l4.4,2.2" stroke="#4e4e20" stroke-width=".8"/><path d="M62.1,141.8 l3.3,2.4" stroke="#4e4e20" stroke-width=".8"/><path d="M59.2,117.9 l3.8,2.5" stroke="#4e4e20" stroke-width=".8"/><path d="M21.5,215.2 l2.1,2.3" stroke="#4e4e20" stroke-width=".8"/><path d="M42.3,251.7 l3.5,2.1" stroke="#4e4e20" stroke-width=".8"/><path d="M21.4,57.6 l4.8,3.1" stroke="#4e4e20" stroke-width=".8"/><path d="M46.5,186.7 l4.9,1.9" stroke="#4e4e20" stroke-width=".8"/><path d="M17.3,285.3 l3.1,2.3" stroke="#4e4e20" stroke-width=".8"/><path d="M71.7,309.5 l5.3,1.2" stroke="#4e4e20" stroke-width=".8"/><path d="M34.6,288.8 l5.1,1.5" stroke="#4e4e20" stroke-width=".8"/><path d="M15.8,94.2 l2.2,1.0" stroke="#4e4e20" stroke-width=".8"/><path d="M69.7,184.7 l3.7,1.0" stroke="#4e4e20" stroke-width=".8"/><path d="M35.8,344.0 l4.2,2.4" stroke="#4e4e20" stroke-width=".8"/><path d="M42.7,277.4 l4.8,1.5" stroke="#4e4e20" stroke-width=".8"/><path d="M59.5,132.9 l3.8,1.5" stroke="#4e4e20" stroke-width=".8"/><path d="M33.8,123.9 l3.4,0.7" stroke="#4e4e20" stroke-width=".8"/><path d="M19.7,201.1 l2.1,0.7" stroke="#4e4e20" stroke-width=".8"/><path d="M62.6,102.0 l3.1,1.2" stroke="#4e4e20" stroke-width=".8"/><path d="M72.2,40.6 l3.2,3.3" stroke="#4e4e20" stroke-width=".8"/><path d="M19.7,151.8 l4.2,3.1" stroke="#4e4e20" stroke-width=".8"/><path d="M33.8,24.7 l3.4,1.7" stroke="#4e4e20" stroke-width=".8"/><path d="M62.1,108.9 l2.9,2.2" stroke="#4e4e20" stroke-width=".8"/><path d="M70.3,128.0 l2.9,2.0" stroke="#4e4e20" stroke-width=".8"/><path d="M79.8,74.2 l4.5,3.8" stroke="#4e4e20" stroke-width=".8"/><path d="M33.9,233.0 l3.2,0.8" stroke="#4e4e20" stroke-width=".8"/><path d="M65.8,137.1 l3.5,2.1" stroke="#4e4e20" stroke-width=".8"/><path d="M77.8,263.6 l1.7,1.2" stroke="#4e4e20" stroke-width=".8"/><path d="M41.4,164.8 l4.7,2.5" stroke="#4e4e20" stroke-width=".8"/><path d="M42.3,308.3 l3.2,1.9" stroke="#4e4e20" stroke-width=".8"/><path d="M45.5,286.3 l3.5,3.1" stroke="#4e4e20" stroke-width=".8"/><path d="M36.3,23.6 l3.9,2.6" stroke="#4e4e20" stroke-width=".8"/><path d="M66.8,267.9 l2.3,0.9" stroke="#4e4e20" stroke-width=".8"/><path d="M9.4,283.9 l2.3,0.6" stroke="#4e4e20" stroke-width=".8"/><path d="M65.5,199.1 l1.7,1.4" stroke="#4e4e20" stroke-width=".8"/><path d="M62.0,171.7 l1.7,1.4" stroke="#4e4e20" stroke-width=".8"/><path d="M37.7,205.6 l4.3,4.2" stroke="#4e4e20" stroke-width=".8"/><path d="M75.4,58.8 l2.8,1.8" stroke="#4e4e20" stroke-width=".8"/><path d="M3.5,341.2 l2.9,1.2" stroke="#4e4e20" stroke-width=".8"/><path d="M29.0,95.4 l4.5,3.0" stroke="#4e4e20" stroke-width=".8"/><path d="M45.4,150.8 l2.0,0.9" stroke="#4e4e20" stroke-width=".8"/><path d="M74.9,278.7 l5.0,2.0" stroke="#4e4e20" stroke-width=".8"/><path d="M19.8,27.5 l3.7,1.8" stroke="#4e4e20" stroke-width=".8"/><path d="M41.5,173.8 l3.9,1.9" stroke="#4e4e20" stroke-width=".8"/><path d="M69.5,77.1 l4.7,3.2" stroke="#4e4e20" stroke-width=".8"/><path d="M7.2,115.3 l3.7,1.9" stroke="#4e4e20" stroke-width=".8"/><path d="M49.9,118.4 l2.2,2.1" stroke="#4e4e20" stroke-width=".8"/><path d="M27.2,248.0 l4.3,3.0" stroke="#4e4e20" stroke-width=".8"/><path d="M40.7,323.2 l2.6,2.7" stroke="#4e4e20" stroke-width=".8"/><path d="M7.8,155.3 l4.4,1.1" stroke="#4e4e20" stroke-width=".8"/><path d="M74.6,34.1 l4.2,1.4" stroke="#4e4e20" stroke-width=".8"/><path d="M79.6,198.0 l4.4,2.7" stroke="#4e4e20" stroke-width=".8"/><path d="M58.9,236.1 l3.0,1.1" stroke="#4e4e20" stroke-width=".8"/><path d="M72.6,58.8 l5.3,1.9" stroke="#4e4e20" stroke-width=".8"/><path d="M11.4,41.9 l3.3,3.9" stroke="#4e4e20" stroke-width=".8"/><path d="M37.4,230.7 l2.0,2.2" stroke="#4e4e20" stroke-width=".8"/><path d="M59.9,61.9 l1.7,1.4" stroke="#4e4e20" stroke-width=".8"/><path d="M6.5,290.1 l3.0,1.1" stroke="#4e4e20" stroke-width=".8"/><path d="M51.3,116.8 l4.0,1.3" stroke="#4e4e20" stroke-width=".8"/><path d="M78.7,118.7 l5.1,1.6" stroke="#4e4e20" stroke-width=".8"/><path d="M69.3,338.3 l3.5,0.8" stroke="#4e4e20" stroke-width=".8"/><path d="M34.5,224.7 l2.4,1.6" stroke="#4e4e20" stroke-width=".8"/><path d="M10.8,165.6 l4.3,2.4" stroke="#4e4e20" stroke-width=".8"/><path d="M59.3,48.3 l5.1,1.5" stroke="#4e4e20" stroke-width=".8"/><path d="M79.6,343.7 l4.9,3.1" stroke="#4e4e20" stroke-width=".8"/><path d="M27.1,126.6 l4.3,2.6" stroke="#4e4e20" stroke-width=".8"/><path d="M80.2,41.2 l2.7,2.8" stroke="#4e4e20" stroke-width=".8"/><path d="M52.6,191.1 l2.3,0.7" stroke="#4e4e20" stroke-width=".8"/><path d="M25.5,309.2 l5.0,1.9" stroke="#4e4e20" stroke-width=".8"/><path d="M79.7,20.9 l2.8,3.4" stroke="#4e4e20" stroke-width=".8"/><path d="M31.6,326.4 l4.5,1.1" stroke="#4e4e20" stroke-width=".8"/><path d="M30.7,160.6 l2.2,2.0" stroke="#4e4e20" stroke-width=".8"/><path d="M17.8,273.9 l3.1,0.8" stroke="#4e4e20" stroke-width=".8"/><path d="M49.4,42.0 l3.1,2.9" stroke="#4e4e20" stroke-width=".8"/><path d="M52.4,164.6 l1.8,1.1" stroke="#4e4e20" stroke-width=".8"/><path d="M11.1,226.7 l2.1,1.4" stroke="#4e4e20" stroke-width=".8"/><path d="M32.3,135.5 l4.4,1.4" stroke="#4e4e20" stroke-width=".8"/><path d="M17.1,325.4 l2.3,2.4" stroke="#4e4e20" stroke-width=".8"/><path d="M75.5,170.9 l2.5,0.7" stroke="#4e4e20" stroke-width=".8"/><path d="M76.0,49.2 l3.3,2.2" stroke="#4e4e20" stroke-width=".8"/><path d="M12.8,166.7 l2.2,1.4" stroke="#4e4e20" stroke-width=".8"/><path d="M45.1,132.9 l2.5,1.3" stroke="#4e4e20" stroke-width=".8"/><path d="M19.9,52.6 l2.0,2.1" stroke="#4e4e20" stroke-width=".8"/><path d="M44.6,308.4 l1.3,1.6" stroke="#4e4e20" stroke-width=".8"/><path d="M43.5,275.0 l3.3,2.7" stroke="#4e4e20" stroke-width=".8"/><path d="M22.0,261.3 l2.4,1.0" stroke="#4e4e20" stroke-width=".8"/><path d="M5.6,141.7 l3.7,1.6" stroke="#4e4e20" stroke-width=".8"/><path d="M76.9,38.2 l4.0,1.5" stroke="#4e4e20" stroke-width=".8"/><path d="M52.4,272.6 l4.7,1.2" stroke="#4e4e20" stroke-width=".8"/><path d="M23.4,210.7 l5.8,1.3" stroke="#4e4e20" stroke-width=".8"/><path d="M54.3,241.8 l4.8,2.2" stroke="#4e4e20" stroke-width=".8"/><path d="M70.3,164.7 l5.6,1.2" stroke="#4e4e20" stroke-width=".8"/><path d="M81.0,148.0 l3.5,0.9" stroke="#4e4e20" stroke-width=".8"/><path d="M23.3,255.8 l4.5,1.4" stroke="#4e4e20" stroke-width=".8"/><path d="M31.6,57.0 l2.6,1.0" stroke="#4e4e20" stroke-width=".8"/><path d="M30.5,337.0 l4.4,4.1" stroke="#4e4e20" stroke-width=".8"/><path d="M42.8,176.6 l3.4,3.8" stroke="#4e4e20" stroke-width=".8"/><path d="M65.4,223.2 l2.2,1.7" stroke="#4e4e20" stroke-width=".8"/><path d="M73.2,273.5 l1.8,1.5" stroke="#4e4e20" stroke-width=".8"/><path d="M32.0,64.3 l4.6,3.6" stroke="#4e4e20" stroke-width=".8"/><path d="M64.9,55.2 l3.5,4.0" stroke="#4e4e20" stroke-width=".8"/><path d="M78.1,259.6 l3.9,3.7" stroke="#4e4e20" stroke-width=".8"/><path d="M52.0,155.8 l3.9,3.6" stroke="#4e4e20" stroke-width=".8"/><path d="M75.3,110.2 l4.9,3.2" stroke="#4e4e20" stroke-width=".8"/><path d="M81.5,48.8 l4.3,4.0" stroke="#4e4e20" stroke-width=".8"/><path d="M23.9,290.9 l2.8,1.0" stroke="#4e4e20" stroke-width=".8"/><path d="M41.0,89.3 l2.7,2.9" stroke="#4e4e20" stroke-width=".8"/><path d="M59.9,248.0 l2.6,2.4" stroke="#4e4e20" stroke-width=".8"/><path d="M68.9,238.8 l4.1,4.0" stroke="#4e4e20" stroke-width=".8"/><path d="M36.7,39.2 l3.3,3.3" stroke="#4e4e20" stroke-width=".8"/><path d="M31.2,209.3 l3.9,3.7" stroke="#4e4e20" stroke-width=".8"/><path d="M3.4,173.8 l2.0,0.6" stroke="#4e4e20" stroke-width=".8"/><path d="M70.4,150.3 l3.8,2.2" stroke="#4e4e20" stroke-width=".8"/><path d="M30.8,81.6 l2.4,2.4" stroke="#4e4e20" stroke-width=".8"/><path d="M54.4,107.9 l2.2,0.9" stroke="#4e4e20" stroke-width=".8"/><path d="M61.2,158.1 l3.4,3.2" stroke="#4e4e20" stroke-width=".8"/><path d="M13.0,238.8 l1.5,1.5" stroke="#4e4e20" stroke-width=".8"/><path d="M18.3,100.9 l5.2,2.6" stroke="#4e4e20" stroke-width=".8"/><path d="M21.6,308.1 l3.0,3.3" stroke="#4e4e20" stroke-width=".8"/><path d="M35.7,177.4 l4.9,3.1" stroke="#4e4e20" stroke-width=".8"/><path d="M85.0,73.5 l5.1,1.6" stroke="#4e4e20" stroke-width=".8"/><path d="M46.8,10.1 l1.8,2.0" stroke="#4e4e20" stroke-width=".8"/><path d="M40.7,281.1 l2.7,1.3" stroke="#4e4e20" stroke-width=".8"/><path d="M11.4,195.1 l4.6,2.9" stroke="#4e4e20" stroke-width=".8"/><path d="M34.3,321.1 l4.4,3.4" stroke="#4e4e20" stroke-width=".8"/><path d="M9.3,219.0 l2.4,2.9" stroke="#4e4e20" stroke-width=".8"/><path d="M33.0,231.5 l4.1,2.0" stroke="#4e4e20" stroke-width=".8"/><path d="M46.3,236.6 l4.8,2.9" stroke="#4e4e20" stroke-width=".8"/><path d="M33.2,337.0 l1.6,1.6" stroke="#4e4e20" stroke-width=".8"/><path d="M59.7,196.7 l2.8,2.5" stroke="#4e4e20" stroke-width=".8"/><path d="M77.0,254.2 l4.9,1.1" stroke="#4e4e20" stroke-width=".8"/><path d="M30.0,55.9 l3.9,4.3" stroke="#4e4e20" stroke-width=".8"/><path d="M15.0,206.8 l4.2,1.0" stroke="#4e4e20" stroke-width=".8"/><path d="M35.6,260.4 l4.2,1.8" stroke="#4e4e20" stroke-width=".8"/><path d="M66.3,107.5 l3.7,2.0" stroke="#4e4e20" stroke-width=".8"/><path d="M84.2,227.3 l4.1,3.3" stroke="#4e4e20" stroke-width=".8"/><path d="M34.6,332.6 l3.8,3.1" stroke="#4e4e20" stroke-width=".8"/><path d="M26.0,64.2 l3.1,3.0" stroke="#4e4e20" stroke-width=".8"/><path d="M68.9,126.3 l2.2,1.4" stroke="#4e4e20" stroke-width=".8"/><path d="M75.8,64.3 l4.7,1.6" stroke="#4e4e20" stroke-width=".8"/><path d="M28.9,27.9 l2.8,1.4" stroke="#4e4e20" stroke-width=".8"/><path d="M83.3,332.3 l2.5,1.1" stroke="#4e4e20" stroke-width=".8"/><path d="M81.3,76.1 l2.9,1.6" stroke="#4e4e20" stroke-width=".8"/><path d="M12.0,97.2 l3.2,1.6" stroke="#4e4e20" stroke-width=".8"/><path d="M83.0,99.4 l1.9,2.1" stroke="#4e4e20" stroke-width=".8"/><path d="M40.4,290.4 l3.3,3.1" stroke="#4e4e20" stroke-width=".8"/><path d="M38.9,135.0 q6,3 10,9" fill="none" stroke="#3e3e16" stroke-width="1"/><path d="M65.4,208.2 q6,3 10,9" fill="none" stroke="#3e3e16" stroke-width="1"/><path d="M53.5,254.2 q6,3 10,9" fill="none" stroke="#3e3e16" stroke-width="1"/><path d="M65.2,163.3 q6,3 10,9" fill="none" stroke="#3e3e16" stroke-width="1"/><path d="M41.8,311.0 q6,3 10,9" fill="none" stroke="#3e3e16" stroke-width="1"/><path d="M51.8,166.3 q6,3 10,9" fill="none" stroke="#3e3e16" stroke-width="1"/><path d="M57.8,159.7 q6,3 10,9" fill="none" stroke="#3e3e16" stroke-width="1"/><path d="M66.3,109.5 q6,3 10,9" fill="none" stroke="#3e3e16" stroke-width="1"/><path d="M69.6,230.3 q6,3 10,9" fill="none" stroke="#3e3e16" stroke-width="1"/><path d="M41.2,316.2 q6,3 10,9" fill="none" stroke="#3e3e16" stroke-width="1"/><path d="M35.9,156.0 q6,3 10,9" fill="none" stroke="#3e3e16" stroke-width="1"/><path d="M24.2,226.2 q6,3 10,9" fill="none" stroke="#3e3e16" stroke-width="1"/><path d="M65.2,256.0 q6,3 10,9" fill="none" stroke="#3e3e16" stroke-width="1"/><path d="M44.8,285.8 q6,3 10,9" fill="none" stroke="#3e3e16" stroke-width="1"/><path d="M26.7,170.6 q6,3 10,9" fill="none" stroke="#3e3e16" stroke-width="1"/><path d="M58.7,322.5 q6,3 10,9" fill="none" stroke="#3e3e16" stroke-width="1"/><path d="M58.0,259.2 q6,3 10,9" fill="none" stroke="#3e3e16" stroke-width="1"/><path d="M66.5,190.7 q6,3 10,9" fill="none" stroke="#3e3e16" stroke-width="1"/><path d="M76.4,270.8 q6,3 10,9" fill="none" stroke="#3e3e16" stroke-width="1"/><path d="M40.5,190.3 q6,3 10,9" fill="none" stroke="#3e3e16" stroke-width="1"/><path d="M68.3,180.4 q6,3 10,9" fill="none" stroke="#3e3e16" stroke-width="1"/><path d="M31.1,300.5 q6,3 10,9" fill="none" stroke="#3e3e16" stroke-width="1"/><path d="M51.9,219.9 q6,3 10,9" fill="none" stroke="#3e3e16" stroke-width="1"/><path d="M60.2,307.3 q6,3 10,9" fill="none" stroke="#3e3e16" stroke-width="1"/><path d="M28.0,177.9 q6,3 10,9" fill="none" stroke="#3e3e16" stroke-width="1"/><path d="M24.0,195.0 q6,3 10,9" fill="none" stroke="#3e3e16" stroke-width="1"/><path d="M50.1,295.9 q6,3 10,9" fill="none" stroke="#3e3e16" stroke-width="1"/><path d="M60.1,232.9 q6,3 10,9" fill="none" stroke="#3e3e16" stroke-width="1"/><path d="M44.2,232.0 q6,3 10,9" fill="none" stroke="#3e3e16" stroke-width="1"/><path d="M36.4,294.3 q6,3 10,9" fill="none" stroke="#3e3e16" stroke-width="1"/><path d="M67.3,292.8 q6,3 10,9" fill="none" stroke="#3e3e16" stroke-width="1"/><path d="M29.1,254.5 q6,3 10,9" fill="none" stroke="#3e3e16" stroke-width="1"/><path d="M65.2,215.1 q6,3 10,9" fill="none" stroke="#3e3e16" stroke-width="1"/><path d="M73.9,306.7 q6,3 10,9" fill="none" stroke="#3e3e16" stroke-width="1"/><path d="M64.6,288.8 q6,3 10,9" fill="none" stroke="#3e3e16" stroke-width="1"/><path d="M58.9,302.1 q6,3 10,9" fill="none" stroke="#3e3e16" stroke-width="1"/><path d="M27.9,261.9 q6,3 10,9" fill="none" stroke="#3e3e16" stroke-width="1"/><path d="M62.2,240.8 q6,3 10,9" fill="none" stroke="#3e3e16" stroke-width="1"/><path d="M36.5,115.5 q6,3 10,9" fill="none" stroke="#3e3e16" stroke-width="1"/><path d="M56.2,289.6 q6,3 10,9" fill="none" stroke="#3e3e16" stroke-width="1"/><path d="M36.4,149.0 q6,3 10,9" fill="none" stroke="#3e3e16" stroke-width="1"/><path d="M33.4,121.6 q6,3 10,9" fill="none" stroke="#3e3e16" stroke-width="1"/><path d="M60.6,324.2 q6,3 10,9" fill="none" stroke="#3e3e16" stroke-width="1"/><path d="M68.1,182.7 q6,3 10,9" fill="none" stroke="#3e3e16" stroke-width="1"/><path d="M62.0,116.6 q6,3 10,9" fill="none" stroke="#3e3e16" stroke-width="1"/><path d="M70.3,174.8 q6,3 10,9" fill="none" stroke="#3e3e16" stroke-width="1"/><path d="M20.2,244.7 q6,3 10,9" fill="none" stroke="#3e3e16" stroke-width="1"/><path d="M28.3,163.3 q6,3 10,9" fill="none" stroke="#3e3e16" stroke-width="1"/><path d="M23.5,202.5 q6,3 10,9" fill="none" stroke="#3e3e16" stroke-width="1"/><path d="M53.3,285.7 q6,3 10,9" fill="none" stroke="#3e3e16" stroke-width="1"/><path d="M22.4,290.3 q6,3 10,9" fill="none" stroke="#3e3e16" stroke-width="1"/><path d="M26.6,151.6 q6,3 10,9" fill="none" stroke="#3e3e16" stroke-width="1"/><path d="M57.8,178.2 q6,3 10,9" fill="none" stroke="#3e3e16" stroke-width="1"/><path d="M39.9,230.7 q6,3 10,9" fill="none" stroke="#3e3e16" stroke-width="1"/><path d="M33.1,282.5 q6,3 10,9" fill="none" stroke="#3e3e16" stroke-width="1"/><path d="M32.5,293.1 q6,3 10,9" fill="none" stroke="#3e3e16" stroke-width="1"/><path d="M68.5,223.5 q6,3 10,9" fill="none" stroke="#3e3e16" stroke-width="1"/><path d="M21.8,279.0 q6,3 10,9" fill="none" stroke="#3e3e16" stroke-width="1"/><path d="M21.7,216.1 q6,3 10,9" fill="none" stroke="#3e3e16" stroke-width="1"/><path d="M45.4,114.5 q6,3 10,9" fill="none" stroke="#3e3e16" stroke-width="1"/><path d="M6,120 Q12,175 22,205 Q30,232 40,258" fill="none" stroke="#e8e8a8" stroke-width="2.2" opacity=".75"/><path d="M14,150 Q30,160 46,185" fill="none" stroke="#c8c888" stroke-width="1.5" opacity=".6"/><path d="M36,255 Q38,300 35,338" fill="none" stroke="#4a4a1c" stroke-width="1"/><path d="M32,262.0 L36,266.0 L40,262.0" fill="none" stroke="#555526" stroke-width=".7"/><path d="M32,270.5 L36,274.5 L40,270.5" fill="none" stroke="#555526" stroke-width=".7"/><path d="M32,279.0 L36,283.0 L40,279.0" fill="none" stroke="#555526" stroke-width=".7"/><path d="M32,287.5 L36,291.5 L40,287.5" fill="none" stroke="#555526" stroke-width=".7"/><path d="M32,296.0 L36,300.0 L40,296.0" fill="none" stroke="#555526" stroke-width=".7"/><path d="M32,304.5 L36,308.5 L40,304.5" fill="none" stroke="#555526" stroke-width=".7"/><path d="M32,313.0 L36,317.0 L40,313.0" fill="none" stroke="#555526" stroke-width=".7"/><path d="M32,321.5 L36,325.5 L40,321.5" fill="none" stroke="#555526" stroke-width=".7"/><path d="M32,330.0 L36,334.0 L40,330.0" fill="none" stroke="#555526" stroke-width=".7"/><path d="M47,255 Q49,300 46,338" fill="none" stroke="#4a4a1c" stroke-width="1"/><path d="M43,262.0 L47,266.0 L51,262.0" fill="none" stroke="#555526" stroke-width=".7"/><path d="M43,270.5 L47,274.5 L51,270.5" fill="none" stroke="#555526" stroke-width=".7"/><path d="M43,279.0 L47,283.0 L51,279.0" fill="none" stroke="#555526" stroke-width=".7"/><path d="M43,287.5 L47,291.5 L51,287.5" fill="none" stroke="#555526" stroke-width=".7"/><path d="M43,296.0 L47,300.0 L51,296.0" fill="none" stroke="#555526" stroke-width=".7"/><path d="M43,304.5 L47,308.5 L51,304.5" fill="none" stroke="#555526" stroke-width=".7"/><path d="M43,313.0 L47,317.0 L51,313.0" fill="none" stroke="#555526" stroke-width=".7"/><path d="M43,321.5 L47,325.5 L51,321.5" fill="none" stroke="#555526" stroke-width=".7"/><path d="M43,330.0 L47,334.0 L51,330.0" fill="none" stroke="#555526" stroke-width=".7"/><path d="M58,255 Q60,300 57,338" fill="none" stroke="#4a4a1c" stroke-width="1"/><path d="M54,262.0 L58,266.0 L62,262.0" fill="none" stroke="#555526" stroke-width=".7"/><path d="M54,270.5 L58,274.5 L62,270.5" fill="none" stroke="#555526" stroke-width=".7"/><path d="M54,279.0 L58,283.0 L62,279.0" fill="none" stroke="#555526" stroke-width=".7"/><path d="M54,287.5 L58,291.5 L62,287.5" fill="none" stroke="#555526" stroke-width=".7"/><path d="M54,296.0 L58,300.0 L62,296.0" fill="none" stroke="#555526" stroke-width=".7"/><path d="M54,304.5 L58,308.5 L62,304.5" fill="none" stroke="#555526" stroke-width=".7"/><path d="M54,313.0 L58,317.0 L62,313.0" fill="none" stroke="#555526" stroke-width=".7"/><path d="M54,321.5 L58,325.5 L62,321.5" fill="none" stroke="#555526" stroke-width=".7"/><path d="M54,330.0 L58,334.0 L62,330.0" fill="none" stroke="#555526" stroke-width=".7"/><path d="M69,255 Q71,300 68,338" fill="none" stroke="#4a4a1c" stroke-width="1"/><path d="M65,262.0 L69,266.0 L73,262.0" fill="none" stroke="#555526" stroke-width=".7"/><path d="M65,270.5 L69,274.5 L73,270.5" fill="none" stroke="#555526" stroke-width=".7"/><path d="M65,279.0 L69,283.0 L73,279.0" fill="none" stroke="#555526" stroke-width=".7"/><path d="M65,287.5 L69,291.5 L73,287.5" fill="none" stroke="#555526" stroke-width=".7"/><path d="M65,296.0 L69,300.0 L73,296.0" fill="none" stroke="#555526" stroke-width=".7"/><path d="M65,304.5 L69,308.5 L73,304.5" fill="none" stroke="#555526" stroke-width=".7"/><path d="M65,313.0 L69,317.0 L73,313.0" fill="none" stroke="#555526" stroke-width=".7"/><path d="M65,321.5 L69,325.5 L73,321.5" fill="none" stroke="#555526" stroke-width=".7"/><path d="M65,330.0 L69,334.0 L73,330.0" fill="none" stroke="#555526" stroke-width=".7"/><path d="M80,255 Q82,300 79,338" fill="none" stroke="#4a4a1c" stroke-width="1"/><path d="M76,262.0 L80,266.0 L84,262.0" fill="none" stroke="#555526" stroke-width=".7"/><path d="M76,270.5 L80,274.5 L84,270.5" fill="none" stroke="#555526" stroke-width=".7"/><path d="M76,279.0 L80,283.0 L84,279.0" fill="none" stroke="#555526" stroke-width=".7"/><path d="M76,287.5 L80,291.5 L84,287.5" fill="none" stroke="#555526" stroke-width=".7"/><path d="M76,296.0 L80,300.0 L84,296.0" fill="none" stroke="#555526" stroke-width=".7"/><path d="M76,304.5 L80,308.5 L84,304.5" fill="none" stroke="#555526" stroke-width=".7"/><path d="M76,313.0 L80,317.0 L84,313.0" fill="none" stroke="#555526" stroke-width=".7"/><path d="M76,321.5 L80,325.5 L84,321.5" fill="none" stroke="#555526" stroke-width=".7"/><path d="M76,330.0 L80,334.0 L84,330.0" fill="none" stroke="#555526" stroke-width=".7"/><path d="M44,215 Q34,270 22,345" fill="none" stroke="#3a3a14" stroke-width="2.6" stroke-dasharray="1.5 1"/><circle cx="12" cy="235" r="8" fill="#9a9a56" stroke="#4a4a1c" stroke-width=".9"/><circle cx="13" cy="235" r="2.6" fill="#fdfcc0" stroke="#4a4a1c" stroke-width=".5"/><circle cx="14" cy="262" r="9" fill="#9a9a56" stroke="#4a4a1c" stroke-width=".9"/><circle cx="15" cy="262" r="2.6" fill="#fdfcc0" stroke="#4a4a1c" stroke-width=".5"/><circle cx="16" cy="300" r="10" fill="#9a9a56" stroke="#4a4a1c" stroke-width=".9"/><circle cx="17" cy="300" r="2.6" fill="#fdfcc0" stroke="#4a4a1c" stroke-width=".5"/><circle cx="13" cy="330" r="9" fill="#9a9a56" stroke="#4a4a1c" stroke-width=".9"/><circle cx="14" cy="330" r="2.6" fill="#fdfcc0" stroke="#4a4a1c" stroke-width=".5"/><circle cx="24" cy="350" r="9" fill="#9a9a56" stroke="#4a4a1c" stroke-width=".9"/><circle cx="25" cy="350" r="2.6" fill="#fdfcc0" stroke="#4a4a1c" stroke-width=".5"/><ellipse cx="52" cy="335" rx="14" ry="12" transform="rotate(0 52 335)" fill="url(#hl)" stroke="#4a4a1c" stroke-width=".8" opacity="1"/><ellipse cx="32" cy="337" rx="8" ry="7" transform="rotate(0 32 337)" fill="url(#hl)" stroke="#4a4a1c" stroke-width=".8" opacity="1"/><ellipse cx="72" cy="357" rx="13" ry="16" transform="rotate(10 72 357)" fill="url(#hl)" stroke="#4a4a1c" stroke-width=".8" opacity="1"/><ellipse cx="20" cy="372" rx="14" ry="12" transform="rotate(0 20 372)" fill="url(#hl)" stroke="#4a4a1c" stroke-width=".8" opacity="1"/><ellipse cx="44" cy="387" rx="10" ry="9" transform="rotate(0 44 387)" fill="url(#hl)" stroke="#4a4a1c" stroke-width=".8" opacity="1"/><ellipse cx="67" cy="397" rx="14" ry="10" transform="rotate(-10 67 397)" fill="url(#hl)" stroke="#4a4a1c" stroke-width=".8" opacity="1"/><ellipse cx="7" cy="382" rx="7" ry="10" transform="rotate(0 7 382)" fill="url(#hl)" stroke="#4a4a1c" stroke-width=".8" opacity="1"/><ellipse cx="57" cy="415" rx="9" ry="7" transform="rotate(0 57 415)" fill="url(#hl)" stroke="#4a4a1c" stroke-width=".8" opacity="1"/><ellipse cx="32" cy="407" rx="8" ry="7" transform="rotate(0 32 407)" fill="url(#hl)" stroke="#4a4a1c" stroke-width=".8" opacity="1"/><circle cx="20" cy="342" r="2.2" fill="#fdfcc0" stroke="#4a4a1c" stroke-width=".6"/><circle cx="39" cy="355" r="2.4" fill="#fdfcc0" stroke="#4a4a1c" stroke-width=".6"/><circle cx="58" cy="337" r="2" fill="#fdfcc0" stroke="#4a4a1c" stroke-width=".6"/><circle cx="12" cy="362" r="2" fill="#fdfcc0" stroke="#4a4a1c" stroke-width=".6"/><circle cx="27" cy="392" r="2.2" fill="#fdfcc0" stroke="#4a4a1c" stroke-width=".6"/><circle cx="43" cy="372" r="1.8" fill="#fdfcc0" stroke="#4a4a1c" stroke-width=".6"/><circle cx="44.0" cy="408.0" r="1.7" fill="#b8b870" stroke="#3a3a14" stroke-width=".6"/><circle cx="46.6" cy="411.6" r="1.7" fill="#b8b870" stroke="#3a3a14" stroke-width=".6"/><circle cx="49.2" cy="415.2" r="1.7" fill="#b8b870" stroke="#3a3a14" stroke-width=".6"/><circle cx="51.8" cy="418.8" r="1.7" fill="#b8b870" stroke="#3a3a14" stroke-width=".6"/><circle cx="54.4" cy="422.4" r="1.7" fill="#b8b870" stroke="#3a3a14" stroke-width=".6"/><circle cx="57.0" cy="426.0" r="1.7" fill="#b8b870" stroke="#3a3a14" stroke-width=".6"/><circle cx="59.6" cy="429.6" r="1.7" fill="#b8b870" stroke="#3a3a14" stroke-width=".6"/><circle cx="62.2" cy="433.2" r="1.7" fill="#b8b870" stroke="#3a3a14" stroke-width=".6"/><circle cx="64.8" cy="436.8" r="1.7" fill="#b8b870" stroke="#3a3a14" stroke-width=".6"/><circle cx="67.4" cy="440.4" r="1.7" fill="#b8b870" stroke="#3a3a14" stroke-width=".6"/><path d="M56.0,403.0 q2,-2 4,0" fill="none" stroke="#4e4e20" stroke-width=".7"/><path d="M52.4,377.0 q2,-2 4,0" fill="none" stroke="#4e4e20" stroke-width=".7"/><path d="M46.5,392.1 q2,-2 4,0" fill="none" stroke="#4e4e20" stroke-width=".7"/><path d="M23.3,414.4 q2,-2 4,0" fill="none" stroke="#4e4e20" stroke-width=".7"/><path d="M85.7,409.3 q2,-2 4,0" fill="none" stroke="#4e4e20" stroke-width=".7"/><path d="M82.9,371.4 q2,-2 4,0" fill="none" stroke="#4e4e20" stroke-width=".7"/><path d="M84.9,350.7 q2,-2 4,0" fill="none" stroke="#4e4e20" stroke-width=".7"/><path d="M43.7,355.7 q2,-2 4,0" fill="none" stroke="#4e4e20" stroke-width=".7"/><path d="M41.8,399.6 q2,-2 4,0" fill="none" stroke="#4e4e20" stroke-width=".7"/><path d="M62.4,381.4 q2,-2 4,0" fill="none" stroke="#4e4e20" stroke-width=".7"/><path d="M32.7,360.2 q2,-2 4,0" fill="none" stroke="#4e4e20" stroke-width=".7"/><path d="M37.6,367.6 q2,-2 4,0" fill="none" stroke="#4e4e20" stroke-width=".7"/><path d="M20.7,403.9 q2,-2 4,0" fill="none" stroke="#4e4e20" stroke-width=".7"/><path d="M46.8,380.1 q2,-2 4,0" fill="none" stroke="#4e4e20" stroke-width=".7"/><path d="M21.0,401.3 q2,-2 4,0" fill="none" stroke="#4e4e20" stroke-width=".7"/><path d="M20.9,366.2 q2,-2 4,0" fill="none" stroke="#4e4e20" stroke-width=".7"/><path d="M50.4,401.1 q2,-2 4,0" fill="none" stroke="#4e4e20" stroke-width=".7"/><path d="M83.8,404.8 q2,-2 4,0" fill="none" stroke="#4e4e20" stroke-width=".7"/><path d="M81.8,418.6 q2,-2 4,0" fill="none" stroke="#4e4e20" stroke-width=".7"/><path d="M63.5,402.6 q2,-2 4,0" fill="none" stroke="#4e4e20" stroke-width=".7"/><path d="M10.1,361.5 q2,-2 4,0" fill="none" stroke="#4e4e20" stroke-width=".7"/><path d="M6.1,414.1 q2,-2 4,0" fill="none" stroke="#4e4e20" stroke-width=".7"/><path d="M63.5,395.4 q2,-2 4,0" fill="none" stroke="#4e4e20" stroke-width=".7"/><path d="M26.4,373.4 q2,-2 4,0" fill="none" stroke="#4e4e20" stroke-width=".7"/><path d="M18.3,395.6 q2,-2 4,0" fill="none" stroke="#4e4e20" stroke-width=".7"/><path d="M85.3,369.5 q2,-2 4,0" fill="none" stroke="#4e4e20" stroke-width=".7"/><path d="M8.6,359.0 q2,-2 4,0" fill="none" stroke="#4e4e20" stroke-width=".7"/><path d="M33.8,416.9 q2,-2 4,0" fill="none" stroke="#4e4e20" stroke-width=".7"/><path d="M70.2,381.4 q2,-2 4,0" fill="none" stroke="#4e4e20" stroke-width=".7"/><path d="M13.3,353.5 q2,-2 4,0" fill="none" stroke="#4e4e20" stroke-width=".7"/><path d="M17.5,407.2 q2,-2 4,0" fill="none" stroke="#4e4e20" stroke-width=".7"/><path d="M43.2,424.2 q2,-2 4,0" fill="none" stroke="#4e4e20" stroke-width=".7"/><path d="M78.8,408.6 q2,-2 4,0" fill="none" stroke="#4e4e20" stroke-width=".7"/><path d="M43.6,410.8 q2,-2 4,0" fill="none" stroke="#4e4e20" stroke-width=".7"/><path d="M15.4,353.7 q2,-2 4,0" fill="none" stroke="#4e4e20" stroke-width=".7"/><path d="M50.6,385.6 q2,-2 4,0" fill="none" stroke="#4e4e20" stroke-width=".7"/><path d="M22.0,365.2 q2,-2 4,0" fill="none" stroke="#4e4e20" stroke-width=".7"/><path d="M6.7,417.7 q2,-2 4,0" fill="none" stroke="#4e4e20" stroke-width=".7"/><path d="M62.5,420.6 q2,-2 4,0" fill="none" stroke="#4e4e20" stroke-width=".7"/><path d="M84.4,379.9 q2,-2 4,0" fill="none" stroke="#4e4e20" stroke-width=".7"/><path d="M64.3,375.7 q2,-2 4,0" fill="none" stroke="#4e4e20" stroke-width=".7"/><path d="M70.8,412.3 q2,-2 4,0" fill="none" stroke="#4e4e20" stroke-width=".7"/><path d="M15.8,346.0 q2,-2 4,0" fill="none" stroke="#4e4e20" stroke-width=".7"/><path d="M22.3,391.8 q2,-2 4,0" fill="none" stroke="#4e4e20" stroke-width=".7"/><path d="M35.7,345.7 q2,-2 4,0" fill="none" stroke="#4e4e20" stroke-width=".7"/><path d="M72.3,407.9 q2,-2 4,0" fill="none" stroke="#4e4e20" stroke-width=".7"/><path d="M42.6,348.5 q2,-2 4,0" fill="none" stroke="#4e4e20" stroke-width=".7"/><path d="M77.0,387.7 q2,-2 4,0" fill="none" stroke="#4e4e20" stroke-width=".7"/><path d="M10.7,370.9 q2,-2 4,0" fill="none" stroke="#4e4e20" stroke-width=".7"/><path d="M55.6,415.8 q2,-2 4,0" fill="none" stroke="#4e4e20" stroke-width=".7"/><path d="M44.2,396.2 q2,-2 4,0" fill="none" stroke="#4e4e20" stroke-width=".7"/><path d="M21.7,364.5 q2,-2 4,0" fill="none" stroke="#4e4e20" stroke-width=".7"/><path d="M78.4,375.6 q2,-2 4,0" fill="none" stroke="#4e4e20" stroke-width=".7"/><path d="M13.4,392.3 q2,-2 4,0" fill="none" stroke="#4e4e20" stroke-width=".7"/><path d="M15.2,361.0 q2,-2 4,0" fill="none" stroke="#4e4e20" stroke-width=".7"/><path d="M42.0,391.8 q2,-2 4,0" fill="none" stroke="#4e4e20" stroke-width=".7"/><path d="M56.5,401.6 q2,-2 4,0" fill="none" stroke="#4e4e20" stroke-width=".7"/><path d="M40.6,350.4 q2,-2 4,0" fill="none" stroke="#4e4e20" stroke-width=".7"/><path d="M63.7,349.3 q2,-2 4,0" fill="none" stroke="#4e4e20" stroke-width=".7"/><path d="M43.1,377.0 q2,-2 4,0" fill="none" stroke="#4e4e20" stroke-width=".7"/><path d="M59.5,402.1 q2,-2 4,0" fill="none" stroke="#4e4e20" stroke-width=".7"/><path d="M24.4,397.0 q2,-2 4,0" fill="none" stroke="#4e4e20" stroke-width=".7"/><path d="M61.1,382.7 q2,-2 4,0" fill="none" stroke="#4e4e20" stroke-width=".7"/><path d="M16.5,417.7 q2,-2 4,0" fill="none" stroke="#4e4e20" stroke-width=".7"/><path d="M53.5,350.0 q2,-2 4,0" fill="none" stroke="#4e4e20" stroke-width=".7"/><path d="M24.3,423.9 q2,-2 4,0" fill="none" stroke="#4e4e20" stroke-width=".7"/><path d="M23.5,376.4 q2,-2 4,0" fill="none" stroke="#4e4e20" stroke-width=".7"/><path d="M68.8,410.9 q2,-2 4,0" fill="none" stroke="#4e4e20" stroke-width=".7"/><path d="M56.3,404.3 q2,-2 4,0" fill="none" stroke="#4e4e20" stroke-width=".7"/><path d="M8.1,352.5 q2,-2 4,0" fill="none" stroke="#4e4e20" stroke-width=".7"/><path d="M84.1,409.2 q2,-2 4,0" fill="none" stroke="#4e4e20" stroke-width=".7"/><path d="M8.1,348.9 q2,-2 4,0" fill="none" stroke="#4e4e20" stroke-width=".7"/><path d="M24.5,419.5 q2,-2 4,0" fill="none" stroke="#4e4e20" stroke-width=".7"/><path d="M22.8,398.8 q2,-2 4,0" fill="none" stroke="#4e4e20" stroke-width=".7"/><path d="M80.4,396.1 q2,-2 4,0" fill="none" stroke="#4e4e20" stroke-width=".7"/><path d="M79.5,366.0 q2,-2 4,0" fill="none" stroke="#4e4e20" stroke-width=".7"/><path d="M17.4,346.5 q2,-2 4,0" fill="none" stroke="#4e4e20" stroke-width=".7"/><path d="M66.3,353.3 q2,-2 4,0" fill="none" stroke="#4e4e20" stroke-width=".7"/><path d="M83.8,401.8 q2,-2 4,0" fill="none" stroke="#4e4e20" stroke-width=".7"/><path d="M20.1,409.6 q2,-2 4,0" fill="none" stroke="#4e4e20" stroke-width=".7"/><path d="M18.2,386.0 q2,-2 4,0" fill="none" stroke="#4e4e20" stroke-width=".7"/><path d="M13.6,408.0 q2,-2 4,0" fill="none" stroke="#4e4e20" stroke-width=".7"/><path d="M77.1,418.3 q2,-2 4,0" fill="none" stroke="#4e4e20" stroke-width=".7"/><path d="M5.2,413.1 q2,-2 4,0" fill="none" stroke="#4e4e20" stroke-width=".7"/><path d="M50.0,410.7 q2,-2 4,0" fill="none" stroke="#4e4e20" stroke-width=".7"/><path d="M45.7,394.6 q2,-2 4,0" fill="none" stroke="#4e4e20" stroke-width=".7"/><path d="M53.2,409.0 q2,-2 4,0" fill="none" stroke="#4e4e20" stroke-width=".7"/><path d="M11.3,349.3 q2,-2 4,0" fill="none" stroke="#4e4e20" stroke-width=".7"/><path d="M49.2,368.3 q2,-2 4,0" fill="none" stroke="#4e4e20" stroke-width=".7"/><path d="M37.2,345.6 q2,-2 4,0" fill="none" stroke="#4e4e20" stroke-width=".7"/><path d="M65.3,346.9 q2,-2 4,0" fill="none" stroke="#4e4e20" stroke-width=".7"/><path d="M72.2,409.9 q2,-2 4,0" fill="none" stroke="#4e4e20" stroke-width=".7"/><path d="M42.1,354.8 q2,-2 4,0" fill="none" stroke="#4e4e20" stroke-width=".7"/><path d="M57.7,361.6 q2,-2 4,0" fill="none" stroke="#4e4e20" stroke-width=".7"/><path d="M39.8,353.8 q2,-2 4,0" fill="none" stroke="#4e4e20" stroke-width=".7"/><path d="M84.1,388.7 q2,-2 4,0" fill="none" stroke="#4e4e20" stroke-width=".7"/><path d="M33.6,352.5 q2,-2 4,0" fill="none" stroke="#4e4e20" stroke-width=".7"/><path d="M64.1,413.0 q2,-2 4,0" fill="none" stroke="#4e4e20" stroke-width=".7"/><path d="M73.7,353.1 q2,-2 4,0" fill="none" stroke="#4e4e20" stroke-width=".7"/><path d="M34.8,369.2 q2,-2 4,0" fill="none" stroke="#4e4e20" stroke-width=".7"/><path d="M66.8,356.8 q2,-2 4,0" fill="none" stroke="#4e4e20" stroke-width=".7"/><path d="M54.1,423.3 q2,-2 4,0" fill="none" stroke="#4e4e20" stroke-width=".7"/><path d="M67.3,345.6 q2,-2 4,0" fill="none" stroke="#4e4e20" stroke-width=".7"/><path d="M11.1,354.1 q2,-2 4,0" fill="none" stroke="#4e4e20" stroke-width=".7"/><path d="M61.1,392.9 q2,-2 4,0" fill="none" stroke="#4e4e20" stroke-width=".7"/><path d="M47.1,381.4 q2,-2 4,0" fill="none" stroke="#4e4e20" stroke-width=".7"/><path d="M38.0,393.9 q2,-2 4,0" fill="none" stroke="#4e4e20" stroke-width=".7"/><path d="M57.5,418.3 q2,-2 4,0" fill="none" stroke="#4e4e20" stroke-width=".7"/><path d="M64.3,408.7 q2,-2 4,0" fill="none" stroke="#4e4e20" stroke-width=".7"/><path d="M78.9,412.0 q2,-2 4,0" fill="none" stroke="#4e4e20" stroke-width=".7"/><path d="M63.1,347.4 q2,-2 4,0" fill="none" stroke="#4e4e20" stroke-width=".7"/><path d="M60.1,413.0 q2,-2 4,0" fill="none" stroke="#4e4e20" stroke-width=".7"/><path d="M39.9,415.3 q2,-2 4,0" fill="none" stroke="#4e4e20" stroke-width=".7"/><path d="M19.6,420.4 q2,-2 4,0" fill="none" stroke="#4e4e20" stroke-width=".7"/><path d="M40.8,401.5 q2,-2 4,0" fill="none" stroke="#4e4e20" stroke-width=".7"/><path d="M25.5,369.0 q2,-2 4,0" fill="none" stroke="#4e4e20" stroke-width=".7"/><path d="M33.2,371.0 q2,-2 4,0" fill="none" stroke="#4e4e20" stroke-width=".7"/><path d="M12.7,380.4 q2,-2 4,0" fill="none" stroke="#4e4e20" stroke-width=".7"/><path d="M84.5,397.3 q2,-2 4,0" fill="none" stroke="#4e4e20" stroke-width=".7"/><path d="M80.5,406.0 q2,-2 4,0" fill="none" stroke="#4e4e20" stroke-width=".7"/><ellipse cx="20" cy="455" rx="8" ry="24" fill="#e0e0a0" opacity=".55"/><ellipse cx="60" cy="395" rx="10" ry="8" fill="#d8d898" opacity=".4"/><ellipse cx="38" cy="440" rx="6" ry="14" fill="#c8c888" opacity=".35"/><ellipse cx="66" cy="470" rx="10" ry="14" fill="#c8c888" opacity=".35"/><path d="M3,475 Q10,492 30,488 Q36,470 34,448 M52,455 Q58,488 86,485" fill="none" stroke="#4a4a1c" stroke-width="1"/><path d="M18,496 Q26,483 42,487 Q60,482 72,494 L76,504 L14,504Z" fill="#86864a" stroke="#4a4a1c" stroke-width=".9"/></g><path d="M1,1 L52,1 L64,6 L76,12 L82,20 L83,32 L79,42 L73,52 L67,62 L61,71 L64,79 L70,83 L79,88 L85,97 L87,112 L84,125 L82,133 L85,139 L84,149 L80,157 L84,167 L84,179 L83,189 L84,199 L85,212 L86,227 L87,247 L88,267 L89,287 L88,307 L87,329 L77,330 L82,337 L87,347 L89,357 L89,422 L77,425 L68,432 L65,442 L67,457 L75,467 L84,474 L89,479 L89,495 L82,503 L10,503 L4,495 L1,487 L1,387 L1,337 L1,297 L4,287 L1,281 L1,262 L7,257 L1,250 L1,232 L9,225 L1,217 L1,202 L5,187 L5,107 L1,99 L1,1Z" fill="none" stroke="#4a4a1c" stroke-width=".9"/><rect x="0.5" y="0.5" width="89" height="503" fill="none" stroke="#ff0000" stroke-width="1"/></svg>
<div class="a" style="left:691px;top:121px;width:145px;height:75px;border:1px solid #0000ff;border-top:none"></div>
<svg class="a" style="left:712px;top:218px" width="10" height="53" viewBox="0 0 10 53"><defs><linearGradient id="tg" x1="0" x2="1"><stop offset="0" stop-color="#a09848"/><stop offset=".5" stop-color="#c4bc6c"/><stop offset="1" stop-color="#948c40"/></linearGradient></defs><rect x="0" y="0" width="10" height="53" fill="url(#tg)"/><rect x="5" y="17" width="1" height="1" fill="#e0d890"/><rect x="0" y="21" width="1" height="3" fill="#e0d890"/><rect x="5" y="0" width="1" height="2" fill="#5a5428"/><rect x="2" y="6" width="1" height="2" fill="#e0d890"/><rect x="5" y="23" width="1" height="3" fill="#5a5428"/><rect x="7" y="10" width="1" height="3" fill="#5a5428"/><rect x="3" y="26" width="1" height="3" fill="#5a5428"/><rect x="3" y="18" width="1" height="3" fill="#e0d890"/><rect x="6" y="45" width="1" height="1" fill="#6a6430"/><rect x="7" y="39" width="1" height="3" fill="#6a6430"/><rect x="4" y="48" width="2" height="1" fill="#e0d890"/><rect x="4" y="1" width="1" height="3" fill="#5a5428"/><rect x="4" y="39" width="1" height="3" fill="#5a5428"/><rect x="1" y="44" width="2" height="2" fill="#5a5428"/><rect x="1" y="46" width="1" height="3" fill="#5a5428"/><rect x="1" y="23" width="1" height="1" fill="#6a6430"/><rect x="1" y="46" width="2" height="3" fill="#6a6430"/><rect x="4" y="49" width="2" height="1" fill="#5a5428"/><rect x="4" y="19" width="2" height="2" fill="#6a6430"/><rect x="2" y="28" width="1" height="2" fill="#e0d890"/><rect x="5" y="13" width="1" height="2" fill="#5a5428"/><rect x="1" y="13" width="2" height="3" fill="#e0d890"/><rect x="4" y="39" width="1" height="1" fill="#5a5428"/><rect x="1" y="10" width="2" height="3" fill="#e0d890"/><rect x="2" y="2" width="1" height="2" fill="#5a5428"/><rect x="0" y="24" width="2" height="3" fill="#5a5428"/><rect x="3" y="3" width="1" height="2" fill="#5a5428"/><rect x="4" y="8" width="2" height="2" fill="#6a6430"/><rect x="2" y="8" width="2" height="3" fill="#e0d890"/><rect x="5" y="23" width="1" height="3" fill="#6a6430"/><rect x="1" y="15" width="1" height="2" fill="#e0d890"/><rect x="0" y="14" width="1" height="1" fill="#e0d890"/><rect x="5" y="15" width="2" height="2" fill="#5a5428"/><rect x="0" y="6" width="2" height="2" fill="#5a5428"/><rect x="4" y="1" width="2" height="2" fill="#e0d890"/><rect x="1" y="7" width="2" height="3" fill="#6a6430"/><rect x="7" y="5" width="2" height="1" fill="#e0d890"/><rect x="7" y="11" width="1" height="2" fill="#e0d890"/><rect x="0" y="7" width="1" height="1" fill="#e0d890"/><rect x="5" y="28" width="2" height="1" fill="#e0d890"/><rect x="0" y="4" width="1" height="2" fill="#6a6430"/><rect x="3" y="36" width="2" height="1" fill="#5a5428"/><rect x="6" y="33" width="1" height="1" fill="#6a6430"/><rect x="2" y="32" width="2" height="1" fill="#5a5428"/><rect x="1" y="30" width="2" height="2" fill="#e0d890"/><rect x="2" y="4" width="2" height="3" fill="#e0d890"/><rect x="1" y="13" width="2" height="3" fill="#e0d890"/><rect x="1" y="7" width="2" height="2" fill="#e0d890"/><rect x="2" y="32" width="1" height="3" fill="#6a6430"/><rect x="0" y="41" width="2" height="3" fill="#6a6430"/><rect x="0" y="34" width="1" height="2" fill="#6a6430"/><rect x="2" y="41" width="2" height="1" fill="#e0d890"/><rect x="5" y="47" width="1" height="2" fill="#6a6430"/><rect x="2" y="44" width="1" height="1" fill="#6a6430"/><rect x="7" y="46" width="1" height="2" fill="#5a5428"/><rect x="0" y="18" width="2" height="1" fill="#5a5428"/><rect x="4" y="47" width="2" height="3" fill="#5a5428"/><rect x="1" y="25" width="1" height="3" fill="#5a5428"/><rect x="0" y="23" width="2" height="1" fill="#5a5428"/><rect x="7" y="23" width="2" height="3" fill="#5a5428"/><rect x="3" y="12" width="2" height="1" fill="#e0d890"/><rect x="7" y="17" width="1" height="2" fill="#5a5428"/><rect x="6" y="11" width="2" height="2" fill="#6a6430"/><rect x="0" y="36" width="2" height="1" fill="#5a5428"/><rect x="0" y="9" width="2" height="3" fill="#e0d890"/><rect x="7" y="35" width="2" height="1" fill="#e0d890"/><rect x="3" y="35" width="1" height="2" fill="#e0d890"/><rect x="2" y="8" width="1" height="3" fill="#e0d890"/><rect x="0" y="10" width="1" height="2" fill="#5a5428"/><rect x="1" y="37" width="2" height="2" fill="#e0d890"/></svg>
<svg class="a" style="left:781px;top:218px" width="10" height="53" viewBox="0 0 10 53"><defs><linearGradient id="tg" x1="0" x2="1"><stop offset="0" stop-color="#a09848"/><stop offset=".5" stop-color="#c4bc6c"/><stop offset="1" stop-color="#948c40"/></linearGradient></defs><rect x="0" y="0" width="10" height="53" fill="url(#tg)"/><rect x="5" y="17" width="1" height="1" fill="#e0d890"/><rect x="0" y="21" width="1" height="3" fill="#e0d890"/><rect x="5" y="0" width="1" height="2" fill="#5a5428"/><rect x="2" y="6" width="1" height="2" fill="#e0d890"/><rect x="5" y="23" width="1" height="3" fill="#5a5428"/><rect x="7" y="10" width="1" height="3" fill="#5a5428"/><rect x="3" y="26" width="1" height="3" fill="#5a5428"/><rect x="3" y="18" width="1" height="3" fill="#e0d890"/><rect x="6" y="45" width="1" height="1" fill="#6a6430"/><rect x="7" y="39" width="1" height="3" fill="#6a6430"/><rect x="4" y="48" width="2" height="1" fill="#e0d890"/><rect x="4" y="1" width="1" height="3" fill="#5a5428"/><rect x="4" y="39" width="1" height="3" fill="#5a5428"/><rect x="1" y="44" width="2" height="2" fill="#5a5428"/><rect x="1" y="46" width="1" height="3" fill="#5a5428"/><rect x="1" y="23" width="1" height="1" fill="#6a6430"/><rect x="1" y="46" width="2" height="3" fill="#6a6430"/><rect x="4" y="49" width="2" height="1" fill="#5a5428"/><rect x="4" y="19" width="2" height="2" fill="#6a6430"/><rect x="2" y="28" width="1" height="2" fill="#e0d890"/><rect x="5" y="13" width="1" height="2" fill="#5a5428"/><rect x="1" y="13" width="2" height="3" fill="#e0d890"/><rect x="4" y="39" width="1" height="1" fill="#5a5428"/><rect x="1" y="10" width="2" height="3" fill="#e0d890"/><rect x="2" y="2" width="1" height="2" fill="#5a5428"/><rect x="0" y="24" width="2" height="3" fill="#5a5428"/><rect x="3" y="3" width="1" height="2" fill="#5a5428"/><rect x="4" y="8" width="2" height="2" fill="#6a6430"/><rect x="2" y="8" width="2" height="3" fill="#e0d890"/><rect x="5" y="23" width="1" height="3" fill="#6a6430"/><rect x="1" y="15" width="1" height="2" fill="#e0d890"/><rect x="0" y="14" width="1" height="1" fill="#e0d890"/><rect x="5" y="15" width="2" height="2" fill="#5a5428"/><rect x="0" y="6" width="2" height="2" fill="#5a5428"/><rect x="4" y="1" width="2" height="2" fill="#e0d890"/><rect x="1" y="7" width="2" height="3" fill="#6a6430"/><rect x="7" y="5" width="2" height="1" fill="#e0d890"/><rect x="7" y="11" width="1" height="2" fill="#e0d890"/><rect x="0" y="7" width="1" height="1" fill="#e0d890"/><rect x="5" y="28" width="2" height="1" fill="#e0d890"/><rect x="0" y="4" width="1" height="2" fill="#6a6430"/><rect x="3" y="36" width="2" height="1" fill="#5a5428"/><rect x="6" y="33" width="1" height="1" fill="#6a6430"/><rect x="2" y="32" width="2" height="1" fill="#5a5428"/><rect x="1" y="30" width="2" height="2" fill="#e0d890"/><rect x="2" y="4" width="2" height="3" fill="#e0d890"/><rect x="1" y="13" width="2" height="3" fill="#e0d890"/><rect x="1" y="7" width="2" height="2" fill="#e0d890"/><rect x="2" y="32" width="1" height="3" fill="#6a6430"/><rect x="0" y="41" width="2" height="3" fill="#6a6430"/><rect x="0" y="34" width="1" height="2" fill="#6a6430"/><rect x="2" y="41" width="2" height="1" fill="#e0d890"/><rect x="5" y="47" width="1" height="2" fill="#6a6430"/><rect x="2" y="44" width="1" height="1" fill="#6a6430"/><rect x="7" y="46" width="1" height="2" fill="#5a5428"/><rect x="0" y="18" width="2" height="1" fill="#5a5428"/><rect x="4" y="47" width="2" height="3" fill="#5a5428"/><rect x="1" y="25" width="1" height="3" fill="#5a5428"/><rect x="0" y="23" width="2" height="1" fill="#5a5428"/><rect x="7" y="23" width="2" height="3" fill="#5a5428"/><rect x="3" y="12" width="2" height="1" fill="#e0d890"/><rect x="7" y="17" width="1" height="2" fill="#5a5428"/><rect x="6" y="11" width="2" height="2" fill="#6a6430"/><rect x="0" y="36" width="2" height="1" fill="#5a5428"/><rect x="0" y="9" width="2" height="3" fill="#e0d890"/><rect x="7" y="35" width="2" height="1" fill="#e0d890"/><rect x="3" y="35" width="1" height="2" fill="#e0d890"/><rect x="2" y="8" width="1" height="3" fill="#e0d890"/><rect x="0" y="10" width="1" height="2" fill="#5a5428"/><rect x="1" y="37" width="2" height="2" fill="#e0d890"/></svg>
<svg class="a" style="left:850px;top:218px" width="10" height="53" viewBox="0 0 10 53"><defs><linearGradient id="tg" x1="0" x2="1"><stop offset="0" stop-color="#a09848"/><stop offset=".5" stop-color="#c4bc6c"/><stop offset="1" stop-color="#948c40"/></linearGradient></defs><rect x="0" y="0" width="10" height="53" fill="url(#tg)"/><rect x="5" y="17" width="1" height="1" fill="#e0d890"/><rect x="0" y="21" width="1" height="3" fill="#e0d890"/><rect x="5" y="0" width="1" height="2" fill="#5a5428"/><rect x="2" y="6" width="1" height="2" fill="#e0d890"/><rect x="5" y="23" width="1" height="3" fill="#5a5428"/><rect x="7" y="10" width="1" height="3" fill="#5a5428"/><rect x="3" y="26" width="1" height="3" fill="#5a5428"/><rect x="3" y="18" width="1" height="3" fill="#e0d890"/><rect x="6" y="45" width="1" height="1" fill="#6a6430"/><rect x="7" y="39" width="1" height="3" fill="#6a6430"/><rect x="4" y="48" width="2" height="1" fill="#e0d890"/><rect x="4" y="1" width="1" height="3" fill="#5a5428"/><rect x="4" y="39" width="1" height="3" fill="#5a5428"/><rect x="1" y="44" width="2" height="2" fill="#5a5428"/><rect x="1" y="46" width="1" height="3" fill="#5a5428"/><rect x="1" y="23" width="1" height="1" fill="#6a6430"/><rect x="1" y="46" width="2" height="3" fill="#6a6430"/><rect x="4" y="49" width="2" height="1" fill="#5a5428"/><rect x="4" y="19" width="2" height="2" fill="#6a6430"/><rect x="2" y="28" width="1" height="2" fill="#e0d890"/><rect x="5" y="13" width="1" height="2" fill="#5a5428"/><rect x="1" y="13" width="2" height="3" fill="#e0d890"/><rect x="4" y="39" width="1" height="1" fill="#5a5428"/><rect x="1" y="10" width="2" height="3" fill="#e0d890"/><rect x="2" y="2" width="1" height="2" fill="#5a5428"/><rect x="0" y="24" width="2" height="3" fill="#5a5428"/><rect x="3" y="3" width="1" height="2" fill="#5a5428"/><rect x="4" y="8" width="2" height="2" fill="#6a6430"/><rect x="2" y="8" width="2" height="3" fill="#e0d890"/><rect x="5" y="23" width="1" height="3" fill="#6a6430"/><rect x="1" y="15" width="1" height="2" fill="#e0d890"/><rect x="0" y="14" width="1" height="1" fill="#e0d890"/><rect x="5" y="15" width="2" height="2" fill="#5a5428"/><rect x="0" y="6" width="2" height="2" fill="#5a5428"/><rect x="4" y="1" width="2" height="2" fill="#e0d890"/><rect x="1" y="7" width="2" height="3" fill="#6a6430"/><rect x="7" y="5" width="2" height="1" fill="#e0d890"/><rect x="7" y="11" width="1" height="2" fill="#e0d890"/><rect x="0" y="7" width="1" height="1" fill="#e0d890"/><rect x="5" y="28" width="2" height="1" fill="#e0d890"/><rect x="0" y="4" width="1" height="2" fill="#6a6430"/><rect x="3" y="36" width="2" height="1" fill="#5a5428"/><rect x="6" y="33" width="1" height="1" fill="#6a6430"/><rect x="2" y="32" width="2" height="1" fill="#5a5428"/><rect x="1" y="30" width="2" height="2" fill="#e0d890"/><rect x="2" y="4" width="2" height="3" fill="#e0d890"/><rect x="1" y="13" width="2" height="3" fill="#e0d890"/><rect x="1" y="7" width="2" height="2" fill="#e0d890"/><rect x="2" y="32" width="1" height="3" fill="#6a6430"/><rect x="0" y="41" width="2" height="3" fill="#6a6430"/><rect x="0" y="34" width="1" height="2" fill="#6a6430"/><rect x="2" y="41" width="2" height="1" fill="#e0d890"/><rect x="5" y="47" width="1" height="2" fill="#6a6430"/><rect x="2" y="44" width="1" height="1" fill="#6a6430"/><rect x="7" y="46" width="1" height="2" fill="#5a5428"/><rect x="0" y="18" width="2" height="1" fill="#5a5428"/><rect x="4" y="47" width="2" height="3" fill="#5a5428"/><rect x="1" y="25" width="1" height="3" fill="#5a5428"/><rect x="0" y="23" width="2" height="1" fill="#5a5428"/><rect x="7" y="23" width="2" height="3" fill="#5a5428"/><rect x="3" y="12" width="2" height="1" fill="#e0d890"/><rect x="7" y="17" width="1" height="2" fill="#5a5428"/><rect x="6" y="11" width="2" height="2" fill="#6a6430"/><rect x="0" y="36" width="2" height="1" fill="#5a5428"/><rect x="0" y="9" width="2" height="3" fill="#e0d890"/><rect x="7" y="35" width="2" height="1" fill="#e0d890"/><rect x="3" y="35" width="1" height="2" fill="#e0d890"/><rect x="2" y="8" width="1" height="3" fill="#e0d890"/><rect x="0" y="10" width="1" height="2" fill="#5a5428"/><rect x="1" y="37" width="2" height="2" fill="#e0d890"/></svg>
<svg class="a" style="left:771px;top:216px" width="33" height="57" viewBox="0 0 33 57"><rect x="0.5" y="0.5" width="32" height="56" fill="none" stroke="#ff0000"/><path d="M1 1 L32 56 M32 1 L1 56" stroke="#ff0000"/></svg>
<svg class="a" style="left:781px;top:218px" width="10" height="53" viewBox="0 0 10 53"><defs><linearGradient id="tg" x1="0" x2="1"><stop offset="0" stop-color="#a09848"/><stop offset=".5" stop-color="#c4bc6c"/><stop offset="1" stop-color="#948c40"/></linearGradient></defs><rect x="0" y="0" width="10" height="53" fill="url(#tg)"/><rect x="5" y="17" width="1" height="1" fill="#e0d890"/><rect x="0" y="21" width="1" height="3" fill="#e0d890"/><rect x="5" y="0" width="1" height="2" fill="#5a5428"/><rect x="2" y="6" width="1" height="2" fill="#e0d890"/><rect x="5" y="23" width="1" height="3" fill="#5a5428"/><rect x="7" y="10" width="1" height="3" fill="#5a5428"/><rect x="3" y="26" width="1" height="3" fill="#5a5428"/><rect x="3" y="18" width="1" height="3" fill="#e0d890"/><rect x="6" y="45" width="1" height="1" fill="#6a6430"/><rect x="7" y="39" width="1" height="3" fill="#6a6430"/><rect x="4" y="48" width="2" height="1" fill="#e0d890"/><rect x="4" y="1" width="1" height="3" fill="#5a5428"/><rect x="4" y="39" width="1" height="3" fill="#5a5428"/><rect x="1" y="44" width="2" height="2" fill="#5a5428"/><rect x="1" y="46" width="1" height="3" fill="#5a5428"/><rect x="1" y="23" width="1" height="1" fill="#6a6430"/><rect x="1" y="46" width="2" height="3" fill="#6a6430"/><rect x="4" y="49" width="2" height="1" fill="#5a5428"/><rect x="4" y="19" width="2" height="2" fill="#6a6430"/><rect x="2" y="28" width="1" height="2" fill="#e0d890"/><rect x="5" y="13" width="1" height="2" fill="#5a5428"/><rect x="1" y="13" width="2" height="3" fill="#e0d890"/><rect x="4" y="39" width="1" height="1" fill="#5a5428"/><rect x="1" y="10" width="2" height="3" fill="#e0d890"/><rect x="2" y="2" width="1" height="2" fill="#5a5428"/><rect x="0" y="24" width="2" height="3" fill="#5a5428"/><rect x="3" y="3" width="1" height="2" fill="#5a5428"/><rect x="4" y="8" width="2" height="2" fill="#6a6430"/><rect x="2" y="8" width="2" height="3" fill="#e0d890"/><rect x="5" y="23" width="1" height="3" fill="#6a6430"/><rect x="1" y="15" width="1" height="2" fill="#e0d890"/><rect x="0" y="14" width="1" height="1" fill="#e0d890"/><rect x="5" y="15" width="2" height="2" fill="#5a5428"/><rect x="0" y="6" width="2" height="2" fill="#5a5428"/><rect x="4" y="1" width="2" height="2" fill="#e0d890"/><rect x="1" y="7" width="2" height="3" fill="#6a6430"/><rect x="7" y="5" width="2" height="1" fill="#e0d890"/><rect x="7" y="11" width="1" height="2" fill="#e0d890"/><rect x="0" y="7" width="1" height="1" fill="#e0d890"/><rect x="5" y="28" width="2" height="1" fill="#e0d890"/><rect x="0" y="4" width="1" height="2" fill="#6a6430"/><rect x="3" y="36" width="2" height="1" fill="#5a5428"/><rect x="6" y="33" width="1" height="1" fill="#6a6430"/><rect x="2" y="32" width="2" height="1" fill="#5a5428"/><rect x="1" y="30" width="2" height="2" fill="#e0d890"/><rect x="2" y="4" width="2" height="3" fill="#e0d890"/><rect x="1" y="13" width="2" height="3" fill="#e0d890"/><rect x="1" y="7" width="2" height="2" fill="#e0d890"/><rect x="2" y="32" width="1" height="3" fill="#6a6430"/><rect x="0" y="41" width="2" height="3" fill="#6a6430"/><rect x="0" y="34" width="1" height="2" fill="#6a6430"/><rect x="2" y="41" width="2" height="1" fill="#e0d890"/><rect x="5" y="47" width="1" height="2" fill="#6a6430"/><rect x="2" y="44" width="1" height="1" fill="#6a6430"/><rect x="7" y="46" width="1" height="2" fill="#5a5428"/><rect x="0" y="18" width="2" height="1" fill="#5a5428"/><rect x="4" y="47" width="2" height="3" fill="#5a5428"/><rect x="1" y="25" width="1" height="3" fill="#5a5428"/><rect x="0" y="23" width="2" height="1" fill="#5a5428"/><rect x="7" y="23" width="2" height="3" fill="#5a5428"/><rect x="3" y="12" width="2" height="1" fill="#e0d890"/><rect x="7" y="17" width="1" height="2" fill="#5a5428"/><rect x="6" y="11" width="2" height="2" fill="#6a6430"/><rect x="0" y="36" width="2" height="1" fill="#5a5428"/><rect x="0" y="9" width="2" height="3" fill="#e0d890"/><rect x="7" y="35" width="2" height="1" fill="#e0d890"/><rect x="3" y="35" width="1" height="2" fill="#e0d890"/><rect x="2" y="8" width="1" height="3" fill="#e0d890"/><rect x="0" y="10" width="1" height="2" fill="#5a5428"/><rect x="1" y="37" width="2" height="2" fill="#e0d890"/></svg>
<svg class="a" style="left:120px;top:558px" width="75" height="76" viewBox="0 0 75 76"><path d="M7.5 20 V67.5 H54.5 V20.5 H7.5" fill="none" stroke="#00c000"/><path d="M7.5 4 V20 M4 1 L7.5 5 L11 1 M4 27 L7.5 20 L11 27" fill="none" stroke="#00c000"/><path d="M45 66 L54 67.5 L45 69" fill="none" stroke="#ff0000"/><path d="M63 62 L69 72 M69 62 L63 72" stroke="#ff0000"/></svg>
<svg class="a" style="left:1262px;top:664px" width="98" height="104" viewBox="0 0 98 104"><rect x="6" y="23" width="32" height="50" rx="7" fill="#ed1c24"/><path d="M35 36 Q31 30 26 30 Q17 31 17 48 Q17 65 26 66 Q31 66 35 60" fill="none" stroke="#fff" stroke-width="7"/><rect x="24" y="25" width="2" height="8" fill="#ed1c24"/><rect x="24" y="63" width="2" height="8" fill="#ed1c24"/><path d="M43 34 V72 M59 34 V72" stroke="#244a9c" stroke-width="4"/><path d="M43 44 L58 72" stroke="#244a9c" stroke-width="4.5"/><path d="M40 42 L46 40 L56 68 L50 70Z" fill="#fff" opacity=".0"/><path d="M50 25 L52.2 30.5 L58 30.8 L53.5 34.5 L55 40 L50 37 L45 40 L46.5 34.5 L42 30.8 L47.8 30.5Z" fill="#a07848"/><path d="M48 27 Q50 14 61 5" stroke="#ed1c24" stroke-width="3.5" fill="none" stroke-linecap="round"/><path d="M52 29 Q60 15 71 9" stroke="#244a9c" stroke-width="4" fill="none" stroke-linecap="round"/><path d="M55 32 Q62 23 71 21" stroke="#f7941d" stroke-width="3" fill="none" stroke-linecap="round"/><path d="M87 38 Q83 32 77 32 Q69 33 69 52 Q69 70 77 71 Q83 71 87 66" fill="none" stroke="#f7941d" stroke-width="6"/><rect x="75" y="27" width="2" height="8" fill="#f0f0f0"/><rect x="75" y="68" width="2" height="6" fill="#3a4868"/><rect x="5" y="77" width="85" height="15" rx="7" fill="#1d3a7c" stroke="#c8d0e8" stroke-width=".8"/><text x="47.5" y="89" text-anchor="middle" font-family="Liberation Serif" font-weight="bold" font-size="13" fill="#fff" letter-spacing="-.3">Khomaucnc.vn</text><rect x="12" y="94" width="72" height="1.5" fill="#b08860"/></svg>
</body></html>
